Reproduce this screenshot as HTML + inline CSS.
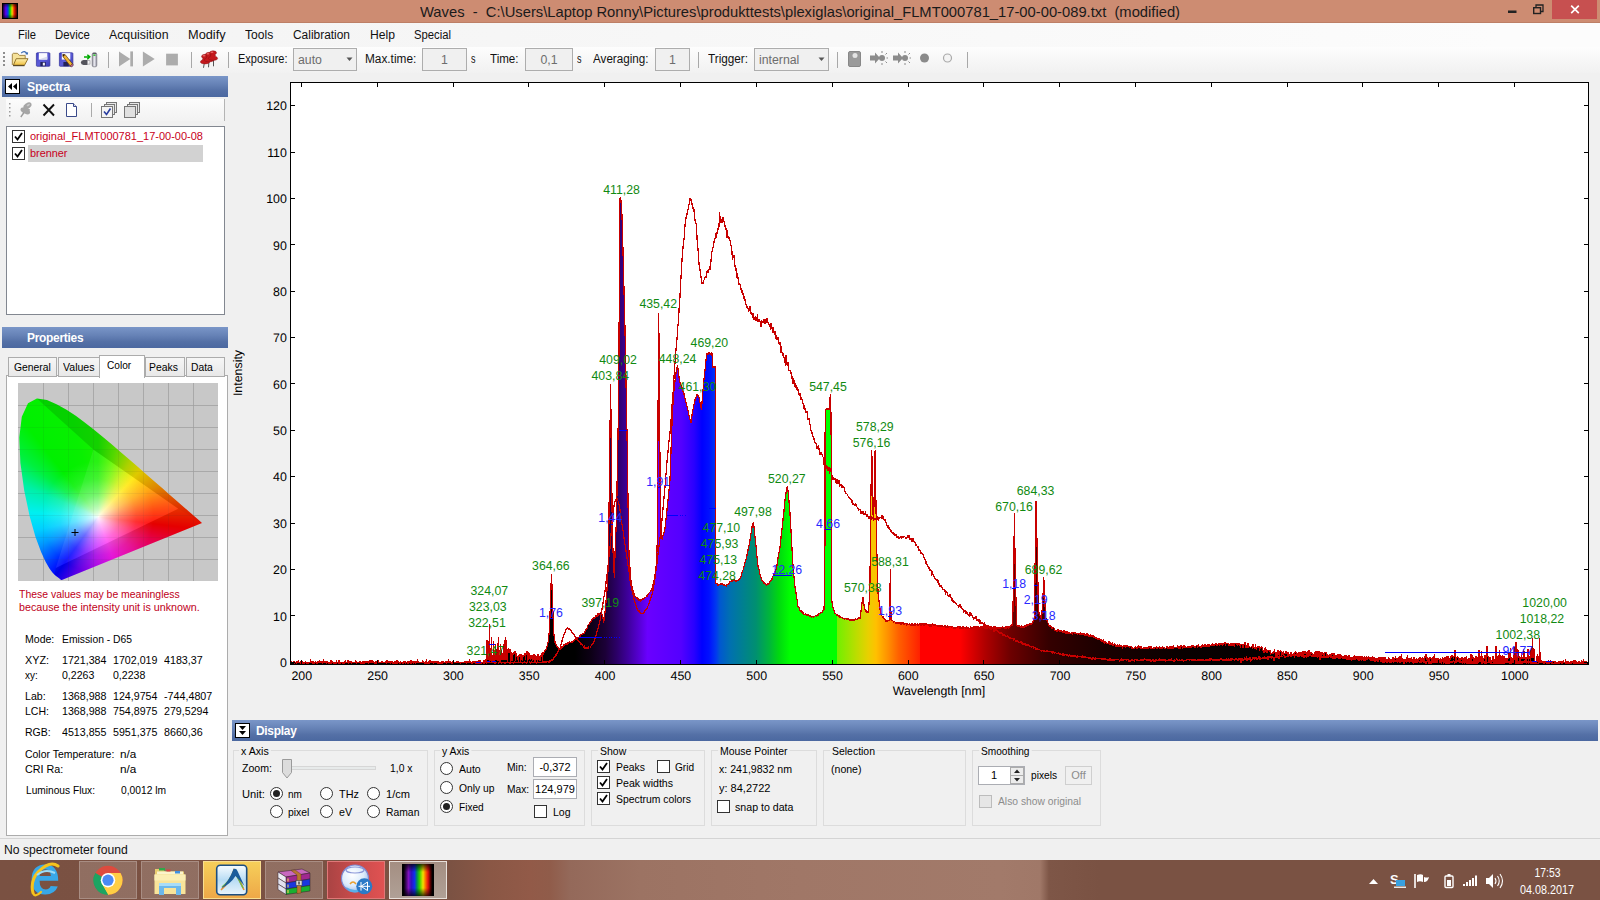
<!DOCTYPE html>
<html><head><meta charset='utf-8'><title>Waves</title>
<style>
*{box-sizing:border-box;margin:0;padding:0}
html,body{width:1600px;height:900px;overflow:hidden;background:#f0f0f0;font-family:"Liberation Sans",Arial,sans-serif;font-size:11px;color:#000}
.abs,.abs *{position:absolute}
.t{position:absolute;white-space:nowrap;line-height:1;transform-origin:0 50%;transform:scaleX(.96)}
#titlebar{position:absolute;left:0;top:0;width:1600px;height:23px;background:#cd8c72;border-bottom:1px solid #bd7f66}
#title{left:420px;top:4px;font-size:15px;color:#1a1a1a}
#close{position:absolute;left:1552px;top:0;width:45px;height:19px;background:#c75050}
#menubar{position:absolute;left:0;top:23px;width:1600px;height:24px;background:linear-gradient(90deg,#f4f4f4,#f6f6f6 500px,#fcfcfc 1500px)}
.mi{position:absolute;top:28px;font-size:12.3px;transform-origin:0 50%;color:#111;white-space:nowrap;line-height:14px}
#toolbar{position:absolute;left:0;top:47px;width:1600px;height:26px;background:linear-gradient(#fdfdfd,#f1f1f1)}
.tl{position:absolute;top:52px;font-size:12.3px;transform-origin:0 50%;color:#111;white-space:nowrap;line-height:14px}
.tbx{position:absolute;top:48px;height:23px;border:1px solid #adadad;background:#f0f0f0;color:#6d6d6d;font-size:12.3px;line-height:22px;text-align:center}
.sep{position:absolute;width:1px;background:#a8a8a8}
.hdr{position:absolute;height:21px;background:linear-gradient(#7a96c8,#6682b6 40%,#5470a6 70%,#4b68a0);color:#fff;font-weight:bold;font-size:13px;line-height:20px;letter-spacing:-0.3px}
.hbox{position:absolute;width:15px;height:15px;background:#fff;border:1px solid #000}
.list{position:absolute;background:#fff;border:1px solid #828790}
.cb{position:absolute;width:13px;height:13px;background:#fff;border:1px solid #333}
.cb.dis{border-color:#bcbcbc;background:#e6e6e6}
.rb{position:absolute;width:13px;height:13px;background:#fff;border:1px solid #333;border-radius:50%}
.rb.on::after{content:"";position:absolute;left:2px;top:2px;width:7px;height:7px;border-radius:50%;background:#222}
.grp{position:absolute;border:1px solid #dcdcdc}
.gl{position:absolute;background:#f0f0f0;box-shadow:-2px 0 0 #f0f0f0,2px 0 0 #f0f0f0;transform-origin:0 50%;white-space:nowrap;line-height:12px;font-size:11px}
.inp{position:absolute;background:#fff;border:1px solid #abadb3;font-size:11px;line-height:17px;text-align:center;white-space:nowrap;overflow:hidden}
.tab{position:absolute;top:357px;height:20px;border:1px solid #acacac;background:linear-gradient(#f6f6f6,#e8e8e8);font-size:11px;line-height:19px;text-align:center;white-space:nowrap}
.tab.sel{top:355px;height:23px;background:#fff;border-bottom:none;line-height:21px;z-index:2}
#taskbar{position:absolute;left:0;top:860px;width:1600px;height:40px;background:linear-gradient(90deg,#7a5142 0px,#7b5243 450px,#8a5745 490px,#925a48 530px,#905c4a 550px,#94695a 570px,#9c7363 640px,#a07767 800px,#a27a6a 1000px,#a07868 1040px,#7e5647 1049px,#7a5243 1100px,#7a5243 1600px)}
.tb{position:absolute;top:861px;width:58px;height:38px;border:1px solid rgba(255,255,255,.22);background:rgba(255,255,255,.17)}

</style></head>
<body>
<div id="titlebar">
 <svg style="position:absolute;left:2px;top:3px" width="16" height="16"><defs><linearGradient id="ai" x1="0" x2="1" y1="0" y2="0"><stop offset="0" stop-color="#200040"/><stop offset=".2" stop-color="#6000ff"/><stop offset=".35" stop-color="#0040ff"/><stop offset=".5" stop-color="#00e000"/><stop offset=".65" stop-color="#ffe000"/><stop offset=".8" stop-color="#ff2000"/><stop offset="1" stop-color="#400000"/></linearGradient><linearGradient id="aiv" x1="0" x2="0" y1="0" y2="1"><stop offset="0" stop-color="#000" stop-opacity=".7"/><stop offset=".3" stop-color="#000" stop-opacity=".05"/><stop offset=".7" stop-color="#000" stop-opacity=".05"/><stop offset="1" stop-color="#000" stop-opacity=".7"/></linearGradient></defs><rect width="16" height="16" fill="#000"/><rect x="1" y="1" width="14" height="14" fill="url(#ai)"/><rect width="16" height="16" fill="url(#aiv)"/></svg>
 <span class="t" id="title" style="transform:scaleX(0.9830)">Waves&nbsp; -&nbsp; C:\Users\Laptop Ronny\Pictures\produkttests\plexiglas\original_FLMT000781_17-00-00-089.txt&nbsp; (modified)</span>
 <div id="close"></div>
 <svg style="position:absolute;left:1500px;top:0" width="100" height="22"><rect x="8" y="10.500" width="8.500" height="2.500" fill="#222"/><path d="M36,7.500 v-2.500 h7 v6.500 h-2.500" stroke="#222" stroke-width="1.300" fill="none"/><rect x="33.700" y="7.700" width="6.800" height="5.800" stroke="#222" stroke-width="1.400" fill="none"/><path d="M71.200,5.700 l7.600,7.400 M78.800,5.700 l-7.600,7.400" stroke="#fff" stroke-width="1.700" fill="none"/></svg>
</div>
<div id="menubar"></div>
<span class="mi" style="left:18px;transform:scaleX(0.9078)">File</span>
<span class="mi" style="left:55px;transform:scaleX(0.9230)">Device</span>
<span class="mi" style="left:109px;transform:scaleX(1.0005)">Acquisition</span>
<span class="mi" style="left:188px;transform:scaleX(1.0381)">Modify</span>
<span class="mi" style="left:245px;transform:scaleX(0.9819)">Tools</span>
<span class="mi" style="left:293px;transform:scaleX(0.9694)">Calibration</span>
<span class="mi" style="left:370px;transform:scaleX(0.9883)">Help</span>
<span class="mi" style="left:414px;transform:scaleX(0.9171)">Special</span>
<div id="toolbar"></div>
<svg id="tbicons" style="position:absolute;left:0;top:45.500px" width="1000" height="26">
 <g fill="#8e8e8e"><rect x="3" y="6" width="2" height="2"/><rect x="3" y="10" width="2" height="2"/><rect x="3" y="14" width="2" height="2"/><rect x="3" y="18" width="2" height="2"/></g>
 <!-- open folder -->
 <defs><linearGradient id="fo1" x1="0" x2="0" y1="0" y2="1"><stop offset="0" stop-color="#fdf0b0"/><stop offset="1" stop-color="#f0c040"/></linearGradient><linearGradient id="fl1" x1="0" x2="1" y1="0" y2="1"><stop offset="0" stop-color="#4040c8"/><stop offset=".5" stop-color="#5c5cd8"/><stop offset="1" stop-color="#3c3cb8"/></linearGradient><linearGradient id="us1" x1="0" x2="1" y1="0" y2="0"><stop offset="0" stop-color="#8c8c98"/><stop offset=".45" stop-color="#eeeef4"/><stop offset="1" stop-color="#9090a0"/></linearGradient></defs>
 <path d="M12.300,19 V8.200 l1,-0.900 h4 l2.300,2.100 h5.600 v3.200" fill="#f6e29a" stroke="#9a7c38" stroke-width=".9"/>
 <path d="M13.400,19.200 L16.200,12.700 H28 L24.500,19.200z" fill="url(#fo1)" stroke="#8a6a20" stroke-width=".9"/><path d="M13,19.700 h11.500" stroke="#3a2c10" stroke-width=".9"/>
 <path d="M21.200,7.200 q3.200,-3.600 6.200,0.800" fill="none" stroke="#3868b0" stroke-width="1.100"/><path d="M28.100,6 l-0.500,2.700 l-2.600,-0.800z" fill="#3868b0"/>
 <!-- save -->
 <rect x="36.400" y="6.800" width="13.500" height="13.500" rx=".8" fill="url(#fl1)" stroke="#30309a" stroke-width=".7"/><rect x="38.800" y="7.100" width="8.500" height="6.500" fill="#fafaff"/><path d="M38.800,13.600 h8.500 l0,-3z" fill="#d8dcec"/><rect x="40.400" y="16" width="5.300" height="4.200" fill="#22225c"/><rect x="42.800" y="16.700" width="2.100" height="2.800" fill="#f0f0f8"/>
 <!-- save as -->
 <rect x="59.400" y="6.800" width="13.500" height="13.500" rx=".8" fill="url(#fl1)" stroke="#30309a" stroke-width=".7"/><rect x="61.800" y="7.100" width="8.500" height="6.500" fill="#fafaff"/><rect x="63.400" y="16" width="5.300" height="4.200" fill="#22225c"/>
 <path d="M62.800,8.400 l2.400,0.300 l7.300,9.200 l-2.300,2 l-7.200,-9.200z" fill="#f0b432" stroke="#5a3a10" stroke-width=".7"/><path d="M62.800,8.400 l2.400,0.300 l-2.200,2z" fill="#2a1a0a"/><path d="M70.200,19.900 l2.300,-2 l0.900,1.200 l-2.300,2z" fill="#e070a0" stroke="#5a3a10" stroke-width=".5"/>
 <!-- device import -->
 <rect x="92.200" y="6.800" width="4.600" height="14" rx="1.600" fill="url(#us1)" stroke="#74747c" stroke-width=".7"/><rect x="93.300" y="8.400" width="2.200" height="1.500" fill="#30c030"/><rect x="92.900" y="6.900" width="3.200" height="1" fill="#50505a"/>
 <path d="M87.500,14.100 h-4 q-2.600,0.400 -2.600,2.500 q0,2.100 2.600,2.500 h4z" fill="#54545c"/><rect x="87.500" y="14.700" width="2.500" height="3.400" fill="#f8f8f8" stroke="#8a8a92" stroke-width=".6"/>
 <path d="M84,10.900 h5 M87.300,8.800 l2.500,2.100 l-2.500,2.300" stroke="#00ac00" stroke-width="1.500" fill="none"/>
 <!-- playback disabled -->
 <g fill="#acacac"><path d="M119,5.400 L130.300,12.900 L119,20.400z"/><rect x="130.300" y="5.400" width="2.700" height="15"/><path d="M142.900,5.400 L154.700,12.900 L142.900,20.400z"/><rect x="166.100" y="7.700" width="11.800" height="11.700"/></g>
 <!-- pins -->
 <g transform="translate(0,1.800)">
 <g stroke="#555" stroke-width="1"><path d="M204.500,14 l-1,6 M209,13 l-0.500,6.500 M213.500,12 l0,6.500"/></g>
 <g fill="#c4181c" stroke="#8a1014" stroke-width=".5">
  <path d="M201.500,9 q0,-2.500 3.500,-2.500 q3.500,0 3.500,2 q0,1.200 -1.500,1.600 l0.600,2 q2,0.600 2,2.200 q0,1.800 -4.600,1.800 q-4.600,0 -4.600,-1.800 q0,-1.600 2,-2.200 l0.600,-2 q-1.500,-0.400 -1.500,-1.100z"/>
  <path d="M205.500,7 q0,-2.500 3.500,-2.500 q3.500,0 3.500,2 q0,1.200 -1.500,1.600 l0.600,2 q2,0.600 2,2.200 q0,1.800 -4.600,1.800 q-4.600,0 -4.600,-1.800 q0,-1.600 2,-2.200 l0.600,-2 q-1.500,-0.400 -1.500,-1.100z"/>
  <path d="M209.500,5.500 q0,-2.500 3.500,-2.500 q3.500,0 3.500,2 q0,1.200 -1.500,1.600 l0.600,2 q2,0.600 2,2.200 q0,1.800 -4.600,1.800 q-4.600,0 -4.600,-1.800 q0,-1.600 2,-2.200 l0.600,-2 q-1.500,-0.400 -1.500,-1.100z"/>
 </g>
 <g fill="#e86868"><ellipse cx="204" cy="8" rx="1.500" ry=".8"/><ellipse cx="208" cy="6" rx="1.500" ry=".8"/><ellipse cx="212" cy="4.500" rx="1.500" ry=".8"/></g>
  </g>
 <!-- right icons -->
 <rect x="848.500" y="5.500" width="12" height="15" rx="1.500" fill="#9a9a9a" stroke="#888"/><circle cx="855" cy="9.500" r="2.500" fill="#e4e4e4"/>
 <g fill="#8c8c8c" stroke="#8c8c8c"><path d="M870,9.500 h5 v-3 l5,5.500 l-5,5.500 v-3 h-5z" stroke="none"/><circle cx="882" cy="12" r="3" stroke="none"/><path d="M882,5 v2 M882,17 v2 M887,7 l-1.500,1.500 M887,17 l-1.500,-1.500 M888,12 h-1.500" stroke-width="1" fill="none"/></g>
 <g fill="#8c8c8c" stroke="#8c8c8c"><path d="M893,9.500 h5 v-3 l5,5.500 l-5,5.500 v-3 h-5z" stroke="none"/><circle cx="905" cy="12" r="3" stroke="none"/><path d="M905,5 v2 M905,17 v2 M910,7 l-1.500,1.500 M910,17 l-1.500,-1.500 M911,12 h-1.500" stroke-width="1" fill="none"/></g>
 <circle cx="924.500" cy="12" r="4.500" fill="#8a8a8a"/><circle cx="947.500" cy="12" r="4" fill="#f4f4f4" stroke="#aaa" stroke-width="1.200"/>
</svg>
<div class="sep" style="left:108px;top:52px;height:16px"></div>
<div class="sep" style="left:191px;top:52px;height:16px"></div>
<div class="sep" style="left:228px;top:52px;height:16px"></div>
<div class="sep" style="left:698px;top:52px;height:16px"></div>
<div class="sep" style="left:837px;top:52px;height:16px"></div>
<div class="sep" style="left:967px;top:52px;height:16px"></div>
<span class="tl" style="left:238px;transform:scaleX(0.8939)">Exposure:</span>
<div class="tbx" style="left:293px;width:64px;text-align:left;padding-left:4px">auto</div>
<svg style="position:absolute;left:346px;top:57px" width="8" height="5"><path d="M0.500,0.500 h6 l-3,3.500z" fill="#555"/></svg>
<span class="tl" style="left:365px;transform:scaleX(0.9616)">Max.time:</span>
<div class="tbx" style="left:422px;width:45px">1</div>
<span class="tl" style="left:471px;transform:scaleX(0.7310)">s</span>
<span class="tl" style="left:490px;transform:scaleX(0.9407)">Time:</span>
<div class="tbx" style="left:525px;width:48px">0,1</div>
<span class="tl" style="left:577px;transform:scaleX(0.7310)">s</span>
<span class="tl" style="left:593px;transform:scaleX(0.9475)">Averaging:</span>
<div class="tbx" style="left:655px;width:35px">1</div>
<span class="tl" style="left:708px;transform:scaleX(0.9542)">Trigger:</span>
<div class="tbx" style="left:754px;width:75px;text-align:left;padding-left:4px">internal</div>
<svg style="position:absolute;left:818px;top:57px" width="8" height="5"><path d="M0.500,0.500 h6 l-3,3.500z" fill="#555"/></svg>

<div class="hdr" style="left:2px;top:76px;width:226px"><span class="t" style="left:25px;top:4px;font-size:13px;transform:scaleX(0.9431)">Spectra</span></div>
<div class="hbox" style="left:5px;top:79px;height:15px"><svg width="13" height="13" style="position:absolute;left:0;top:0"><path d="M6,3 v7 l-4,-3.500z M11,3 v7 l-4,-3.500z" fill="#000"/></svg></div>
<div style="position:absolute;left:6px;top:99px;width:219px;height:22px;background:linear-gradient(#fcfcfc,#f2f2f2);border-right:1px solid #b4b4b4"></div>
<svg style="position:absolute;left:6px;top:99px" width="219" height="22">
 <g fill="#9a9a9a"><rect x="3" y="4" width="1.500" height="1.500"/><rect x="3" y="8" width="1.500" height="1.500"/><rect x="3" y="12" width="1.500" height="1.500"/><rect x="3" y="16" width="1.500" height="1.500"/></g>
 <!-- pin grey -->
 <g fill="#a6a6a6"><ellipse cx="21.500" cy="6.800" rx="4.400" ry="2.800" transform="rotate(-32 21.500 6.800)"/><path d="M18.300,7.500 l5.800,3 l-1.200,3 l-6.600,-3.200z"/><ellipse cx="19.300" cy="12" rx="5.200" ry="2.500" transform="rotate(27 19.300 12)"/></g><path d="M18,13.500 l-3.200,4.500" stroke="#9c9c9c" stroke-width="1.400"/><ellipse cx="22.300" cy="6" rx="1.800" ry="1" fill="#c8c8c8" transform="rotate(-32 22.300 6)"/>
 <!-- X -->
 <path d="M37.500,5.500 l10.500,11 M48,5.500 l-10.500,11" stroke="#111" stroke-width="1.900" fill="none"/>
 <!-- page -->
 <path d="M60.500,4.500 h7 l3,3 v10 h-10z" fill="#fff" stroke="#3a4a8a"/><path d="M67.500,4.500 v3 h3" fill="#dde" stroke="#3a4a8a"/>
 <path d="M85.500,4 v14" stroke="#aaa"/>
 <!-- stacks -->
 <g fill="#e8e8e8" stroke="#777"><rect x="100.500" y="3.500" width="10" height="10"/><rect x="98.500" y="5.500" width="10" height="10"/><rect x="95.500" y="7.500" width="11" height="11" fill="#f4f4f4"/></g><path d="M98,12.500 l2.500,3 l4,-6" stroke="#2a3ea0" stroke-width="1.600" fill="none"/>
 <g fill="#e8e8e8" stroke="#777"><rect x="123.500" y="3.500" width="10" height="10"/><rect x="121.500" y="5.500" width="10" height="10"/><rect x="118.500" y="7.500" width="11" height="11" fill="#e0e0e0"/></g>
</svg>
<div class="list" style="left:6px;top:126px;width:219px;height:189px"></div>
<div style="position:absolute;left:28px;top:145px;width:175px;height:17px;background:#d2d2d2"></div>
<div class="cb" style="left:12px;top:130px"><svg width="11" height="11" style="position:absolute;left:0;top:0"><path d="M2,5.500 l2.500,3 l4.500,-6.500" stroke="#000" stroke-width="1.800" fill="none"/></svg></div>
<div class="cb" style="left:12px;top:147px"><svg width="11" height="11" style="position:absolute;left:0;top:0"><path d="M2,5.500 l2.500,3 l4.500,-6.500" stroke="#000" stroke-width="1.800" fill="none"/></svg></div>
<span class="t" id="li1" style="left:30px;top:131px;color:#c8001a;font-size:11.500px;transform:scaleX(0.9561)">original_FLMT000781_17-00-00-08</span>
<span class="t" id="li2" style="left:30px;top:148px;color:#c8001a;font-size:11.500px;transform:scaleX(0.9460)">brenner</span>

<div class="hdr" style="left:2px;top:327px;width:226px"><span class="t" style="left:25px;top:4px;font-size:13px;transform:scaleX(0.9182)">Properties</span></div>
<div class="list" style="left:6px;top:375px;width:222px;height:461px;border-color:#acacac"></div>
<div class="tab" style="left:8px;width:49px"></div>
<div class="tab" style="left:58px;width:42px"></div>
<div class="tab" style="left:145px;width:40px"></div>
<div class="tab" style="left:186px;width:39px"></div>
<div class="tab sel" style="left:99px;width:46px"></div>
<span class="t" style="left:13.500px;top:362px;z-index:3;transform:scaleX(0.9389)">General</span>
<span class="t" style="left:63px;top:362px;z-index:3;transform:scaleX(0.9595)">Values</span>
<span class="t" style="left:106.800px;top:360px;z-index:3;transform:scaleX(0.9203)">Color</span>
<span class="t" style="left:149.300px;top:362px;z-index:3;transform:scaleX(0.9451)">Peaks</span>
<span class="t" style="left:191.300px;top:362px;z-index:3;transform:scaleX(0.9355)">Data</span>
<!-- CIE diagram -->
<div id="cie" style="position:absolute;left:18px;top:383px;width:200px;height:198px;background:#c8c8c8;overflow:hidden">
 <svg width="200" height="198" style="position:absolute;left:0;top:0"><g stroke="#b2b2b2" stroke-width="1"><path d="M25.500,0 V198 M50.500,0 V198 M75.500,0 V198 M100.500,0 V198 M125.500,0 V198 M150.500,0 V198 M175.500,0 V198"/><path d="M0,22.500 H200 M0,44.500 H200 M0,66.500 H200 M0,88.500 H200 M0,110.500 H200 M0,132.500 H200 M0,154.500 H200 M0,176.500 H200"/></g></svg>
 <div style="position:absolute;left:0;top:0;width:200px;height:198px;clip-path:polygon(43.8px 196.9px,43.1px 196.9px,41.4px 195.6px,39.4px 194.1px,38.0px 193.0px,36.3px 191.5px,34.2px 189.3px,31.3px 185.3px,27.7px 179.0px,23.1px 168.9px,17.5px 154.0px,11.7px 133.4px,6.2px 107.6px,2.4px 80.1px,1.3px 54.6px,3.8px 33.7px,10.0px 20.2px,18.9px 15.4px,28.9px 17.1px,39.0px 21.5px,48.5px 26.8px,57.7px 32.8px,66.7px 39.4px,75.7px 46.4px,84.6px 53.7px,93.6px 61.2px,102.5px 68.9px,111.3px 76.5px,120.0px 84.1px,128.4px 91.4px,136.5px 98.5px,144.1px 105.1px,151.0px 111.2px,157.1px 116.4px,166.8px 124.9px,173.2px 130.5px,180.1px 136.5px,184.0px 139.9px);background:radial-gradient(circle at 80px 134px,rgba(255,255,255,.97) 0,rgba(255,255,255,.72) 8px,rgba(255,255,255,.38) 22px,rgba(255,255,255,.13) 38px,rgba(255,255,255,0) 56px),conic-gradient(from 0deg at 80px 134px,#18f000 0deg,#60f800 14deg,#c8f000 30deg,#ffe800 42deg,#ffa000 62deg,#ff4000 82deg,#ff0000 97deg,#ff0050 112deg,#ff00a0 132deg,#ff00f0 160deg,#c000ff 182deg,#6000ff 202deg,#0000ff 216deg,#0048ff 229deg,#0098ff 244deg,#00d0ff 258deg,#00f0f0 274deg,#00f0a8 293deg,#00f040 308deg,#00f000 322deg,#08f000 345deg,#18f000 360deg)"></div>
 <svg width="200" height="198" style="position:absolute;left:0;top:0"><g stroke="rgba(60,60,60,.07)" stroke-width="1"><path d="M25.500,0 V198 M50.500,0 V198 M75.500,0 V198 M100.500,0 V198 M125.500,0 V198 M150.500,0 V198 M175.500,0 V198"/><path d="M0,22.500 H200 M0,44.500 H200 M0,66.500 H200 M0,88.500 H200 M0,110.500 H200 M0,132.500 H200 M0,154.500 H200 M0,176.500 H200"/></g><path d="M18.9,15.4 L28.9,17.1 L39.0,21.5 L48.5,26.8 L57.7,32.8 L66.7,39.4 L75.7,46.4 L84.6,53.7 L93.6,61.2 L102.5,68.9 L111.3,76.5 L120.0,84.1 L128.4,91.4 L136.5,98.5 L144.1,105.1 L151.0,111.2 L157.1,116.4 L166.8,124.9 L173.2,130.5 L180.1,136.5 L184.0,139.9 L160.3,125.7 L75.3,66.6Z" fill="rgba(0,0,0,.13)"/><path d="M184.0,139.9 L43.8,196.9 L36.3,191.5 L37.8,184.9 L160.3,125.7Z" fill="rgba(0,0,0,.1)"/><path d="M160.300,125.700 L75.300,66.600 L37.800,184.900Z" fill="rgba(255,255,255,.08)"/><path d="M53.500,149.500 h7 M57,146 v7" stroke="#000" stroke-width="1"/></svg>
</div>
<span class="t" style="left:19px;top:589px;color:#c00020;transform:scaleX(0.9488)">These values may be meaningless</span>
<span class="t" style="left:19px;top:602px;color:#c00020;transform:scaleX(0.9753)">because the intensity unit is unknown.</span>
<div id="props">
<span class="t" style="left:25px;top:634px;transform:scaleX(0.9582)">Mode:</span><span class="t" style="left:62px;top:634px;transform:scaleX(0.9386)">Emission - D65</span>
<span class="t" style="left:25px;top:655px;transform:scaleX(0.9815)">XYZ:</span><span class="t" style="left:62px;top:655px;transform:scaleX(0.9675)">1721,384</span><span class="t" style="left:113px;top:655px;transform:scaleX(0.9675)">1702,019</span><span class="t" style="left:164px;top:655px;transform:scaleX(0.9732)">4183,37</span>
<span class="t" style="left:25px;top:670px;transform:scaleX(0.9031)">xy:</span><span class="t" style="left:62px;top:670px;transform:scaleX(0.9597)">0,2263</span><span class="t" style="left:113px;top:670px;transform:scaleX(0.9597)">0,2238</span>
<span class="t" style="left:25px;top:691px;transform:scaleX(0.9663)">Lab:</span><span class="t" style="left:62px;top:691px;transform:scaleX(0.9675)">1368,988</span><span class="t" style="left:113px;top:691px;transform:scaleX(0.9675)">124,9754</span><span class="t" style="left:164px;top:691px;transform:scaleX(0.9748)">-744,4807</span>
<span class="t" style="left:25px;top:706px;transform:scaleX(0.9576)">LCH:</span><span class="t" style="left:62px;top:706px;transform:scaleX(0.9675)">1368,988</span><span class="t" style="left:113px;top:706px;transform:scaleX(0.9675)">754,8975</span><span class="t" style="left:164px;top:706px;transform:scaleX(0.9675)">279,5294</span>
<span class="t" style="left:25px;top:727px;transform:scaleX(0.9552)">RGB:</span><span class="t" style="left:62px;top:727px;transform:scaleX(0.9675)">4513,855</span><span class="t" style="left:113px;top:727px;transform:scaleX(0.9675)">5951,375</span><span class="t" style="left:164px;top:727px;transform:scaleX(0.9732)">8660,36</span>
<span class="t" style="left:25px;top:749px;transform:scaleX(0.9505)">Color Temperature:</span><span class="t" style="left:120px;top:749px;transform:scaleX(1.0656)">n/a</span>
<span class="t" style="left:25px;top:764px;transform:scaleX(0.9789)">CRI Ra:</span><span class="t" style="left:120px;top:764px;transform:scaleX(1.0656)">n/a</span>
<span class="t" style="left:26px;top:785px;transform:scaleX(0.9250)">Luminous Flux:</span><span class="t" style="left:121px;top:785px;transform:scaleX(0.9314)">0,0012 lm</span>
</div>

<svg id="chart" width="1370" height="640" viewBox="230 72 1370 640" style="position:absolute;left:230px;top:72px" shape-rendering="crispEdges">
<defs><linearGradient id="sg" gradientUnits="userSpaceOnUse" x1="290" y1="0" x2="1588" y2="0">
<stop offset="0.000%" stop-color="#000000"/>
<stop offset="21.957%" stop-color="#000000"/>
<stop offset="23.112%" stop-color="#0c0014"/>
<stop offset="24.307%" stop-color="#1c0038"/>
<stop offset="25.193%" stop-color="#2c0068"/>
<stop offset="26.098%" stop-color="#4000a0"/>
<stop offset="26.965%" stop-color="#5800d8"/>
<stop offset="27.542%" stop-color="#6a00ff"/>
<stop offset="30.123%" stop-color="#5400ff"/>
<stop offset="31.125%" stop-color="#2a00ff"/>
<stop offset="31.741%" stop-color="#0000ff"/>
<stop offset="32.280%" stop-color="#0010ff"/>
<stop offset="32.820%" stop-color="#0038f0"/>
<stop offset="33.128%" stop-color="#0058d0"/>
<stop offset="33.898%" stop-color="#0070b0"/>
<stop offset="35.901%" stop-color="#009070"/>
<stop offset="36.980%" stop-color="#00b838"/>
<stop offset="37.654%" stop-color="#00d810"/>
<stop offset="38.521%" stop-color="#00ff00"/>
<stop offset="42.103%" stop-color="#00ff00"/>
<stop offset="42.142%" stop-color="#70f000"/>
<stop offset="43.721%" stop-color="#c0dc00"/>
<stop offset="44.530%" stop-color="#e8d000"/>
<stop offset="45.146%" stop-color="#ffc000"/>
<stop offset="46.071%" stop-color="#ff9000"/>
<stop offset="46.899%" stop-color="#ff6000"/>
<stop offset="48.536%" stop-color="#ff2000"/>
<stop offset="48.575%" stop-color="#ff0000"/>
<stop offset="51.618%" stop-color="#ff0000"/>
<stop offset="53.544%" stop-color="#b00000"/>
<stop offset="55.547%" stop-color="#6c0000"/>
<stop offset="58.475%" stop-color="#340000"/>
<stop offset="62.789%" stop-color="#1a0000"/>
<stop offset="68.567%" stop-color="#0a0000"/>
<stop offset="77.812%" stop-color="#000000"/>
<stop offset="100.000%" stop-color="#000000"/>
</linearGradient></defs>
<rect x="290" y="82" width="1299" height="583" fill="#fff"/>
<path d="M290.5,662.7 L291.0,662.1 L291.5,661.4 L292.0,662.1 L292.5,662.3 L293.0,662.3 L293.5,662.6 L294.0,661.7 L294.5,662.4 L295.0,662.7 L295.5,662.3 L296.0,662.6 L296.5,662.3 L297.0,661.8 L297.5,662.3 L298.0,661.5 L298.5,660.5 L299.0,662.5 L299.5,662.6 L300.0,662.3 L300.5,661.6 L301.0,662.4 L301.5,662.2 L302.0,662.1 L302.5,661.8 L303.0,662.6 L303.5,662.3 L304.0,662.7 L304.5,662.2 L305.0,662.5 L305.5,661.6 L306.0,662.5 L306.5,662.7 L307.0,662.8 L307.5,662.7 L308.0,662.8 L308.5,662.4 L309.0,662.7 L309.5,662.4 L310.0,662.8 L310.5,660.1 L311.0,662.3 L311.5,662.0 L312.0,662.2 L312.5,661.5 L313.0,661.7 L313.5,662.7 L314.0,662.1 L314.5,662.5 L315.0,662.2 L315.5,661.8 L316.0,662.7 L316.5,662.3 L317.0,662.4 L317.5,661.4 L318.0,661.6 L318.5,662.4 L319.0,662.6 L319.5,661.0 L320.0,661.1 L320.5,662.7 L321.0,662.6 L321.5,662.7 L322.0,661.3 L322.5,662.6 L323.0,662.7 L323.5,659.7 L324.0,662.7 L324.5,661.7 L325.0,661.8 L325.5,662.3 L326.0,662.7 L326.5,662.2 L327.0,661.5 L327.5,661.6 L328.0,662.3 L328.5,662.5 L329.0,662.9 L329.5,662.7 L330.0,662.5 L330.5,662.3 L331.0,659.9 L331.5,660.5 L332.0,662.7 L332.5,662.0 L333.0,662.4 L333.5,662.5 L334.0,662.4 L334.5,662.2 L335.0,662.7 L335.5,662.4 L336.0,662.5 L336.5,660.9 L337.0,662.3 L337.5,662.2 L338.0,662.5 L338.5,660.5 L339.0,661.9 L339.5,660.5 L340.0,662.6 L340.5,662.5 L341.0,662.7 L341.5,662.4 L342.0,662.4 L342.5,662.7 L343.0,661.9 L343.5,662.4 L344.0,662.2 L344.5,661.7 L345.0,661.8 L345.5,661.0 L346.0,662.8 L346.5,662.2 L347.0,662.0 L347.5,661.6 L348.0,660.6 L348.5,662.6 L349.0,662.3 L349.5,662.1 L350.0,661.6 L350.5,662.1 L351.0,662.8 L351.5,661.3 L352.0,662.6 L352.5,662.7 L353.0,662.7 L353.5,662.3 L354.0,662.5 L354.5,662.7 L355.0,662.1 L355.5,660.5 L356.0,661.8 L356.5,661.5 L357.0,662.6 L357.5,662.6 L358.0,662.1 L358.5,662.7 L359.0,662.7 L359.5,662.3 L360.0,662.0 L360.5,661.6 L361.0,661.9 L361.5,662.7 L362.0,662.9 L362.5,662.1 L363.0,662.3 L363.5,662.8 L364.0,661.7 L364.5,662.2 L365.0,661.7 L365.5,662.3 L366.0,662.1 L366.5,662.1 L367.0,662.5 L367.5,661.2 L368.0,662.8 L368.5,662.1 L369.0,661.8 L369.5,660.6 L370.0,662.9 L370.5,662.2 L371.0,660.4 L371.5,662.7 L372.0,662.2 L372.5,661.1 L373.0,662.5 L373.5,662.3 L374.0,662.4 L374.5,662.7 L375.0,662.6 L375.5,662.3 L376.0,661.6 L376.5,662.6 L377.0,662.5 L377.5,661.8 L378.0,661.4 L378.5,661.0 L379.0,662.7 L379.5,662.7 L380.0,662.8 L380.5,662.5 L381.0,662.3 L381.5,662.0 L382.0,662.1 L382.5,661.9 L383.0,662.8 L383.5,662.7 L384.0,662.4 L384.5,662.4 L385.0,662.2 L385.5,661.9 L386.0,662.5 L386.5,662.9 L387.0,660.4 L387.5,662.3 L388.0,661.2 L388.5,662.4 L389.0,662.9 L389.5,662.1 L390.0,662.9 L390.5,662.2 L391.0,661.7 L391.5,662.7 L392.0,661.2 L392.5,662.7 L393.0,662.7 L393.5,662.8 L394.0,662.1 L394.5,662.5 L395.0,661.6 L395.5,662.3 L396.0,662.5 L396.5,662.6 L397.0,660.6 L397.5,662.7 L398.0,661.7 L398.5,661.7 L399.0,662.6 L399.5,662.2 L400.0,662.0 L400.5,662.1 L401.0,662.5 L401.5,662.2 L402.0,662.8 L402.5,662.6 L403.0,662.2 L403.5,662.7 L404.0,661.3 L404.5,662.7 L405.0,662.6 L405.5,662.0 L406.0,662.7 L406.5,662.7 L407.0,662.6 L407.5,662.1 L408.0,662.5 L408.5,661.4 L409.0,662.6 L409.5,661.6 L410.0,662.4 L410.5,661.6 L411.0,660.5 L411.5,662.8 L412.0,661.6 L412.5,661.2 L413.0,661.5 L413.5,662.9 L414.0,662.4 L414.5,661.6 L415.0,662.2 L415.5,661.5 L416.0,662.1 L416.5,661.3 L417.0,662.7 L417.5,659.8 L418.0,662.8 L418.5,661.6 L419.0,662.9 L419.5,662.4 L420.0,662.9 L420.5,662.6 L421.0,662.0 L421.5,662.3 L422.0,662.6 L422.5,660.9 L423.0,661.6 L423.5,662.5 L424.0,662.7 L424.5,662.3 L425.0,662.8 L425.5,661.7 L426.0,662.3 L426.5,660.1 L427.0,662.7 L427.5,662.4 L428.0,662.4 L428.5,661.8 L429.0,662.3 L429.5,662.0 L430.0,660.1 L430.5,662.0 L431.0,662.1 L431.5,662.5 L432.0,661.6 L432.5,662.3 L433.0,662.0 L433.5,662.9 L434.0,661.2 L434.5,662.3 L435.0,661.9 L435.5,661.9 L436.0,662.2 L436.5,661.3 L437.0,662.4 L437.5,662.6 L438.0,661.8 L438.5,662.0 L439.0,662.7 L439.5,662.9 L440.0,662.7 L440.5,662.2 L441.0,662.0 L441.5,661.4 L442.0,662.1 L442.5,662.3 L443.0,662.5 L443.5,662.6 L444.0,662.0 L444.5,662.4 L445.0,662.0 L445.5,662.4 L446.0,661.2 L446.5,661.6 L447.0,662.7 L447.5,662.8 L448.0,662.6 L448.5,659.8 L449.0,662.7 L449.5,662.0 L450.0,662.2 L450.5,661.6 L451.0,662.7 L451.5,662.9 L452.0,662.6 L452.5,662.8 L453.0,661.8 L453.5,661.6 L454.0,662.7 L454.5,662.8 L455.0,662.3 L455.5,662.7 L456.0,662.3 L456.5,662.1 L457.0,662.5 L457.5,662.7 L458.0,661.6 L458.5,662.0 L459.0,662.4 L459.5,662.6 L460.0,662.4 L460.5,662.5 L461.0,662.8 L461.5,662.8 L462.0,662.1 L462.5,662.2 L463.0,662.4 L463.5,662.6 L464.0,662.6 L464.5,661.7 L465.0,662.7 L465.5,662.1 L466.0,662.6 L466.5,662.6 L467.0,661.2 L467.5,661.8 L468.0,662.0 L468.5,661.7 L469.0,661.6 L469.5,659.9 L470.0,662.4 L470.5,661.9 L471.0,662.7 L471.5,662.8 L472.0,662.6 L472.5,662.7 L473.0,661.8 L473.5,661.6 L474.0,662.1 L474.5,661.7 L475.0,662.5 L475.5,662.8 L476.0,661.5 L476.5,662.7 L477.0,662.4 L477.5,661.9 L478.0,662.1 L478.5,661.0 L479.0,662.7 L479.5,662.4 L480.0,660.4 L480.5,662.4 L481.0,662.3 L481.5,662.2 L482.0,662.6 L482.5,662.5 L483.0,662.8 L483.5,662.8 L484.0,660.7 L484.5,662.7 L485.0,661.5 L485.5,661.0 L486.0,661.7 L486.5,650.3 L487.0,640.7 L487.5,644.3 L488.0,659.8 L488.5,641.8 L489.0,659.5 L489.5,624.8 L490.0,660.4 L490.5,649.0 L491.0,660.0 L491.5,637.5 L492.0,661.2 L492.5,656.5 L493.0,660.5 L493.5,641.2 L494.0,660.5 L494.5,651.1 L495.0,659.6 L495.5,644.2 L496.0,659.5 L496.5,649.4 L497.0,657.6 L497.5,643.3 L498.0,660.3 L498.5,638.0 L499.0,659.2 L499.5,650.5 L500.0,661.5 L500.5,645.1 L501.0,659.8 L501.5,650.3 L502.0,659.9 L502.5,654.0 L503.0,660.0 L503.5,644.6 L504.0,645.2 L504.5,641.0 L505.0,659.3 L505.5,637.3 L505.6,638.5 L506.0,641.1 L506.5,659.3 L507.0,649.6 L507.5,661.2 L508.0,651.0 L508.5,648.8 L509.0,649.2 L509.5,649.6 L510.0,649.1 L510.5,661.3 L511.0,652.1 L511.5,660.2 L512.0,657.4 L512.5,660.1 L513.0,653.4 L513.5,653.1 L514.0,653.1 L514.5,653.1 L515.0,651.6 L515.5,660.8 L516.0,653.2 L516.5,653.6 L517.0,656.5 L517.5,659.8 L518.0,656.7 L518.5,661.4 L519.0,655.7 L519.5,655.1 L520.0,653.9 L520.5,661.5 L521.0,654.6 L521.5,659.8 L522.0,655.4 L522.5,660.3 L523.0,655.7 L523.5,655.9 L524.0,655.7 L524.5,655.7 L525.0,653.6 L525.5,659.6 L526.0,654.0 L526.5,652.6 L527.0,651.6 L527.5,661.0 L528.0,651.9 L528.5,660.7 L529.0,653.7 L529.5,654.7 L530.0,658.5 L530.5,659.5 L531.0,655.7 L531.5,655.6 L532.0,657.7 L532.5,660.8 L533.0,655.4 L533.5,659.5 L534.0,654.7 L534.5,661.0 L535.0,655.7 L535.5,660.9 L536.0,656.3 L536.5,659.1 L537.0,655.9 L537.5,661.5 L538.0,654.8 L538.5,659.8 L539.0,656.6 L539.5,660.4 L540.0,658.0 L540.5,659.9 L541.0,655.6 L541.5,656.5 L542.0,653.3 L542.5,661.2 L543.0,652.8 L543.5,652.9 L544.0,652.6 L544.5,651.9 L545.0,650.4 L545.5,650.3 L546.0,649.7 L546.5,648.9 L547.0,646.8 L547.5,644.2 L548.0,642.9 L548.5,638.7 L549.0,633.8 L549.5,629.2 L550.0,615.2 L550.5,599.6 L551.0,586.0 L551.5,575.0 L552.0,586.9 L552.5,598.1 L553.0,614.2 L553.5,630.3 L554.0,634.9 L554.5,637.9 L555.0,642.2 L555.5,642.8 L556.0,644.2 L556.5,646.2 L557.0,647.0 L557.5,646.8 L558.0,647.7 L558.5,648.7 L559.0,648.1 L559.5,649.5 L560.0,649.4 L560.5,648.8 L561.0,648.8 L561.5,646.6 L562.0,646.4 L562.5,647.3 L563.0,646.8 L563.5,644.9 L564.0,646.0 L564.5,644.3 L565.0,644.3 L565.5,644.0 L566.0,644.1 L566.5,644.0 L567.0,644.8 L567.5,643.6 L568.0,642.7 L568.5,642.9 L569.0,642.2 L569.5,642.1 L570.0,642.7 L570.5,642.7 L571.0,642.0 L571.5,642.1 L572.0,641.4 L572.5,642.3 L573.0,641.4 L573.5,640.5 L574.0,640.8 L574.5,639.8 L575.0,639.6 L575.5,638.8 L576.0,639.8 L576.5,638.4 L577.0,639.3 L577.5,637.8 L578.0,636.9 L578.5,637.6 L578.8,637.5 L579.0,637.5 L579.5,635.6 L580.0,636.4 L580.5,636.1 L581.0,634.5 L581.5,634.4 L582.0,634.2 L582.5,633.2 L583.0,634.1 L583.5,633.4 L584.0,633.4 L584.5,632.2 L585.0,632.0 L585.5,630.4 L586.0,629.6 L586.5,629.5 L587.0,628.9 L587.5,626.3 L588.0,625.1 L588.5,624.3 L589.0,624.2 L589.5,624.1 L590.0,622.1 L590.5,621.8 L591.0,621.0 L591.5,621.2 L592.0,619.3 L592.5,618.5 L593.0,619.0 L593.5,618.2 L594.0,617.6 L594.5,618.1 L595.0,617.5 L595.5,615.9 L596.0,616.4 L596.5,616.5 L597.0,616.2 L597.5,614.0 L598.0,615.3 L598.5,613.5 L599.0,614.5 L599.5,614.1 L600.0,614.3 L600.5,613.5 L601.0,612.3 L601.5,614.3 L602.0,614.6 L602.5,616.5 L603.0,617.7 L603.5,620.5 L603.8,622.3 L604.0,619.4 L604.5,616.2 L605.0,612.3 L605.5,606.9 L606.0,601.6 L606.5,595.4 L607.0,589.4 L607.5,579.6 L608.0,569.8 L608.5,559.3 L609.0,515.3 L609.5,469.3 L610.0,430.2 L610.5,392.5 L610.6,384.5 L611.0,418.0 L611.5,461.1 L611.6,470.5 L612.0,501.3 L612.5,539.6 L613.0,550.2 L613.5,561.1 L614.0,570.0 L614.3,577.8 L614.5,570.9 L615.0,554.9 L615.5,540.5 L616.0,529.3 L616.5,519.9 L617.0,488.9 L617.3,469.6 L617.5,460.6 L618.0,435.3 L618.3,419.5 L618.5,399.4 L618.8,369.3 L619.0,342.1 L619.3,299.5 L619.5,259.7 L619.8,199.5 L620.0,199.2 L620.3,197.4 L620.5,198.6 L621.0,200.9 L621.5,208.3 L622.0,215.9 L622.5,232.9 L623.0,250.4 L623.5,269.7 L624.0,289.7 L624.5,309.8 L625.0,329.4 L625.5,355.2 L626.0,379.8 L626.5,409.2 L626.7,420.5 L627.0,434.6 L627.3,449.6 L627.5,464.7 L628.0,500.1 L628.5,526.7 L629.0,555.2 L629.5,561.3 L630.0,568.5 L630.5,574.9 L631.0,581.7 L631.5,583.7 L632.0,586.4 L632.5,587.8 L633.0,590.3 L633.3,591.3 L633.5,593.1 L634.0,593.1 L634.5,594.9 L635.0,596.1 L635.4,597.5 L635.5,596.9 L636.0,597.0 L636.5,597.9 L637.0,597.8 L637.5,598.7 L638.0,599.7 L638.5,599.0 L639.0,600.7 L639.5,600.1 L640.0,599.9 L640.5,601.0 L640.7,599.9 L641.0,600.0 L641.5,600.7 L642.0,599.3 L642.5,599.8 L643.0,598.4 L643.5,598.9 L644.0,598.8 L644.5,597.6 L645.0,597.4 L645.5,597.3 L646.0,597.0 L646.5,595.9 L647.0,595.9 L647.5,596.1 L648.0,594.4 L648.5,594.5 L649.0,592.9 L649.5,592.6 L650.0,592.0 L650.5,591.2 L651.0,590.5 L651.5,589.7 L652.0,588.6 L652.3,588.2 L652.5,587.5 L653.0,584.5 L653.5,583.3 L654.0,580.7 L654.4,578.6 L654.5,577.8 L655.0,575.3 L655.5,571.6 L656.0,567.3 L656.5,564.6 L657.0,548.5 L657.4,536.8 L657.5,517.6 L658.0,420.2 L658.5,343.7 L658.7,313.3 L659.0,346.4 L659.5,400.5 L660.0,469.2 L660.3,509.8 L660.5,514.8 L661.0,526.7 L661.5,538.6 L662.0,538.6 L662.3,539.6 L662.5,537.9 L663.0,535.6 L663.5,533.7 L664.0,532.4 L664.5,530.6 L665.0,528.0 L665.5,523.9 L666.0,518.6 L666.5,514.8 L666.7,512.9 L667.0,509.9 L667.5,504.5 L668.0,500.2 L668.5,495.3 L669.0,490.2 L669.5,485.4 L670.0,479.9 L670.5,465.9 L671.0,450.7 L671.5,436.5 L671.7,429.9 L672.0,424.1 L672.5,413.0 L673.0,402.5 L673.3,397.7 L673.5,394.8 L674.0,389.3 L674.5,385.2 L675.0,380.7 L675.5,376.6 L676.0,373.1 L676.3,370.7 L676.5,369.3 L677.0,367.2 L677.5,365.3 L678.0,368.6 L678.5,372.2 L679.0,377.2 L679.5,380.2 L680.0,382.8 L680.5,384.1 L681.0,385.3 L681.5,385.9 L682.0,387.4 L682.5,390.0 L683.0,391.4 L683.5,392.5 L683.6,392.8 L684.0,393.8 L684.5,397.2 L685.0,398.8 L685.5,400.9 L686.0,402.5 L686.5,404.2 L687.0,407.0 L687.5,408.2 L687.8,410.3 L688.0,410.4 L688.5,412.7 L689.0,415.5 L689.5,416.9 L690.0,419.6 L690.5,421.2 L691.0,422.7 L691.5,419.1 L692.0,415.2 L692.5,412.6 L693.0,409.5 L693.5,406.3 L694.0,404.5 L694.5,403.0 L695.0,399.8 L695.5,399.2 L696.0,397.6 L696.5,395.6 L696.7,395.2 L697.0,394.5 L697.5,395.5 L698.0,396.1 L698.5,395.6 L699.0,397.6 L699.5,399.9 L700.0,402.5 L700.5,404.6 L701.0,407.5 L701.5,408.9 L702.0,402.4 L702.5,395.4 L702.7,392.7 L703.0,390.0 L703.5,385.2 L704.0,379.1 L704.4,375.4 L704.5,374.8 L705.0,370.4 L705.5,364.5 L706.0,359.8 L706.5,356.9 L707.0,352.9 L707.5,353.7 L708.0,354.3 L708.5,353.1 L709.0,353.5 L709.5,352.9 L710.0,353.5 L710.5,354.3 L711.0,353.6 L711.5,353.0 L712.0,353.2 L712.5,362.1 L712.8,367.6 L713.0,366.9 L713.5,367.0 L714.0,367.5 L714.5,366.4 L715.0,367.7 L715.5,366.9 L715.8,582.7 L716.0,583.6 L716.5,583.2 L717.0,583.5 L717.5,584.2 L718.0,585.3 L718.5,584.2 L719.0,584.7 L719.5,584.2 L720.0,584.6 L720.5,583.8 L721.0,584.7 L721.5,584.8 L722.0,583.7 L722.5,583.9 L723.0,584.5 L723.5,584.9 L724.0,583.9 L724.5,585.1 L725.0,585.5 L725.5,585.6 L726.0,585.2 L726.5,586.0 L726.7,585.6 L727.0,584.7 L727.5,584.3 L728.0,584.3 L728.5,583.7 L729.0,583.5 L729.5,582.9 L730.0,581.5 L730.5,581.5 L731.0,581.8 L731.5,580.9 L732.0,580.2 L732.5,581.0 L733.0,579.9 L733.5,579.8 L734.0,580.3 L734.5,580.1 L735.0,580.1 L735.5,580.9 L736.0,581.2 L736.5,580.7 L737.0,580.5 L737.5,580.6 L738.0,580.2 L738.5,579.9 L739.0,579.3 L739.5,579.8 L740.0,578.5 L740.5,576.8 L741.0,576.3 L741.5,574.9 L742.0,572.6 L742.5,571.0 L743.0,570.1 L743.5,568.9 L744.0,566.0 L744.5,564.7 L745.0,562.4 L745.5,561.4 L746.0,559.2 L746.5,557.2 L746.7,556.9 L747.0,555.2 L747.5,552.2 L748.0,550.0 L748.5,548.3 L749.0,545.5 L749.5,542.5 L750.0,540.3 L750.5,536.2 L751.0,533.4 L751.5,530.9 L752.0,526.5 L752.5,526.0 L753.0,524.1 L753.3,522.8 L753.5,523.8 L754.0,527.1 L754.3,529.7 L754.5,532.3 L755.0,536.5 L755.5,541.8 L756.0,545.5 L756.5,551.7 L757.0,556.9 L757.5,561.9 L758.0,566.2 L758.5,568.1 L759.0,569.6 L759.5,571.4 L760.0,574.3 L760.5,575.7 L761.0,577.9 L761.5,578.9 L761.7,579.8 L762.0,581.0 L762.5,581.8 L763.0,581.1 L763.5,582.8 L764.0,583.1 L764.5,582.6 L765.0,583.9 L765.5,583.8 L766.0,584.2 L766.5,585.6 L766.7,585.4 L767.0,584.0 L767.5,584.6 L768.0,583.1 L768.5,584.1 L769.0,583.2 L769.5,582.7 L770.0,581.1 L770.5,580.7 L771.0,580.8 L771.5,580.0 L771.7,580.5 L772.0,578.9 L772.5,577.8 L773.0,576.0 L773.5,575.3 L774.0,574.7 L774.5,572.3 L775.0,571.8 L775.5,569.4 L776.0,569.2 L776.5,567.3 L776.7,566.1 L777.0,565.3 L777.5,562.5 L778.0,558.3 L778.5,555.2 L779.0,552.4 L779.5,549.8 L780.0,547.4 L780.5,542.8 L781.0,537.5 L781.5,532.6 L782.0,529.1 L782.5,524.6 L783.0,519.6 L783.5,515.2 L784.0,510.8 L784.5,504.4 L785.0,499.7 L785.5,497.2 L786.0,492.8 L786.5,489.4 L787.0,487.4 L787.3,487.1 L787.5,487.4 L788.0,490.5 L788.3,493.2 L788.5,495.8 L789.0,501.6 L789.5,507.0 L790.0,513.7 L790.5,521.4 L791.0,530.9 L791.5,539.8 L792.0,549.0 L792.5,557.3 L793.0,566.1 L793.5,572.5 L794.0,576.4 L794.5,581.7 L795.0,587.4 L795.5,589.7 L796.0,593.2 L796.5,596.8 L797.0,599.3 L797.5,602.6 L798.0,606.9 L798.5,607.3 L799.0,607.7 L799.5,608.8 L800.0,610.3 L800.5,610.9 L801.0,611.0 L801.5,611.1 L802.0,612.5 L802.5,612.0 L803.0,613.4 L803.5,612.7 L804.0,614.2 L804.5,614.2 L805.0,614.0 L805.5,614.1 L806.0,614.6 L806.5,615.0 L807.0,615.1 L807.5,615.6 L808.0,614.8 L808.5,615.5 L809.0,616.1 L809.5,615.8 L810.0,616.7 L810.5,616.2 L811.0,615.9 L811.5,617.0 L812.0,616.3 L812.5,616.7 L813.0,616.9 L813.5,617.1 L814.0,615.9 L814.5,616.8 L815.0,616.1 L815.5,615.6 L816.0,615.4 L816.5,616.3 L817.0,616.1 L817.5,615.2 L818.0,614.8 L818.5,615.5 L819.0,613.7 L819.5,613.5 L820.0,613.9 L820.5,613.8 L821.0,612.6 L821.5,612.6 L821.7,612.3 L822.0,612.2 L822.5,611.4 L823.0,610.7 L823.5,610.1 L824.0,609.8 L824.5,596.9 L824.8,590.4 L825.0,499.8 L825.2,409.4 L825.5,409.9 L826.0,409.5 L826.5,408.8 L827.0,408.2 L827.5,409.2 L828.0,409.4 L828.5,409.6 L829.0,409.3 L829.5,403.7 L830.0,397.7 L830.5,395.4 L830.7,394.3 L831.0,422.5 L831.2,440.1 L831.5,535.7 L831.7,599.4 L832.0,601.5 L832.5,605.3 L833.0,607.5 L833.5,608.5 L834.0,610.3 L834.5,611.5 L835.0,613.3 L835.5,613.6 L836.0,614.0 L836.5,615.3 L837.0,615.6 L837.5,614.9 L838.0,615.6 L838.5,616.1 L839.0,615.7 L839.5,617.0 L840.0,617.2 L840.5,616.7 L841.0,617.8 L841.5,617.5 L842.0,617.2 L842.5,618.0 L843.0,618.3 L843.5,618.5 L844.0,619.1 L844.5,619.1 L845.0,618.5 L845.5,618.6 L846.0,618.1 L846.5,618.9 L847.0,618.7 L847.5,618.7 L848.0,620.0 L848.5,618.8 L849.0,619.0 L849.5,619.9 L850.0,619.8 L850.5,619.6 L851.0,620.3 L851.5,619.4 L852.0,619.4 L852.5,620.0 L853.0,619.4 L853.5,620.2 L854.0,620.4 L854.5,620.1 L855.0,620.1 L855.5,618.7 L856.0,619.1 L856.5,619.8 L857.0,619.5 L857.5,619.0 L858.0,618.9 L858.5,618.1 L859.0,618.0 L859.5,617.5 L860.0,618.6 L860.5,613.8 L861.0,611.1 L861.5,605.7 L861.7,605.5 L862.0,603.3 L862.5,599.5 L863.0,597.6 L863.1,597.0 L863.5,600.4 L864.0,604.6 L864.2,606.3 L864.5,607.9 L865.0,609.8 L865.5,611.2 L866.0,611.0 L866.5,611.1 L867.0,612.8 L867.5,612.1 L868.0,612.9 L868.5,608.3 L869.0,603.5 L869.3,599.7 L869.5,593.5 L870.0,580.1 L870.5,530.1 L870.8,500.4 L871.0,489.7 L871.5,465.9 L871.8,450.9 L872.0,462.4 L872.5,490.4 L873.0,513.3 L873.5,518.9 L873.6,520.6 L874.0,502.4 L874.3,490.3 L874.5,480.8 L875.0,456.8 L875.1,450.9 L875.5,475.5 L875.9,500.7 L876.0,506.3 L876.5,534.5 L876.7,546.7 L877.0,557.9 L877.5,575.8 L878.0,593.0 L878.5,596.6 L879.0,601.1 L879.5,605.0 L880.0,609.5 L880.5,610.8 L881.0,613.3 L881.5,614.8 L882.0,615.9 L882.5,617.3 L883.0,616.8 L883.5,617.5 L884.0,618.8 L884.5,619.4 L885.0,619.4 L885.5,620.9 L886.0,620.7 L886.5,620.9 L887.0,620.8 L887.5,621.4 L888.0,620.8 L888.5,620.7 L889.0,620.8 L889.5,620.3 L889.7,620.0 L890.0,594.0 L890.3,569.2 L890.5,584.4 L891.0,619.7 L891.5,620.5 L892.0,620.3 L892.5,620.5 L893.0,621.0 L893.5,622.2 L894.0,621.4 L894.5,621.6 L895.0,621.9 L895.5,622.9 L896.0,622.7 L896.5,623.5 L896.7,622.3 L897.0,622.3 L897.5,623.7 L898.0,622.5 L898.5,623.6 L899.0,623.4 L899.5,622.9 L900.0,622.9 L900.5,624.0 L901.0,622.5 L901.5,624.6 L902.0,622.6 L902.5,623.0 L903.0,624.1 L903.5,623.0 L904.0,625.0 L904.5,623.8 L905.0,623.1 L905.5,623.3 L906.0,624.1 L906.5,624.9 L907.0,623.6 L907.5,623.9 L908.0,624.3 L908.5,624.5 L909.0,624.7 L909.5,623.8 L910.0,624.0 L910.5,625.1 L911.0,625.2 L911.5,624.1 L912.0,625.4 L912.5,623.7 L913.0,625.1 L913.5,625.3 L914.0,624.6 L914.5,624.9 L915.0,623.5 L915.5,625.3 L916.0,624.9 L916.5,624.7 L917.0,624.7 L917.5,623.8 L918.0,625.4 L918.5,624.7 L919.0,624.9 L919.5,623.9 L920.0,624.9 L920.5,624.1 L921.0,625.3 L921.5,623.7 L922.0,623.9 L922.5,624.1 L923.0,624.5 L923.5,625.6 L924.0,623.7 L924.5,624.9 L925.0,623.8 L925.5,624.6 L926.0,624.4 L926.5,624.1 L927.0,624.8 L927.5,624.5 L928.0,624.4 L928.5,625.2 L929.0,624.4 L929.5,626.0 L930.0,624.4 L930.5,626.1 L931.0,624.3 L931.5,626.0 L932.0,624.1 L932.5,624.1 L933.0,624.3 L933.5,625.7 L934.0,624.7 L934.5,624.9 L935.0,625.8 L935.5,624.4 L936.0,625.6 L936.5,625.4 L937.0,624.9 L937.5,626.6 L938.0,625.4 L938.5,625.3 L939.0,626.3 L939.5,626.7 L940.0,625.4 L940.5,625.2 L941.0,627.1 L941.5,626.0 L942.0,626.3 L942.5,626.1 L943.0,627.0 L943.5,626.2 L944.0,627.0 L944.5,626.5 L945.0,625.6 L945.5,626.6 L946.0,627.4 L946.5,626.7 L947.0,626.4 L947.5,625.7 L948.0,627.2 L948.5,626.6 L949.0,626.5 L949.5,626.6 L950.0,626.8 L950.5,626.6 L951.0,626.6 L951.5,627.0 L952.0,626.1 L952.5,626.6 L953.0,627.1 L953.5,628.1 L954.0,627.1 L954.5,627.5 L955.0,628.2 L955.5,628.1 L956.0,627.9 L956.5,627.8 L957.0,627.8 L957.5,626.9 L958.0,626.8 L958.5,626.7 L959.0,626.8 L959.5,628.0 L960.0,628.1 L960.5,626.8 L961.0,628.7 L961.5,627.8 L962.0,628.1 L962.5,627.0 L963.0,628.8 L963.5,627.0 L964.0,627.3 L964.5,627.8 L965.0,627.9 L965.5,627.9 L966.0,628.8 L966.5,626.8 L967.0,628.2 L967.5,627.6 L968.0,628.5 L968.5,628.1 L969.0,628.4 L969.5,628.5 L970.0,628.3 L970.5,626.9 L971.0,627.7 L971.5,628.2 L972.0,628.2 L972.5,628.5 L973.0,627.4 L973.5,626.5 L974.0,628.0 L974.5,627.0 L975.0,627.8 L975.5,626.5 L976.0,627.1 L976.5,627.7 L977.0,626.6 L977.5,627.0 L978.0,626.6 L978.5,628.2 L979.0,628.0 L979.5,627.7 L980.0,627.4 L980.5,628.4 L981.0,626.8 L981.5,627.7 L982.0,626.4 L982.5,627.5 L983.0,626.6 L983.5,626.1 L984.0,628.1 L984.5,626.7 L985.0,628.2 L985.5,627.5 L986.0,627.5 L986.5,627.5 L987.0,628.2 L987.5,626.5 L988.0,628.1 L988.5,626.7 L989.0,626.1 L989.5,627.9 L990.0,626.1 L990.5,627.0 L991.0,627.8 L991.5,626.7 L992.0,627.7 L992.5,627.6 L993.0,627.7 L993.5,626.6 L994.0,627.8 L994.5,628.2 L995.0,626.7 L995.5,628.6 L996.0,628.6 L996.5,627.3 L997.0,628.7 L997.5,628.7 L998.0,627.0 L998.5,628.4 L999.0,628.9 L999.5,628.7 L1000.0,627.2 L1000.5,627.8 L1001.0,628.1 L1001.5,627.7 L1002.0,627.7 L1002.5,627.1 L1003.0,626.9 L1003.5,627.6 L1004.0,627.8 L1004.5,628.2 L1005.0,629.0 L1005.5,627.1 L1005.7,627.7 L1006.0,628.7 L1006.5,628.4 L1007.0,626.7 L1007.5,627.8 L1008.0,626.3 L1008.5,628.0 L1009.0,626.3 L1009.5,626.9 L1010.0,626.4 L1010.5,626.2 L1011.0,625.3 L1011.5,625.3 L1012.0,624.9 L1012.5,625.3 L1012.6,624.8 L1013.0,607.2 L1013.5,584.6 L1013.6,580.4 L1014.0,548.0 L1014.4,514.1 L1014.5,520.9 L1015.0,554.9 L1015.3,575.1 L1015.5,582.5 L1016.0,601.4 L1016.5,621.2 L1016.6,624.4 L1017.0,625.6 L1017.5,626.4 L1018.0,626.5 L1018.5,626.7 L1019.0,625.8 L1019.5,625.7 L1020.0,626.3 L1020.5,627.2 L1021.0,626.2 L1021.5,626.1 L1022.0,628.1 L1022.5,626.7 L1023.0,626.0 L1023.5,627.0 L1024.0,627.4 L1024.4,626.9 L1024.5,626.1 L1025.0,626.7 L1025.5,625.4 L1026.0,626.6 L1026.5,626.8 L1027.0,624.5 L1027.5,625.4 L1028.0,625.7 L1028.5,625.1 L1029.0,623.9 L1029.5,623.6 L1030.0,624.3 L1030.5,623.2 L1031.0,624.8 L1031.5,623.9 L1032.0,623.3 L1032.5,623.3 L1033.0,621.1 L1033.5,620.8 L1034.0,619.8 L1034.4,618.1 L1034.5,612.3 L1035.0,575.2 L1035.2,559.3 L1035.5,534.8 L1035.9,501.1 L1036.0,506.0 L1036.5,523.2 L1036.7,531.0 L1037.0,541.8 L1037.5,560.6 L1038.0,588.2 L1038.2,600.8 L1038.5,604.5 L1039.0,613.7 L1039.5,614.7 L1040.0,615.4 L1040.5,615.9 L1041.0,618.0 L1041.5,619.3 L1042.0,612.1 L1042.5,603.4 L1042.8,599.4 L1043.0,595.8 L1043.5,585.7 L1043.8,577.9 L1044.0,583.7 L1044.5,594.6 L1044.8,599.1 L1045.0,604.3 L1045.5,613.1 L1045.8,618.2 L1046.0,618.8 L1046.5,620.0 L1047.0,620.2 L1047.5,622.6 L1048.0,623.0 L1048.5,623.7 L1049.0,625.8 L1049.5,626.4 L1050.0,625.7 L1050.5,625.7 L1051.0,626.8 L1051.5,626.7 L1052.0,628.2 L1052.5,627.2 L1053.0,627.3 L1053.5,627.4 L1054.0,628.1 L1054.5,628.3 L1055.0,630.5 L1055.5,630.4 L1056.0,630.3 L1056.5,631.2 L1057.0,630.6 L1057.5,630.9 L1058.0,629.8 L1058.5,630.2 L1059.0,631.0 L1059.5,631.6 L1060.0,630.5 L1060.5,631.0 L1061.0,630.7 L1061.5,630.8 L1062.0,631.5 L1062.5,632.4 L1063.0,632.6 L1063.5,631.8 L1064.0,630.7 L1064.5,631.4 L1065.0,632.3 L1065.5,633.0 L1066.0,631.3 L1066.5,632.9 L1067.0,633.1 L1067.5,631.4 L1068.0,633.2 L1068.5,632.6 L1069.0,633.2 L1069.5,632.9 L1070.0,632.9 L1070.5,633.4 L1071.0,633.2 L1071.5,632.5 L1072.0,632.5 L1072.5,633.9 L1073.0,632.4 L1073.5,632.7 L1074.0,632.2 L1074.5,632.7 L1075.0,633.3 L1075.5,632.5 L1076.0,633.1 L1076.5,633.6 L1077.0,633.1 L1077.5,634.0 L1078.0,633.5 L1078.5,633.2 L1079.0,634.1 L1079.5,633.8 L1080.0,633.7 L1080.5,633.1 L1081.0,635.0 L1081.5,633.2 L1082.0,633.8 L1082.5,634.3 L1083.0,635.1 L1083.5,633.8 L1084.0,633.4 L1084.5,634.8 L1085.0,635.4 L1085.5,634.4 L1086.0,635.6 L1086.5,634.2 L1086.6,635.4 L1087.0,633.6 L1087.5,635.3 L1088.0,635.9 L1088.5,634.8 L1089.0,636.2 L1089.5,635.8 L1090.0,635.4 L1090.5,635.0 L1091.0,636.5 L1091.5,636.0 L1092.0,636.6 L1092.5,636.0 L1093.0,635.8 L1093.5,636.1 L1094.0,637.5 L1094.5,636.6 L1095.0,637.1 L1095.5,638.0 L1096.0,637.4 L1096.5,638.0 L1097.0,638.1 L1097.5,639.1 L1098.0,638.4 L1098.5,638.3 L1099.0,640.1 L1099.5,638.5 L1100.0,639.9 L1100.5,640.1 L1101.0,639.5 L1101.5,641.0 L1102.0,641.3 L1102.5,640.7 L1103.0,640.5 L1103.5,640.1 L1104.0,642.6 L1104.5,643.2 L1105.0,641.3 L1105.5,641.6 L1106.0,642.7 L1106.5,643.3 L1107.0,643.7 L1107.5,643.6 L1108.0,643.5 L1108.5,643.4 L1109.0,641.8 L1109.5,643.4 L1110.0,644.2 L1110.5,643.1 L1111.0,643.1 L1111.5,643.7 L1112.0,644.3 L1112.5,642.8 L1113.0,645.2 L1113.5,645.2 L1114.0,643.9 L1114.5,644.2 L1115.0,644.1 L1115.5,645.0 L1116.0,646.8 L1116.5,645.2 L1117.0,647.0 L1117.5,644.9 L1118.0,645.2 L1118.5,646.1 L1119.0,645.1 L1119.5,645.1 L1120.0,646.8 L1120.5,645.9 L1121.0,647.1 L1121.5,645.8 L1122.0,646.1 L1122.5,647.9 L1123.0,647.1 L1123.5,645.8 L1124.0,646.8 L1124.5,645.8 L1125.0,645.7 L1125.5,647.3 L1126.0,645.9 L1126.5,646.3 L1127.0,645.9 L1127.5,646.0 L1128.0,647.0 L1128.5,646.2 L1129.0,646.7 L1129.5,647.1 L1130.0,646.4 L1130.5,646.2 L1131.0,646.3 L1131.5,648.7 L1132.0,646.9 L1132.5,647.3 L1133.0,648.2 L1133.5,648.3 L1134.0,648.0 L1134.5,648.7 L1135.0,647.6 L1135.5,646.5 L1136.0,647.9 L1136.5,647.4 L1137.0,648.5 L1137.5,646.8 L1138.0,648.1 L1138.5,646.1 L1139.0,647.2 L1139.5,647.1 L1140.0,646.4 L1140.5,648.5 L1141.0,648.6 L1141.5,646.8 L1142.0,648.2 L1142.5,648.8 L1143.0,647.9 L1143.5,647.2 L1144.0,648.2 L1144.5,647.3 L1145.0,647.9 L1145.5,648.1 L1146.0,647.0 L1146.5,648.2 L1147.0,647.7 L1147.5,648.0 L1148.0,647.1 L1148.5,648.4 L1148.8,646.6 L1149.0,647.6 L1149.5,647.8 L1150.0,646.2 L1150.5,648.6 L1151.0,647.8 L1151.5,646.4 L1152.0,648.7 L1152.5,648.3 L1153.0,648.9 L1153.5,648.2 L1154.0,647.6 L1154.5,648.5 L1155.0,647.2 L1155.5,647.4 L1156.0,647.2 L1156.5,647.1 L1157.0,648.9 L1157.5,647.6 L1158.0,647.6 L1158.5,647.2 L1159.0,647.1 L1159.5,646.8 L1160.0,648.9 L1160.5,648.3 L1161.0,647.5 L1161.5,647.8 L1162.0,648.6 L1162.5,647.1 L1163.0,646.9 L1163.5,647.5 L1164.0,647.4 L1164.5,648.5 L1165.0,648.7 L1165.5,648.6 L1166.0,648.0 L1166.5,647.5 L1167.0,646.5 L1167.5,648.7 L1168.0,648.5 L1168.5,647.5 L1169.0,648.1 L1169.5,648.5 L1170.0,646.7 L1170.5,647.5 L1171.0,648.7 L1171.5,646.5 L1172.0,646.2 L1172.5,648.6 L1173.0,648.4 L1173.5,645.8 L1174.0,647.4 L1174.5,647.6 L1175.0,647.8 L1175.5,647.5 L1176.0,647.3 L1176.5,647.4 L1177.0,647.5 L1177.5,645.9 L1178.0,646.1 L1178.5,646.4 L1179.0,648.3 L1179.5,646.9 L1180.0,647.3 L1180.5,648.4 L1181.0,645.7 L1181.5,646.0 L1182.0,646.2 L1182.5,648.1 L1183.0,647.5 L1183.5,645.7 L1184.0,645.5 L1184.5,645.8 L1185.0,648.0 L1185.5,646.5 L1186.0,647.8 L1186.5,647.7 L1187.0,648.0 L1187.5,646.7 L1188.0,645.9 L1188.5,646.6 L1189.0,647.7 L1189.5,647.8 L1190.0,646.2 L1190.5,646.4 L1191.0,647.3 L1191.5,646.1 L1192.0,645.6 L1192.5,645.7 L1193.0,646.2 L1193.5,645.5 L1194.0,647.0 L1194.5,646.7 L1195.0,647.5 L1195.5,646.9 L1196.0,646.0 L1196.5,645.2 L1197.0,645.3 L1197.5,647.3 L1198.0,646.5 L1198.5,644.9 L1199.0,646.0 L1199.5,646.8 L1200.0,646.9 L1200.5,647.0 L1201.0,647.2 L1201.5,645.9 L1202.0,646.4 L1202.5,644.6 L1203.0,646.3 L1203.5,645.9 L1204.0,644.9 L1204.5,645.0 L1205.0,646.4 L1205.5,644.9 L1206.0,645.2 L1206.5,645.3 L1207.0,646.5 L1207.5,644.7 L1208.0,644.4 L1208.5,644.7 L1209.0,646.2 L1209.5,644.2 L1210.0,645.7 L1210.5,645.5 L1211.0,645.1 L1211.5,645.0 L1212.0,645.5 L1212.5,644.0 L1213.0,644.7 L1213.5,644.9 L1214.0,644.1 L1214.5,645.2 L1215.0,644.4 L1215.5,643.7 L1216.0,643.8 L1216.5,644.3 L1217.0,645.3 L1217.5,645.6 L1218.0,644.6 L1218.5,643.2 L1219.0,644.9 L1219.5,645.7 L1220.0,643.1 L1220.5,643.9 L1221.0,642.9 L1221.5,644.5 L1222.0,643.0 L1222.5,645.4 L1223.0,643.8 L1223.5,644.4 L1224.0,643.5 L1224.5,643.6 L1225.0,642.7 L1225.5,645.3 L1226.0,643.5 L1226.5,643.5 L1227.0,643.9 L1227.5,643.4 L1228.0,643.8 L1228.5,643.8 L1229.0,645.9 L1229.5,645.6 L1230.0,643.9 L1230.5,645.6 L1231.0,643.2 L1231.5,644.9 L1232.0,645.8 L1232.5,643.9 L1233.0,643.8 L1233.5,645.7 L1234.0,645.2 L1234.5,646.2 L1235.0,643.7 L1235.5,643.7 L1236.0,643.4 L1236.5,644.2 L1237.0,643.4 L1237.5,645.0 L1238.0,643.4 L1238.5,644.5 L1239.0,644.7 L1239.5,643.4 L1240.0,645.6 L1240.5,647.0 L1241.0,644.1 L1241.5,644.7 L1242.0,644.0 L1242.5,647.0 L1243.0,646.5 L1243.5,647.1 L1244.0,644.4 L1244.5,644.2 L1245.0,642.8 L1245.5,643.2 L1246.0,647.5 L1246.5,645.8 L1247.0,645.2 L1247.5,643.9 L1248.0,647.8 L1248.5,643.5 L1249.0,646.5 L1249.5,646.4 L1250.0,647.1 L1250.5,647.3 L1251.0,647.0 L1251.5,646.5 L1252.0,646.1 L1252.5,647.9 L1253.0,644.8 L1253.5,645.6 L1254.0,648.1 L1254.5,648.7 L1255.0,647.8 L1255.5,644.9 L1256.0,648.8 L1256.5,649.5 L1257.0,647.2 L1257.5,646.9 L1257.7,646.8 L1258.0,648.1 L1258.5,646.2 L1259.0,646.3 L1259.5,650.6 L1260.0,648.4 L1260.5,648.7 L1261.0,647.9 L1261.5,646.8 L1262.0,647.1 L1262.5,647.3 L1263.0,650.6 L1263.5,651.1 L1264.0,652.2 L1264.5,652.4 L1265.0,648.6 L1265.5,648.0 L1266.0,651.4 L1266.5,649.6 L1267.0,652.8 L1267.5,650.8 L1268.0,650.7 L1268.5,650.7 L1269.0,650.3 L1269.5,651.7 L1270.0,650.0 L1270.5,653.9 L1271.0,653.2 L1271.5,653.6 L1272.0,654.1 L1272.5,652.9 L1273.0,654.0 L1273.5,653.3 L1274.0,652.1 L1274.5,650.0 L1275.0,652.4 L1275.5,652.6 L1276.0,653.6 L1276.5,654.3 L1277.0,653.2 L1277.5,650.7 L1278.0,650.7 L1278.5,654.5 L1279.0,654.6 L1279.5,652.4 L1280.0,650.9 L1280.5,651.1 L1281.0,651.2 L1281.5,655.1 L1282.0,652.7 L1282.5,653.0 L1283.0,654.8 L1283.5,652.1 L1284.0,653.5 L1284.5,653.8 L1285.0,653.1 L1285.5,651.7 L1286.0,653.2 L1286.5,651.7 L1287.0,652.7 L1287.5,653.2 L1288.0,652.2 L1288.5,656.1 L1289.0,654.6 L1289.5,655.8 L1290.0,655.9 L1290.5,652.8 L1291.0,652.1 L1291.5,656.2 L1292.0,653.9 L1292.5,654.8 L1293.0,655.7 L1293.5,653.2 L1294.0,654.4 L1294.5,653.0 L1295.0,652.6 L1295.5,651.7 L1296.0,652.6 L1296.5,652.6 L1297.0,655.0 L1297.5,653.8 L1298.0,655.0 L1298.5,652.6 L1299.0,652.3 L1299.5,654.0 L1300.0,652.5 L1300.5,654.7 L1301.0,652.9 L1301.5,652.4 L1302.0,654.6 L1302.5,651.9 L1303.0,654.4 L1303.5,652.8 L1304.0,651.3 L1304.5,653.8 L1305.0,653.7 L1305.5,651.3 L1306.0,653.0 L1306.5,653.0 L1307.0,654.2 L1307.5,651.7 L1308.0,653.4 L1308.5,655.5 L1309.0,650.8 L1309.5,654.2 L1310.0,652.4 L1310.5,653.0 L1311.0,652.0 L1311.5,652.9 L1312.0,653.0 L1312.5,655.1 L1313.0,654.8 L1313.5,655.1 L1314.0,655.3 L1314.5,652.5 L1315.0,654.4 L1315.5,654.9 L1315.6,651.2 L1316.0,654.2 L1316.5,653.5 L1317.0,651.8 L1317.5,654.0 L1318.0,654.4 L1318.5,654.3 L1319.0,651.3 L1319.5,655.8 L1320.0,653.1 L1320.5,655.4 L1321.0,652.4 L1321.5,654.6 L1322.0,652.1 L1322.5,654.6 L1323.0,655.1 L1323.5,654.0 L1324.0,655.7 L1324.5,654.6 L1325.0,652.7 L1325.5,652.7 L1326.0,652.8 L1326.5,654.3 L1327.0,657.1 L1327.5,654.3 L1328.0,656.7 L1328.5,655.9 L1329.0,656.2 L1329.5,656.1 L1330.0,653.9 L1330.5,657.2 L1331.0,655.0 L1331.5,657.6 L1332.0,653.2 L1332.5,653.7 L1333.0,653.9 L1333.5,656.7 L1334.0,653.8 L1334.5,655.4 L1335.0,655.8 L1335.5,655.9 L1336.0,654.9 L1336.5,657.7 L1337.0,655.7 L1337.5,654.4 L1338.0,656.3 L1338.5,654.3 L1339.0,657.0 L1339.5,654.7 L1340.0,658.2 L1340.5,654.4 L1341.0,655.6 L1341.5,655.2 L1342.0,657.0 L1342.5,656.3 L1343.0,656.6 L1343.5,656.6 L1344.0,657.5 L1344.5,655.9 L1345.0,656.2 L1345.5,656.0 L1346.0,655.5 L1346.5,657.9 L1347.0,659.4 L1347.5,659.4 L1348.0,659.7 L1348.5,655.7 L1349.0,658.6 L1349.5,655.6 L1350.0,659.2 L1350.5,659.4 L1351.0,657.6 L1351.5,660.1 L1352.0,657.7 L1352.5,658.1 L1353.0,657.1 L1353.5,659.5 L1354.0,658.3 L1354.5,658.0 L1355.0,657.7 L1355.5,659.3 L1356.0,656.1 L1356.5,658.8 L1357.0,656.2 L1357.5,656.9 L1358.0,656.1 L1358.5,658.5 L1359.0,660.5 L1359.5,657.1 L1360.0,656.6 L1360.5,658.6 L1361.0,656.2 L1361.5,657.9 L1362.0,658.4 L1362.5,656.6 L1363.0,660.5 L1363.5,658.2 L1364.0,659.2 L1364.5,656.9 L1365.0,661.1 L1365.5,657.3 L1366.0,658.7 L1366.5,657.0 L1367.0,657.3 L1367.5,657.3 L1368.0,658.5 L1368.5,657.1 L1369.0,659.0 L1369.5,659.5 L1370.0,657.7 L1370.5,660.5 L1371.0,657.2 L1371.5,659.6 L1372.0,660.7 L1372.5,659.8 L1373.0,656.9 L1373.5,657.3 L1374.0,657.1 L1374.5,657.5 L1375.0,659.5 L1375.5,661.6 L1376.0,658.7 L1376.5,660.8 L1377.0,658.3 L1377.5,661.7 L1378.0,658.9 L1378.5,658.0 L1379.0,658.0 L1379.5,657.6 L1380.0,657.5 L1380.5,661.5 L1381.0,660.6 L1381.0,662.0 L1381.5,657.7 L1382.0,658.9 L1382.5,662.0 L1383.0,657.0 L1383.5,662.0 L1384.0,662.0 L1384.5,662.0 L1385.0,657.3 L1385.5,658.4 L1386.0,662.0 L1386.5,662.0 L1387.0,662.0 L1387.5,662.0 L1388.0,662.0 L1388.5,658.1 L1389.0,662.0 L1389.5,662.0 L1390.0,662.0 L1390.5,662.0 L1391.0,662.0 L1391.5,662.0 L1392.0,662.0 L1392.5,659.2 L1393.0,657.3 L1393.5,662.0 L1394.0,662.0 L1394.5,659.1 L1395.0,659.0 L1395.5,657.0 L1396.0,658.2 L1396.5,659.9 L1397.0,657.9 L1397.5,662.0 L1398.0,662.0 L1398.5,657.8 L1399.0,662.0 L1399.5,662.0 L1400.0,656.2 L1400.5,662.0 L1401.0,662.0 L1401.5,655.0 L1402.0,662.0 L1402.5,658.4 L1403.0,659.8 L1403.5,662.0 L1404.0,662.0 L1404.5,659.4 L1405.0,659.5 L1405.5,659.6 L1406.0,662.0 L1406.5,662.0 L1407.0,657.9 L1407.5,655.6 L1408.0,659.5 L1408.5,658.5 L1409.0,662.0 L1409.5,662.0 L1410.0,657.9 L1410.5,658.6 L1411.0,662.0 L1411.5,657.9 L1412.0,659.5 L1412.5,662.0 L1413.0,662.0 L1413.5,659.2 L1414.0,657.6 L1414.5,662.0 L1415.0,659.8 L1415.5,659.3 L1416.0,662.0 L1416.5,658.2 L1417.0,659.0 L1417.5,662.0 L1418.0,662.0 L1418.5,659.4 L1419.0,659.0 L1419.5,657.4 L1420.0,659.2 L1420.5,657.4 L1421.0,662.0 L1421.5,658.2 L1422.0,662.0 L1422.5,657.2 L1423.0,658.1 L1423.5,662.0 L1424.0,662.0 L1424.5,657.1 L1425.0,657.5 L1425.5,657.4 L1426.0,654.6 L1426.5,657.3 L1427.0,659.3 L1427.5,657.7 L1428.0,662.0 L1428.5,658.7 L1429.0,662.0 L1429.5,662.0 L1430.0,657.7 L1430.5,658.2 L1431.0,659.0 L1431.5,659.1 L1432.0,662.0 L1432.5,662.0 L1433.0,657.0 L1433.5,656.7 L1434.0,662.0 L1434.5,655.1 L1435.0,662.0 L1435.5,658.2 L1436.0,658.2 L1436.5,658.3 L1437.0,662.0 L1437.5,658.9 L1438.0,662.0 L1438.5,659.1 L1439.0,659.1 L1439.5,662.0 L1440.0,662.0 L1440.5,658.7 L1441.0,659.0 L1441.5,662.0 L1442.0,662.0 L1442.5,657.4 L1443.0,658.5 L1443.5,662.0 L1444.0,658.3 L1444.5,657.9 L1445.0,657.2 L1445.5,658.9 L1446.0,662.0 L1446.5,657.1 L1447.0,656.6 L1447.5,662.0 L1448.0,656.8 L1448.5,662.0 L1449.0,658.3 L1449.5,658.9 L1450.0,658.1 L1450.5,659.0 L1451.0,656.7 L1451.5,657.5 L1452.0,655.7 L1452.5,656.8 L1453.0,656.5 L1453.5,658.4 L1454.0,656.8 L1454.5,656.7 L1455.0,650.0 L1455.5,662.0 L1456.0,662.0 L1456.5,658.4 L1457.0,657.5 L1457.5,656.8 L1458.0,656.9 L1458.5,659.1 L1459.0,658.6 L1459.5,662.0 L1460.0,662.0 L1460.5,662.0 L1461.0,658.9 L1461.5,657.5 L1462.0,657.1 L1462.5,657.2 L1463.0,662.0 L1463.5,658.3 L1464.0,662.0 L1464.5,662.0 L1465.0,657.0 L1465.5,657.8 L1466.0,662.0 L1466.5,657.0 L1467.0,662.0 L1467.5,659.4 L1468.0,662.0 L1468.5,662.0 L1469.0,658.1 L1469.5,659.2 L1470.0,662.0 L1470.5,654.3 L1471.0,662.0 L1471.5,654.6 L1472.0,655.6 L1472.5,656.3 L1473.0,657.9 L1473.5,662.0 L1474.0,662.0 L1474.5,658.8 L1475.0,662.0 L1475.5,656.9 L1476.0,657.1 L1476.5,656.8 L1477.0,662.0 L1477.5,657.3 L1478.0,662.0 L1478.5,662.0 L1479.0,650.2 L1479.5,658.8 L1480.0,662.0 L1480.5,657.8 L1481.0,657.9 L1481.5,651.8 L1482.0,662.0 L1482.5,656.5 L1483.0,658.8 L1483.5,662.0 L1484.0,658.4 L1484.5,657.7 L1485.0,655.2 L1485.5,657.0 L1486.0,662.0 L1486.5,658.4 L1487.0,646.3 L1487.5,656.4 L1488.0,657.0 L1488.5,656.5 L1489.0,662.0 L1489.5,662.0 L1490.0,657.7 L1490.5,662.0 L1491.0,662.0 L1491.5,662.0 L1492.0,662.0 L1492.5,656.8 L1493.0,662.0 L1493.5,657.0 L1494.0,659.2 L1494.5,662.0 L1495.0,662.0 L1495.5,658.1 L1496.0,646.3 L1496.5,654.4 L1497.0,662.0 L1497.5,656.4 L1498.0,656.9 L1498.5,656.1 L1499.0,662.0 L1499.5,650.5 L1500.0,662.0 L1500.5,655.9 L1501.0,656.7 L1501.5,658.8 L1502.0,662.0 L1502.5,655.7 L1503.0,657.4 L1503.5,662.0 L1504.0,656.7 L1504.5,662.0 L1505.0,658.8 L1505.5,662.0 L1506.0,662.0 L1506.5,658.8 L1507.0,662.0 L1507.5,662.0 L1508.0,658.2 L1508.5,656.4 L1509.0,652.2 L1509.5,654.3 L1510.0,657.5 L1510.5,648.2 L1511.0,662.0 L1511.5,658.0 L1512.0,662.0 L1512.5,658.8 L1513.0,662.0 L1513.5,657.3 L1514.0,647.7 L1514.5,662.0 L1515.0,652.9 L1515.5,662.0 L1516.0,642.2 L1516.5,662.0 L1517.0,662.0 L1517.5,657.8 L1518.0,649.9 L1518.5,654.5 L1519.0,656.3 L1519.5,662.0 L1520.0,657.3 L1520.5,662.0 L1521.0,658.3 L1521.5,654.0 L1522.0,658.3 L1522.5,658.8 L1523.0,658.9 L1523.5,649.7 L1524.0,651.4 L1524.5,658.4 L1525.0,657.5 L1525.5,662.0 L1526.0,662.0 L1526.5,658.0 L1527.0,658.8 L1527.5,658.8 L1528.0,649.6 L1528.5,662.0 L1529.0,656.2 L1529.5,656.5 L1530.0,657.7 L1530.5,662.0 L1531.0,650.3 L1531.5,656.9 L1532.0,650.2 L1532.5,638.9 L1533.0,657.2 L1533.5,654.2 L1534.0,648.9 L1534.5,662.0 L1535.0,662.0 L1535.5,662.0 L1536.0,662.0 L1536.5,656.8 L1537.0,658.1 L1537.5,654.3 L1538.0,662.0 L1538.5,656.5 L1539.0,662.0 L1539.5,638.2 L1540.0,655.2 L1540.5,653.4 L1541.0,662.0 L1541.5,662.5 L1542.0,662.5 L1542.5,662.6 L1543.0,662.4 L1543.5,662.5 L1544.0,661.6 L1544.5,662.4 L1545.0,662.4 L1545.5,661.9 L1546.0,661.7 L1546.5,662.4 L1547.0,662.0 L1547.5,662.5 L1548.0,662.6 L1548.5,661.9 L1549.0,661.7 L1549.5,662.6 L1550.0,662.6 L1550.5,661.0 L1551.0,661.7 L1551.5,662.3 L1552.0,662.1 L1552.5,662.2 L1553.0,661.6 L1553.5,661.8 L1554.0,662.0 L1554.5,661.8 L1555.0,662.4 L1555.5,661.5 L1556.0,662.3 L1556.5,662.2 L1557.0,662.4 L1557.5,662.2 L1558.0,662.1 L1558.5,661.4 L1559.0,662.2 L1559.5,662.4 L1560.0,661.4 L1560.5,662.3 L1561.0,661.8 L1561.5,662.7 L1562.0,662.2 L1562.5,661.3 L1563.0,662.8 L1563.5,662.1 L1564.0,662.2 L1564.5,662.4 L1565.0,662.0 L1565.5,662.8 L1566.0,662.4 L1566.5,661.4 L1567.0,662.4 L1567.5,661.6 L1568.0,662.7 L1568.5,661.7 L1569.0,662.7 L1569.5,662.5 L1570.0,662.3 L1570.5,661.6 L1571.0,661.4 L1571.5,662.7 L1572.0,661.5 L1572.5,661.8 L1573.0,662.6 L1573.5,662.5 L1574.0,660.7 L1574.5,662.5 L1575.0,662.0 L1575.5,662.0 L1576.0,661.2 L1576.5,662.3 L1577.0,662.6 L1577.5,662.7 L1578.0,662.0 L1578.5,661.4 L1579.0,662.2 L1579.5,662.0 L1580.0,662.6 L1580.5,662.6 L1581.0,662.4 L1581.5,661.1 L1582.0,662.1 L1582.5,662.0 L1583.0,662.1 L1583.5,660.0 L1584.0,661.7 L1584.5,662.6 L1585.0,662.4 L1585.5,662.5 L1586.0,662.5 L1586.5,661.9 L1587.0,662.7 L1587.5,662.4 L1588,665 L290.5,665 Z" fill="url(#sg)" stroke="none" shape-rendering="crispEdges"/>
<path d="M290.5,662.7 L291.0,662.1 L291.5,661.4 L292.0,662.1 L292.5,662.3 L293.0,662.3 L293.5,662.6 L294.0,661.7 L294.5,662.4 L295.0,662.7 L295.5,662.3 L296.0,662.6 L296.5,662.3 L297.0,661.8 L297.5,662.3 L298.0,661.5 L298.5,660.5 L299.0,662.5 L299.5,662.6 L300.0,662.3 L300.5,661.6 L301.0,662.4 L301.5,662.2 L302.0,662.1 L302.5,661.8 L303.0,662.6 L303.5,662.3 L304.0,662.7 L304.5,662.2 L305.0,662.5 L305.5,661.6 L306.0,662.5 L306.5,662.7 L307.0,662.8 L307.5,662.7 L308.0,662.8 L308.5,662.4 L309.0,662.7 L309.5,662.4 L310.0,662.8 L310.5,660.1 L311.0,662.3 L311.5,662.0 L312.0,662.2 L312.5,661.5 L313.0,661.7 L313.5,662.7 L314.0,662.1 L314.5,662.5 L315.0,662.2 L315.5,661.8 L316.0,662.7 L316.5,662.3 L317.0,662.4 L317.5,661.4 L318.0,661.6 L318.5,662.4 L319.0,662.6 L319.5,661.0 L320.0,661.1 L320.5,662.7 L321.0,662.6 L321.5,662.7 L322.0,661.3 L322.5,662.6 L323.0,662.7 L323.5,659.7 L324.0,662.7 L324.5,661.7 L325.0,661.8 L325.5,662.3 L326.0,662.7 L326.5,662.2 L327.0,661.5 L327.5,661.6 L328.0,662.3 L328.5,662.5 L329.0,662.9 L329.5,662.7 L330.0,662.5 L330.5,662.3 L331.0,659.9 L331.5,660.5 L332.0,662.7 L332.5,662.0 L333.0,662.4 L333.5,662.5 L334.0,662.4 L334.5,662.2 L335.0,662.7 L335.5,662.4 L336.0,662.5 L336.5,660.9 L337.0,662.3 L337.5,662.2 L338.0,662.5 L338.5,660.5 L339.0,661.9 L339.5,660.5 L340.0,662.6 L340.5,662.5 L341.0,662.7 L341.5,662.4 L342.0,662.4 L342.5,662.7 L343.0,661.9 L343.5,662.4 L344.0,662.2 L344.5,661.7 L345.0,661.8 L345.5,661.0 L346.0,662.8 L346.5,662.2 L347.0,662.0 L347.5,661.6 L348.0,660.6 L348.5,662.6 L349.0,662.3 L349.5,662.1 L350.0,661.6 L350.5,662.1 L351.0,662.8 L351.5,661.3 L352.0,662.6 L352.5,662.7 L353.0,662.7 L353.5,662.3 L354.0,662.5 L354.5,662.7 L355.0,662.1 L355.5,660.5 L356.0,661.8 L356.5,661.5 L357.0,662.6 L357.5,662.6 L358.0,662.1 L358.5,662.7 L359.0,662.7 L359.5,662.3 L360.0,662.0 L360.5,661.6 L361.0,661.9 L361.5,662.7 L362.0,662.9 L362.5,662.1 L363.0,662.3 L363.5,662.8 L364.0,661.7 L364.5,662.2 L365.0,661.7 L365.5,662.3 L366.0,662.1 L366.5,662.1 L367.0,662.5 L367.5,661.2 L368.0,662.8 L368.5,662.1 L369.0,661.8 L369.5,660.6 L370.0,662.9 L370.5,662.2 L371.0,660.4 L371.5,662.7 L372.0,662.2 L372.5,661.1 L373.0,662.5 L373.5,662.3 L374.0,662.4 L374.5,662.7 L375.0,662.6 L375.5,662.3 L376.0,661.6 L376.5,662.6 L377.0,662.5 L377.5,661.8 L378.0,661.4 L378.5,661.0 L379.0,662.7 L379.5,662.7 L380.0,662.8 L380.5,662.5 L381.0,662.3 L381.5,662.0 L382.0,662.1 L382.5,661.9 L383.0,662.8 L383.5,662.7 L384.0,662.4 L384.5,662.4 L385.0,662.2 L385.5,661.9 L386.0,662.5 L386.5,662.9 L387.0,660.4 L387.5,662.3 L388.0,661.2 L388.5,662.4 L389.0,662.9 L389.5,662.1 L390.0,662.9 L390.5,662.2 L391.0,661.7 L391.5,662.7 L392.0,661.2 L392.5,662.7 L393.0,662.7 L393.5,662.8 L394.0,662.1 L394.5,662.5 L395.0,661.6 L395.5,662.3 L396.0,662.5 L396.5,662.6 L397.0,660.6 L397.5,662.7 L398.0,661.7 L398.5,661.7 L399.0,662.6 L399.5,662.2 L400.0,662.0 L400.5,662.1 L401.0,662.5 L401.5,662.2 L402.0,662.8 L402.5,662.6 L403.0,662.2 L403.5,662.7 L404.0,661.3 L404.5,662.7 L405.0,662.6 L405.5,662.0 L406.0,662.7 L406.5,662.7 L407.0,662.6 L407.5,662.1 L408.0,662.5 L408.5,661.4 L409.0,662.6 L409.5,661.6 L410.0,662.4 L410.5,661.6 L411.0,660.5 L411.5,662.8 L412.0,661.6 L412.5,661.2 L413.0,661.5 L413.5,662.9 L414.0,662.4 L414.5,661.6 L415.0,662.2 L415.5,661.5 L416.0,662.1 L416.5,661.3 L417.0,662.7 L417.5,659.8 L418.0,662.8 L418.5,661.6 L419.0,662.9 L419.5,662.4 L420.0,662.9 L420.5,662.6 L421.0,662.0 L421.5,662.3 L422.0,662.6 L422.5,660.9 L423.0,661.6 L423.5,662.5 L424.0,662.7 L424.5,662.3 L425.0,662.8 L425.5,661.7 L426.0,662.3 L426.5,660.1 L427.0,662.7 L427.5,662.4 L428.0,662.4 L428.5,661.8 L429.0,662.3 L429.5,662.0 L430.0,660.1 L430.5,662.0 L431.0,662.1 L431.5,662.5 L432.0,661.6 L432.5,662.3 L433.0,662.0 L433.5,662.9 L434.0,661.2 L434.5,662.3 L435.0,661.9 L435.5,661.9 L436.0,662.2 L436.5,661.3 L437.0,662.4 L437.5,662.6 L438.0,661.8 L438.5,662.0 L439.0,662.7 L439.5,662.9 L440.0,662.7 L440.5,662.2 L441.0,662.0 L441.5,661.4 L442.0,662.1 L442.5,662.3 L443.0,662.5 L443.5,662.6 L444.0,662.0 L444.5,662.4 L445.0,662.0 L445.5,662.4 L446.0,661.2 L446.5,661.6 L447.0,662.7 L447.5,662.8 L448.0,662.6 L448.5,659.8 L449.0,662.7 L449.5,662.0 L450.0,662.2 L450.5,661.6 L451.0,662.7 L451.5,662.9 L452.0,662.6 L452.5,662.8 L453.0,661.8 L453.5,661.6 L454.0,662.7 L454.5,662.8 L455.0,662.3 L455.5,662.7 L456.0,662.3 L456.5,662.1 L457.0,662.5 L457.5,662.7 L458.0,661.6 L458.5,662.0 L459.0,662.4 L459.5,662.6 L460.0,662.4 L460.5,662.5 L461.0,662.8 L461.5,662.8 L462.0,662.1 L462.5,662.2 L463.0,662.4 L463.5,662.6 L464.0,662.6 L464.5,661.7 L465.0,662.7 L465.5,662.1 L466.0,662.6 L466.5,662.6 L467.0,661.2 L467.5,661.8 L468.0,662.0 L468.5,661.7 L469.0,661.6 L469.5,659.9 L470.0,662.4 L470.5,661.9 L471.0,662.7 L471.5,662.8 L472.0,662.6 L472.5,662.7 L473.0,661.8 L473.5,661.6 L474.0,662.1 L474.5,661.7 L475.0,662.5 L475.5,662.8 L476.0,661.5 L476.5,662.7 L477.0,662.4 L477.5,661.9 L478.0,662.1 L478.5,661.0 L479.0,662.7 L479.5,662.4 L480.0,660.4 L480.5,662.4 L481.0,662.3 L481.5,662.2 L482.0,662.6 L482.5,662.5 L483.0,662.8 L483.5,662.8 L484.0,660.7 L484.5,662.7 L485.0,661.5 L485.5,661.0 L486.0,661.7 L486.5,650.3 L487.0,640.7 L487.5,644.3 L488.0,659.8 L488.5,641.8 L489.0,659.5 L489.5,624.8 L490.0,660.4 L490.5,649.0 L491.0,660.0 L491.5,637.5 L492.0,661.2 L492.5,656.5 L493.0,660.5 L493.5,641.2 L494.0,660.5 L494.5,651.1 L495.0,659.6 L495.5,644.2 L496.0,659.5 L496.5,649.4 L497.0,657.6 L497.5,643.3 L498.0,660.3 L498.5,638.0 L499.0,659.2 L499.5,650.5 L500.0,661.5 L500.5,645.1 L501.0,659.8 L501.5,650.3 L502.0,659.9 L502.5,654.0 L503.0,660.0 L503.5,644.6 L504.0,645.2 L504.5,641.0 L505.0,659.3 L505.5,637.3 L505.6,638.5 L506.0,641.1 L506.5,659.3 L507.0,649.6 L507.5,661.2 L508.0,651.0 L508.5,648.8 L509.0,649.2 L509.5,649.6 L510.0,649.1 L510.5,661.3 L511.0,652.1 L511.5,660.2 L512.0,657.4 L512.5,660.1 L513.0,653.4 L513.5,653.1 L514.0,653.1 L514.5,653.1 L515.0,651.6 L515.5,660.8 L516.0,653.2 L516.5,653.6 L517.0,656.5 L517.5,659.8 L518.0,656.7 L518.5,661.4 L519.0,655.7 L519.5,655.1 L520.0,653.9 L520.5,661.5 L521.0,654.6 L521.5,659.8 L522.0,655.4 L522.5,660.3 L523.0,655.7 L523.5,655.9 L524.0,655.7 L524.5,655.7 L525.0,653.6 L525.5,659.6 L526.0,654.0 L526.5,652.6 L527.0,651.6 L527.5,661.0 L528.0,651.9 L528.5,660.7 L529.0,653.7 L529.5,654.7 L530.0,658.5 L530.5,659.5 L531.0,655.7 L531.5,655.6 L532.0,657.7 L532.5,660.8 L533.0,655.4 L533.5,659.5 L534.0,654.7 L534.5,661.0 L535.0,655.7 L535.5,660.9 L536.0,656.3 L536.5,659.1 L537.0,655.9 L537.5,661.5 L538.0,654.8 L538.5,659.8 L539.0,656.6 L539.5,660.4 L540.0,658.0 L540.5,659.9 L541.0,655.6 L541.5,656.5 L542.0,653.3 L542.5,661.2 L543.0,652.8 L543.5,652.9 L544.0,652.6 L544.5,651.9 L545.0,650.4 L545.5,650.3 L546.0,649.7 L546.5,648.9 L547.0,646.8 L547.5,644.2 L548.0,642.9 L548.5,638.7 L549.0,633.8 L549.5,629.2 L550.0,615.2 L550.5,599.6 L551.0,586.0 L551.5,575.0 L552.0,586.9 L552.5,598.1 L553.0,614.2 L553.5,630.3 L554.0,634.9 L554.5,637.9 L555.0,642.2 L555.5,642.8 L556.0,644.2 L556.5,646.2 L557.0,647.0 L557.5,646.8 L558.0,647.7 L558.5,648.7 L559.0,648.1 L559.5,649.5 L560.0,649.4 L560.5,648.8 L561.0,648.8 L561.5,646.6 L562.0,646.4 L562.5,647.3 L563.0,646.8 L563.5,644.9 L564.0,646.0 L564.5,644.3 L565.0,644.3 L565.5,644.0 L566.0,644.1 L566.5,644.0 L567.0,644.8 L567.5,643.6 L568.0,642.7 L568.5,642.9 L569.0,642.2 L569.5,642.1 L570.0,642.7 L570.5,642.7 L571.0,642.0 L571.5,642.1 L572.0,641.4 L572.5,642.3 L573.0,641.4 L573.5,640.5 L574.0,640.8 L574.5,639.8 L575.0,639.6 L575.5,638.8 L576.0,639.8 L576.5,638.4 L577.0,639.3 L577.5,637.8 L578.0,636.9 L578.5,637.6 L578.8,637.5 L579.0,637.5 L579.5,635.6 L580.0,636.4 L580.5,636.1 L581.0,634.5 L581.5,634.4 L582.0,634.2 L582.5,633.2 L583.0,634.1 L583.5,633.4 L584.0,633.4 L584.5,632.2 L585.0,632.0 L585.5,630.4 L586.0,629.6 L586.5,629.5 L587.0,628.9 L587.5,626.3 L588.0,625.1 L588.5,624.3 L589.0,624.2 L589.5,624.1 L590.0,622.1 L590.5,621.8 L591.0,621.0 L591.5,621.2 L592.0,619.3 L592.5,618.5 L593.0,619.0 L593.5,618.2 L594.0,617.6 L594.5,618.1 L595.0,617.5 L595.5,615.9 L596.0,616.4 L596.5,616.5 L597.0,616.2 L597.5,614.0 L598.0,615.3 L598.5,613.5 L599.0,614.5 L599.5,614.1 L600.0,614.3 L600.5,613.5 L601.0,612.3 L601.5,614.3 L602.0,614.6 L602.5,616.5 L603.0,617.7 L603.5,620.5 L603.8,622.3 L604.0,619.4 L604.5,616.2 L605.0,612.3 L605.5,606.9 L606.0,601.6 L606.5,595.4 L607.0,589.4 L607.5,579.6 L608.0,569.8 L608.5,559.3 L609.0,515.3 L609.5,469.3 L610.0,430.2 L610.5,392.5 L610.6,384.5 L611.0,418.0 L611.5,461.1 L611.6,470.5 L612.0,501.3 L612.5,539.6 L613.0,550.2 L613.5,561.1 L614.0,570.0 L614.3,577.8 L614.5,570.9 L615.0,554.9 L615.5,540.5 L616.0,529.3 L616.5,519.9 L617.0,488.9 L617.3,469.6 L617.5,460.6 L618.0,435.3 L618.3,419.5 L618.5,399.4 L618.8,369.3 L619.0,342.1 L619.3,299.5 L619.5,259.7 L619.8,199.5 L620.0,199.2 L620.3,197.4 L620.5,198.6 L621.0,200.9 L621.5,208.3 L622.0,215.9 L622.5,232.9 L623.0,250.4 L623.5,269.7 L624.0,289.7 L624.5,309.8 L625.0,329.4 L625.5,355.2 L626.0,379.8 L626.5,409.2 L626.7,420.5 L627.0,434.6 L627.3,449.6 L627.5,464.7 L628.0,500.1 L628.5,526.7 L629.0,555.2 L629.5,561.3 L630.0,568.5 L630.5,574.9 L631.0,581.7 L631.5,583.7 L632.0,586.4 L632.5,587.8 L633.0,590.3 L633.3,591.3 L633.5,593.1 L634.0,593.1 L634.5,594.9 L635.0,596.1 L635.4,597.5 L635.5,596.9 L636.0,597.0 L636.5,597.9 L637.0,597.8 L637.5,598.7 L638.0,599.7 L638.5,599.0 L639.0,600.7 L639.5,600.1 L640.0,599.9 L640.5,601.0 L640.7,599.9 L641.0,600.0 L641.5,600.7 L642.0,599.3 L642.5,599.8 L643.0,598.4 L643.5,598.9 L644.0,598.8 L644.5,597.6 L645.0,597.4 L645.5,597.3 L646.0,597.0 L646.5,595.9 L647.0,595.9 L647.5,596.1 L648.0,594.4 L648.5,594.5 L649.0,592.9 L649.5,592.6 L650.0,592.0 L650.5,591.2 L651.0,590.5 L651.5,589.7 L652.0,588.6 L652.3,588.2 L652.5,587.5 L653.0,584.5 L653.5,583.3 L654.0,580.7 L654.4,578.6 L654.5,577.8 L655.0,575.3 L655.5,571.6 L656.0,567.3 L656.5,564.6 L657.0,548.5 L657.4,536.8 L657.5,517.6 L658.0,420.2 L658.5,343.7 L658.7,313.3 L659.0,346.4 L659.5,400.5 L660.0,469.2 L660.3,509.8 L660.5,514.8 L661.0,526.7 L661.5,538.6 L662.0,538.6 L662.3,539.6 L662.5,537.9 L663.0,535.6 L663.5,533.7 L664.0,532.4 L664.5,530.6 L665.0,528.0 L665.5,523.9 L666.0,518.6 L666.5,514.8 L666.7,512.9 L667.0,509.9 L667.5,504.5 L668.0,500.2 L668.5,495.3 L669.0,490.2 L669.5,485.4 L670.0,479.9 L670.5,465.9 L671.0,450.7 L671.5,436.5 L671.7,429.9 L672.0,424.1 L672.5,413.0 L673.0,402.5 L673.3,397.7 L673.5,394.8 L674.0,389.3 L674.5,385.2 L675.0,380.7 L675.5,376.6 L676.0,373.1 L676.3,370.7 L676.5,369.3 L677.0,367.2 L677.5,365.3 L678.0,368.6 L678.5,372.2 L679.0,377.2 L679.5,380.2 L680.0,382.8 L680.5,384.1 L681.0,385.3 L681.5,385.9 L682.0,387.4 L682.5,390.0 L683.0,391.4 L683.5,392.5 L683.6,392.8 L684.0,393.8 L684.5,397.2 L685.0,398.8 L685.5,400.9 L686.0,402.5 L686.5,404.2 L687.0,407.0 L687.5,408.2 L687.8,410.3 L688.0,410.4 L688.5,412.7 L689.0,415.5 L689.5,416.9 L690.0,419.6 L690.5,421.2 L691.0,422.7 L691.5,419.1 L692.0,415.2 L692.5,412.6 L693.0,409.5 L693.5,406.3 L694.0,404.5 L694.5,403.0 L695.0,399.8 L695.5,399.2 L696.0,397.6 L696.5,395.6 L696.7,395.2 L697.0,394.5 L697.5,395.5 L698.0,396.1 L698.5,395.6 L699.0,397.6 L699.5,399.9 L700.0,402.5 L700.5,404.6 L701.0,407.5 L701.5,408.9 L702.0,402.4 L702.5,395.4 L702.7,392.7 L703.0,390.0 L703.5,385.2 L704.0,379.1 L704.4,375.4 L704.5,374.8 L705.0,370.4 L705.5,364.5 L706.0,359.8 L706.5,356.9 L707.0,352.9 L707.5,353.7 L708.0,354.3 L708.5,353.1 L709.0,353.5 L709.5,352.9 L710.0,353.5 L710.5,354.3 L711.0,353.6 L711.5,353.0 L712.0,353.2 L712.5,362.1 L712.8,367.6 L713.0,366.9 L713.5,367.0 L714.0,367.5 L714.5,366.4 L715.0,367.7 L715.5,366.9 L715.8,582.7 L716.0,583.6 L716.5,583.2 L717.0,583.5 L717.5,584.2 L718.0,585.3 L718.5,584.2 L719.0,584.7 L719.5,584.2 L720.0,584.6 L720.5,583.8 L721.0,584.7 L721.5,584.8 L722.0,583.7 L722.5,583.9 L723.0,584.5 L723.5,584.9 L724.0,583.9 L724.5,585.1 L725.0,585.5 L725.5,585.6 L726.0,585.2 L726.5,586.0 L726.7,585.6 L727.0,584.7 L727.5,584.3 L728.0,584.3 L728.5,583.7 L729.0,583.5 L729.5,582.9 L730.0,581.5 L730.5,581.5 L731.0,581.8 L731.5,580.9 L732.0,580.2 L732.5,581.0 L733.0,579.9 L733.5,579.8 L734.0,580.3 L734.5,580.1 L735.0,580.1 L735.5,580.9 L736.0,581.2 L736.5,580.7 L737.0,580.5 L737.5,580.6 L738.0,580.2 L738.5,579.9 L739.0,579.3 L739.5,579.8 L740.0,578.5 L740.5,576.8 L741.0,576.3 L741.5,574.9 L742.0,572.6 L742.5,571.0 L743.0,570.1 L743.5,568.9 L744.0,566.0 L744.5,564.7 L745.0,562.4 L745.5,561.4 L746.0,559.2 L746.5,557.2 L746.7,556.9 L747.0,555.2 L747.5,552.2 L748.0,550.0 L748.5,548.3 L749.0,545.5 L749.5,542.5 L750.0,540.3 L750.5,536.2 L751.0,533.4 L751.5,530.9 L752.0,526.5 L752.5,526.0 L753.0,524.1 L753.3,522.8 L753.5,523.8 L754.0,527.1 L754.3,529.7 L754.5,532.3 L755.0,536.5 L755.5,541.8 L756.0,545.5 L756.5,551.7 L757.0,556.9 L757.5,561.9 L758.0,566.2 L758.5,568.1 L759.0,569.6 L759.5,571.4 L760.0,574.3 L760.5,575.7 L761.0,577.9 L761.5,578.9 L761.7,579.8 L762.0,581.0 L762.5,581.8 L763.0,581.1 L763.5,582.8 L764.0,583.1 L764.5,582.6 L765.0,583.9 L765.5,583.8 L766.0,584.2 L766.5,585.6 L766.7,585.4 L767.0,584.0 L767.5,584.6 L768.0,583.1 L768.5,584.1 L769.0,583.2 L769.5,582.7 L770.0,581.1 L770.5,580.7 L771.0,580.8 L771.5,580.0 L771.7,580.5 L772.0,578.9 L772.5,577.8 L773.0,576.0 L773.5,575.3 L774.0,574.7 L774.5,572.3 L775.0,571.8 L775.5,569.4 L776.0,569.2 L776.5,567.3 L776.7,566.1 L777.0,565.3 L777.5,562.5 L778.0,558.3 L778.5,555.2 L779.0,552.4 L779.5,549.8 L780.0,547.4 L780.5,542.8 L781.0,537.5 L781.5,532.6 L782.0,529.1 L782.5,524.6 L783.0,519.6 L783.5,515.2 L784.0,510.8 L784.5,504.4 L785.0,499.7 L785.5,497.2 L786.0,492.8 L786.5,489.4 L787.0,487.4 L787.3,487.1 L787.5,487.4 L788.0,490.5 L788.3,493.2 L788.5,495.8 L789.0,501.6 L789.5,507.0 L790.0,513.7 L790.5,521.4 L791.0,530.9 L791.5,539.8 L792.0,549.0 L792.5,557.3 L793.0,566.1 L793.5,572.5 L794.0,576.4 L794.5,581.7 L795.0,587.4 L795.5,589.7 L796.0,593.2 L796.5,596.8 L797.0,599.3 L797.5,602.6 L798.0,606.9 L798.5,607.3 L799.0,607.7 L799.5,608.8 L800.0,610.3 L800.5,610.9 L801.0,611.0 L801.5,611.1 L802.0,612.5 L802.5,612.0 L803.0,613.4 L803.5,612.7 L804.0,614.2 L804.5,614.2 L805.0,614.0 L805.5,614.1 L806.0,614.6 L806.5,615.0 L807.0,615.1 L807.5,615.6 L808.0,614.8 L808.5,615.5 L809.0,616.1 L809.5,615.8 L810.0,616.7 L810.5,616.2 L811.0,615.9 L811.5,617.0 L812.0,616.3 L812.5,616.7 L813.0,616.9 L813.5,617.1 L814.0,615.9 L814.5,616.8 L815.0,616.1 L815.5,615.6 L816.0,615.4 L816.5,616.3 L817.0,616.1 L817.5,615.2 L818.0,614.8 L818.5,615.5 L819.0,613.7 L819.5,613.5 L820.0,613.9 L820.5,613.8 L821.0,612.6 L821.5,612.6 L821.7,612.3 L822.0,612.2 L822.5,611.4 L823.0,610.7 L823.5,610.1 L824.0,609.8 L824.5,596.9 L824.8,590.4 L825.0,499.8 L825.2,409.4 L825.5,409.9 L826.0,409.5 L826.5,408.8 L827.0,408.2 L827.5,409.2 L828.0,409.4 L828.5,409.6 L829.0,409.3 L829.5,403.7 L830.0,397.7 L830.5,395.4 L830.7,394.3 L831.0,422.5 L831.2,440.1 L831.5,535.7 L831.7,599.4 L832.0,601.5 L832.5,605.3 L833.0,607.5 L833.5,608.5 L834.0,610.3 L834.5,611.5 L835.0,613.3 L835.5,613.6 L836.0,614.0 L836.5,615.3 L837.0,615.6 L837.5,614.9 L838.0,615.6 L838.5,616.1 L839.0,615.7 L839.5,617.0 L840.0,617.2 L840.5,616.7 L841.0,617.8 L841.5,617.5 L842.0,617.2 L842.5,618.0 L843.0,618.3 L843.5,618.5 L844.0,619.1 L844.5,619.1 L845.0,618.5 L845.5,618.6 L846.0,618.1 L846.5,618.9 L847.0,618.7 L847.5,618.7 L848.0,620.0 L848.5,618.8 L849.0,619.0 L849.5,619.9 L850.0,619.8 L850.5,619.6 L851.0,620.3 L851.5,619.4 L852.0,619.4 L852.5,620.0 L853.0,619.4 L853.5,620.2 L854.0,620.4 L854.5,620.1 L855.0,620.1 L855.5,618.7 L856.0,619.1 L856.5,619.8 L857.0,619.5 L857.5,619.0 L858.0,618.9 L858.5,618.1 L859.0,618.0 L859.5,617.5 L860.0,618.6 L860.5,613.8 L861.0,611.1 L861.5,605.7 L861.7,605.5 L862.0,603.3 L862.5,599.5 L863.0,597.6 L863.1,597.0 L863.5,600.4 L864.0,604.6 L864.2,606.3 L864.5,607.9 L865.0,609.8 L865.5,611.2 L866.0,611.0 L866.5,611.1 L867.0,612.8 L867.5,612.1 L868.0,612.9 L868.5,608.3 L869.0,603.5 L869.3,599.7 L869.5,593.5 L870.0,580.1 L870.5,530.1 L870.8,500.4 L871.0,489.7 L871.5,465.9 L871.8,450.9 L872.0,462.4 L872.5,490.4 L873.0,513.3 L873.5,518.9 L873.6,520.6 L874.0,502.4 L874.3,490.3 L874.5,480.8 L875.0,456.8 L875.1,450.9 L875.5,475.5 L875.9,500.7 L876.0,506.3 L876.5,534.5 L876.7,546.7 L877.0,557.9 L877.5,575.8 L878.0,593.0 L878.5,596.6 L879.0,601.1 L879.5,605.0 L880.0,609.5 L880.5,610.8 L881.0,613.3 L881.5,614.8 L882.0,615.9 L882.5,617.3 L883.0,616.8 L883.5,617.5 L884.0,618.8 L884.5,619.4 L885.0,619.4 L885.5,620.9 L886.0,620.7 L886.5,620.9 L887.0,620.8 L887.5,621.4 L888.0,620.8 L888.5,620.7 L889.0,620.8 L889.5,620.3 L889.7,620.0 L890.0,594.0 L890.3,569.2 L890.5,584.4 L891.0,619.7 L891.5,620.5 L892.0,620.3 L892.5,620.5 L893.0,621.0 L893.5,622.2 L894.0,621.4 L894.5,621.6 L895.0,621.9 L895.5,622.9 L896.0,622.7 L896.5,623.5 L896.7,622.3 L897.0,622.3 L897.5,623.7 L898.0,622.5 L898.5,623.6 L899.0,623.4 L899.5,622.9 L900.0,622.9 L900.5,624.0 L901.0,622.5 L901.5,624.6 L902.0,622.6 L902.5,623.0 L903.0,624.1 L903.5,623.0 L904.0,625.0 L904.5,623.8 L905.0,623.1 L905.5,623.3 L906.0,624.1 L906.5,624.9 L907.0,623.6 L907.5,623.9 L908.0,624.3 L908.5,624.5 L909.0,624.7 L909.5,623.8 L910.0,624.0 L910.5,625.1 L911.0,625.2 L911.5,624.1 L912.0,625.4 L912.5,623.7 L913.0,625.1 L913.5,625.3 L914.0,624.6 L914.5,624.9 L915.0,623.5 L915.5,625.3 L916.0,624.9 L916.5,624.7 L917.0,624.7 L917.5,623.8 L918.0,625.4 L918.5,624.7 L919.0,624.9 L919.5,623.9 L920.0,624.9 L920.5,624.1 L921.0,625.3 L921.5,623.7 L922.0,623.9 L922.5,624.1 L923.0,624.5 L923.5,625.6 L924.0,623.7 L924.5,624.9 L925.0,623.8 L925.5,624.6 L926.0,624.4 L926.5,624.1 L927.0,624.8 L927.5,624.5 L928.0,624.4 L928.5,625.2 L929.0,624.4 L929.5,626.0 L930.0,624.4 L930.5,626.1 L931.0,624.3 L931.5,626.0 L932.0,624.1 L932.5,624.1 L933.0,624.3 L933.5,625.7 L934.0,624.7 L934.5,624.9 L935.0,625.8 L935.5,624.4 L936.0,625.6 L936.5,625.4 L937.0,624.9 L937.5,626.6 L938.0,625.4 L938.5,625.3 L939.0,626.3 L939.5,626.7 L940.0,625.4 L940.5,625.2 L941.0,627.1 L941.5,626.0 L942.0,626.3 L942.5,626.1 L943.0,627.0 L943.5,626.2 L944.0,627.0 L944.5,626.5 L945.0,625.6 L945.5,626.6 L946.0,627.4 L946.5,626.7 L947.0,626.4 L947.5,625.7 L948.0,627.2 L948.5,626.6 L949.0,626.5 L949.5,626.6 L950.0,626.8 L950.5,626.6 L951.0,626.6 L951.5,627.0 L952.0,626.1 L952.5,626.6 L953.0,627.1 L953.5,628.1 L954.0,627.1 L954.5,627.5 L955.0,628.2 L955.5,628.1 L956.0,627.9 L956.5,627.8 L957.0,627.8 L957.5,626.9 L958.0,626.8 L958.5,626.7 L959.0,626.8 L959.5,628.0 L960.0,628.1 L960.5,626.8 L961.0,628.7 L961.5,627.8 L962.0,628.1 L962.5,627.0 L963.0,628.8 L963.5,627.0 L964.0,627.3 L964.5,627.8 L965.0,627.9 L965.5,627.9 L966.0,628.8 L966.5,626.8 L967.0,628.2 L967.5,627.6 L968.0,628.5 L968.5,628.1 L969.0,628.4 L969.5,628.5 L970.0,628.3 L970.5,626.9 L971.0,627.7 L971.5,628.2 L972.0,628.2 L972.5,628.5 L973.0,627.4 L973.5,626.5 L974.0,628.0 L974.5,627.0 L975.0,627.8 L975.5,626.5 L976.0,627.1 L976.5,627.7 L977.0,626.6 L977.5,627.0 L978.0,626.6 L978.5,628.2 L979.0,628.0 L979.5,627.7 L980.0,627.4 L980.5,628.4 L981.0,626.8 L981.5,627.7 L982.0,626.4 L982.5,627.5 L983.0,626.6 L983.5,626.1 L984.0,628.1 L984.5,626.7 L985.0,628.2 L985.5,627.5 L986.0,627.5 L986.5,627.5 L987.0,628.2 L987.5,626.5 L988.0,628.1 L988.5,626.7 L989.0,626.1 L989.5,627.9 L990.0,626.1 L990.5,627.0 L991.0,627.8 L991.5,626.7 L992.0,627.7 L992.5,627.6 L993.0,627.7 L993.5,626.6 L994.0,627.8 L994.5,628.2 L995.0,626.7 L995.5,628.6 L996.0,628.6 L996.5,627.3 L997.0,628.7 L997.5,628.7 L998.0,627.0 L998.5,628.4 L999.0,628.9 L999.5,628.7 L1000.0,627.2 L1000.5,627.8 L1001.0,628.1 L1001.5,627.7 L1002.0,627.7 L1002.5,627.1 L1003.0,626.9 L1003.5,627.6 L1004.0,627.8 L1004.5,628.2 L1005.0,629.0 L1005.5,627.1 L1005.7,627.7 L1006.0,628.7 L1006.5,628.4 L1007.0,626.7 L1007.5,627.8 L1008.0,626.3 L1008.5,628.0 L1009.0,626.3 L1009.5,626.9 L1010.0,626.4 L1010.5,626.2 L1011.0,625.3 L1011.5,625.3 L1012.0,624.9 L1012.5,625.3 L1012.6,624.8 L1013.0,607.2 L1013.5,584.6 L1013.6,580.4 L1014.0,548.0 L1014.4,514.1 L1014.5,520.9 L1015.0,554.9 L1015.3,575.1 L1015.5,582.5 L1016.0,601.4 L1016.5,621.2 L1016.6,624.4 L1017.0,625.6 L1017.5,626.4 L1018.0,626.5 L1018.5,626.7 L1019.0,625.8 L1019.5,625.7 L1020.0,626.3 L1020.5,627.2 L1021.0,626.2 L1021.5,626.1 L1022.0,628.1 L1022.5,626.7 L1023.0,626.0 L1023.5,627.0 L1024.0,627.4 L1024.4,626.9 L1024.5,626.1 L1025.0,626.7 L1025.5,625.4 L1026.0,626.6 L1026.5,626.8 L1027.0,624.5 L1027.5,625.4 L1028.0,625.7 L1028.5,625.1 L1029.0,623.9 L1029.5,623.6 L1030.0,624.3 L1030.5,623.2 L1031.0,624.8 L1031.5,623.9 L1032.0,623.3 L1032.5,623.3 L1033.0,621.1 L1033.5,620.8 L1034.0,619.8 L1034.4,618.1 L1034.5,612.3 L1035.0,575.2 L1035.2,559.3 L1035.5,534.8 L1035.9,501.1 L1036.0,506.0 L1036.5,523.2 L1036.7,531.0 L1037.0,541.8 L1037.5,560.6 L1038.0,588.2 L1038.2,600.8 L1038.5,604.5 L1039.0,613.7 L1039.5,614.7 L1040.0,615.4 L1040.5,615.9 L1041.0,618.0 L1041.5,619.3 L1042.0,612.1 L1042.5,603.4 L1042.8,599.4 L1043.0,595.8 L1043.5,585.7 L1043.8,577.9 L1044.0,583.7 L1044.5,594.6 L1044.8,599.1 L1045.0,604.3 L1045.5,613.1 L1045.8,618.2 L1046.0,618.8 L1046.5,620.0 L1047.0,620.2 L1047.5,622.6 L1048.0,623.0 L1048.5,623.7 L1049.0,625.8 L1049.5,626.4 L1050.0,625.7 L1050.5,625.7 L1051.0,626.8 L1051.5,626.7 L1052.0,628.2 L1052.5,627.2 L1053.0,627.3 L1053.5,627.4 L1054.0,628.1 L1054.5,628.3 L1055.0,630.5 L1055.5,630.4 L1056.0,630.3 L1056.5,631.2 L1057.0,630.6 L1057.5,630.9 L1058.0,629.8 L1058.5,630.2 L1059.0,631.0 L1059.5,631.6 L1060.0,630.5 L1060.5,631.0 L1061.0,630.7 L1061.5,630.8 L1062.0,631.5 L1062.5,632.4 L1063.0,632.6 L1063.5,631.8 L1064.0,630.7 L1064.5,631.4 L1065.0,632.3 L1065.5,633.0 L1066.0,631.3 L1066.5,632.9 L1067.0,633.1 L1067.5,631.4 L1068.0,633.2 L1068.5,632.6 L1069.0,633.2 L1069.5,632.9 L1070.0,632.9 L1070.5,633.4 L1071.0,633.2 L1071.5,632.5 L1072.0,632.5 L1072.5,633.9 L1073.0,632.4 L1073.5,632.7 L1074.0,632.2 L1074.5,632.7 L1075.0,633.3 L1075.5,632.5 L1076.0,633.1 L1076.5,633.6 L1077.0,633.1 L1077.5,634.0 L1078.0,633.5 L1078.5,633.2 L1079.0,634.1 L1079.5,633.8 L1080.0,633.7 L1080.5,633.1 L1081.0,635.0 L1081.5,633.2 L1082.0,633.8 L1082.5,634.3 L1083.0,635.1 L1083.5,633.8 L1084.0,633.4 L1084.5,634.8 L1085.0,635.4 L1085.5,634.4 L1086.0,635.6 L1086.5,634.2 L1086.6,635.4 L1087.0,633.6 L1087.5,635.3 L1088.0,635.9 L1088.5,634.8 L1089.0,636.2 L1089.5,635.8 L1090.0,635.4 L1090.5,635.0 L1091.0,636.5 L1091.5,636.0 L1092.0,636.6 L1092.5,636.0 L1093.0,635.8 L1093.5,636.1 L1094.0,637.5 L1094.5,636.6 L1095.0,637.1 L1095.5,638.0 L1096.0,637.4 L1096.5,638.0 L1097.0,638.1 L1097.5,639.1 L1098.0,638.4 L1098.5,638.3 L1099.0,640.1 L1099.5,638.5 L1100.0,639.9 L1100.5,640.1 L1101.0,639.5 L1101.5,641.0 L1102.0,641.3 L1102.5,640.7 L1103.0,640.5 L1103.5,640.1 L1104.0,642.6 L1104.5,643.2 L1105.0,641.3 L1105.5,641.6 L1106.0,642.7 L1106.5,643.3 L1107.0,643.7 L1107.5,643.6 L1108.0,643.5 L1108.5,643.4 L1109.0,641.8 L1109.5,643.4 L1110.0,644.2 L1110.5,643.1 L1111.0,643.1 L1111.5,643.7 L1112.0,644.3 L1112.5,642.8 L1113.0,645.2 L1113.5,645.2 L1114.0,643.9 L1114.5,644.2 L1115.0,644.1 L1115.5,645.0 L1116.0,646.8 L1116.5,645.2 L1117.0,647.0 L1117.5,644.9 L1118.0,645.2 L1118.5,646.1 L1119.0,645.1 L1119.5,645.1 L1120.0,646.8 L1120.5,645.9 L1121.0,647.1 L1121.5,645.8 L1122.0,646.1 L1122.5,647.9 L1123.0,647.1 L1123.5,645.8 L1124.0,646.8 L1124.5,645.8 L1125.0,645.7 L1125.5,647.3 L1126.0,645.9 L1126.5,646.3 L1127.0,645.9 L1127.5,646.0 L1128.0,647.0 L1128.5,646.2 L1129.0,646.7 L1129.5,647.1 L1130.0,646.4 L1130.5,646.2 L1131.0,646.3 L1131.5,648.7 L1132.0,646.9 L1132.5,647.3 L1133.0,648.2 L1133.5,648.3 L1134.0,648.0 L1134.5,648.7 L1135.0,647.6 L1135.5,646.5 L1136.0,647.9 L1136.5,647.4 L1137.0,648.5 L1137.5,646.8 L1138.0,648.1 L1138.5,646.1 L1139.0,647.2 L1139.5,647.1 L1140.0,646.4 L1140.5,648.5 L1141.0,648.6 L1141.5,646.8 L1142.0,648.2 L1142.5,648.8 L1143.0,647.9 L1143.5,647.2 L1144.0,648.2 L1144.5,647.3 L1145.0,647.9 L1145.5,648.1 L1146.0,647.0 L1146.5,648.2 L1147.0,647.7 L1147.5,648.0 L1148.0,647.1 L1148.5,648.4 L1148.8,646.6 L1149.0,647.6 L1149.5,647.8 L1150.0,646.2 L1150.5,648.6 L1151.0,647.8 L1151.5,646.4 L1152.0,648.7 L1152.5,648.3 L1153.0,648.9 L1153.5,648.2 L1154.0,647.6 L1154.5,648.5 L1155.0,647.2 L1155.5,647.4 L1156.0,647.2 L1156.5,647.1 L1157.0,648.9 L1157.5,647.6 L1158.0,647.6 L1158.5,647.2 L1159.0,647.1 L1159.5,646.8 L1160.0,648.9 L1160.5,648.3 L1161.0,647.5 L1161.5,647.8 L1162.0,648.6 L1162.5,647.1 L1163.0,646.9 L1163.5,647.5 L1164.0,647.4 L1164.5,648.5 L1165.0,648.7 L1165.5,648.6 L1166.0,648.0 L1166.5,647.5 L1167.0,646.5 L1167.5,648.7 L1168.0,648.5 L1168.5,647.5 L1169.0,648.1 L1169.5,648.5 L1170.0,646.7 L1170.5,647.5 L1171.0,648.7 L1171.5,646.5 L1172.0,646.2 L1172.5,648.6 L1173.0,648.4 L1173.5,645.8 L1174.0,647.4 L1174.5,647.6 L1175.0,647.8 L1175.5,647.5 L1176.0,647.3 L1176.5,647.4 L1177.0,647.5 L1177.5,645.9 L1178.0,646.1 L1178.5,646.4 L1179.0,648.3 L1179.5,646.9 L1180.0,647.3 L1180.5,648.4 L1181.0,645.7 L1181.5,646.0 L1182.0,646.2 L1182.5,648.1 L1183.0,647.5 L1183.5,645.7 L1184.0,645.5 L1184.5,645.8 L1185.0,648.0 L1185.5,646.5 L1186.0,647.8 L1186.5,647.7 L1187.0,648.0 L1187.5,646.7 L1188.0,645.9 L1188.5,646.6 L1189.0,647.7 L1189.5,647.8 L1190.0,646.2 L1190.5,646.4 L1191.0,647.3 L1191.5,646.1 L1192.0,645.6 L1192.5,645.7 L1193.0,646.2 L1193.5,645.5 L1194.0,647.0 L1194.5,646.7 L1195.0,647.5 L1195.5,646.9 L1196.0,646.0 L1196.5,645.2 L1197.0,645.3 L1197.5,647.3 L1198.0,646.5 L1198.5,644.9 L1199.0,646.0 L1199.5,646.8 L1200.0,646.9 L1200.5,647.0 L1201.0,647.2 L1201.5,645.9 L1202.0,646.4 L1202.5,644.6 L1203.0,646.3 L1203.5,645.9 L1204.0,644.9 L1204.5,645.0 L1205.0,646.4 L1205.5,644.9 L1206.0,645.2 L1206.5,645.3 L1207.0,646.5 L1207.5,644.7 L1208.0,644.4 L1208.5,644.7 L1209.0,646.2 L1209.5,644.2 L1210.0,645.7 L1210.5,645.5 L1211.0,645.1 L1211.5,645.0 L1212.0,645.5 L1212.5,644.0 L1213.0,644.7 L1213.5,644.9 L1214.0,644.1 L1214.5,645.2 L1215.0,644.4 L1215.5,643.7 L1216.0,643.8 L1216.5,644.3 L1217.0,645.3 L1217.5,645.6 L1218.0,644.6 L1218.5,643.2 L1219.0,644.9 L1219.5,645.7 L1220.0,643.1 L1220.5,643.9 L1221.0,642.9 L1221.5,644.5 L1222.0,643.0 L1222.5,645.4 L1223.0,643.8 L1223.5,644.4 L1224.0,643.5 L1224.5,643.6 L1225.0,642.7 L1225.5,645.3 L1226.0,643.5 L1226.5,643.5 L1227.0,643.9 L1227.5,643.4 L1228.0,643.8 L1228.5,643.8 L1229.0,645.9 L1229.5,645.6 L1230.0,643.9 L1230.5,645.6 L1231.0,643.2 L1231.5,644.9 L1232.0,645.8 L1232.5,643.9 L1233.0,643.8 L1233.5,645.7 L1234.0,645.2 L1234.5,646.2 L1235.0,643.7 L1235.5,643.7 L1236.0,643.4 L1236.5,644.2 L1237.0,643.4 L1237.5,645.0 L1238.0,643.4 L1238.5,644.5 L1239.0,644.7 L1239.5,643.4 L1240.0,645.6 L1240.5,647.0 L1241.0,644.1 L1241.5,644.7 L1242.0,644.0 L1242.5,647.0 L1243.0,646.5 L1243.5,647.1 L1244.0,644.4 L1244.5,644.2 L1245.0,642.8 L1245.5,643.2 L1246.0,647.5 L1246.5,645.8 L1247.0,645.2 L1247.5,643.9 L1248.0,647.8 L1248.5,643.5 L1249.0,646.5 L1249.5,646.4 L1250.0,647.1 L1250.5,647.3 L1251.0,647.0 L1251.5,646.5 L1252.0,646.1 L1252.5,647.9 L1253.0,644.8 L1253.5,645.6 L1254.0,648.1 L1254.5,648.7 L1255.0,647.8 L1255.5,644.9 L1256.0,648.8 L1256.5,649.5 L1257.0,647.2 L1257.5,646.9 L1257.7,646.8 L1258.0,648.1 L1258.5,646.2 L1259.0,646.3 L1259.5,650.6 L1260.0,648.4 L1260.5,648.7 L1261.0,647.9 L1261.5,646.8 L1262.0,647.1 L1262.5,647.3 L1263.0,650.6 L1263.5,651.1 L1264.0,652.2 L1264.5,652.4 L1265.0,648.6 L1265.5,648.0 L1266.0,651.4 L1266.5,649.6 L1267.0,652.8 L1267.5,650.8 L1268.0,650.7 L1268.5,650.7 L1269.0,650.3 L1269.5,651.7 L1270.0,650.0 L1270.5,653.9 L1271.0,653.2 L1271.5,653.6 L1272.0,654.1 L1272.5,652.9 L1273.0,654.0 L1273.5,653.3 L1274.0,652.1 L1274.5,650.0 L1275.0,652.4 L1275.5,652.6 L1276.0,653.6 L1276.5,654.3 L1277.0,653.2 L1277.5,650.7 L1278.0,650.7 L1278.5,654.5 L1279.0,654.6 L1279.5,652.4 L1280.0,650.9 L1280.5,651.1 L1281.0,651.2 L1281.5,655.1 L1282.0,652.7 L1282.5,653.0 L1283.0,654.8 L1283.5,652.1 L1284.0,653.5 L1284.5,653.8 L1285.0,653.1 L1285.5,651.7 L1286.0,653.2 L1286.5,651.7 L1287.0,652.7 L1287.5,653.2 L1288.0,652.2 L1288.5,656.1 L1289.0,654.6 L1289.5,655.8 L1290.0,655.9 L1290.5,652.8 L1291.0,652.1 L1291.5,656.2 L1292.0,653.9 L1292.5,654.8 L1293.0,655.7 L1293.5,653.2 L1294.0,654.4 L1294.5,653.0 L1295.0,652.6 L1295.5,651.7 L1296.0,652.6 L1296.5,652.6 L1297.0,655.0 L1297.5,653.8 L1298.0,655.0 L1298.5,652.6 L1299.0,652.3 L1299.5,654.0 L1300.0,652.5 L1300.5,654.7 L1301.0,652.9 L1301.5,652.4 L1302.0,654.6 L1302.5,651.9 L1303.0,654.4 L1303.5,652.8 L1304.0,651.3 L1304.5,653.8 L1305.0,653.7 L1305.5,651.3 L1306.0,653.0 L1306.5,653.0 L1307.0,654.2 L1307.5,651.7 L1308.0,653.4 L1308.5,655.5 L1309.0,650.8 L1309.5,654.2 L1310.0,652.4 L1310.5,653.0 L1311.0,652.0 L1311.5,652.9 L1312.0,653.0 L1312.5,655.1 L1313.0,654.8 L1313.5,655.1 L1314.0,655.3 L1314.5,652.5 L1315.0,654.4 L1315.5,654.9 L1315.6,651.2 L1316.0,654.2 L1316.5,653.5 L1317.0,651.8 L1317.5,654.0 L1318.0,654.4 L1318.5,654.3 L1319.0,651.3 L1319.5,655.8 L1320.0,653.1 L1320.5,655.4 L1321.0,652.4 L1321.5,654.6 L1322.0,652.1 L1322.5,654.6 L1323.0,655.1 L1323.5,654.0 L1324.0,655.7 L1324.5,654.6 L1325.0,652.7 L1325.5,652.7 L1326.0,652.8 L1326.5,654.3 L1327.0,657.1 L1327.5,654.3 L1328.0,656.7 L1328.5,655.9 L1329.0,656.2 L1329.5,656.1 L1330.0,653.9 L1330.5,657.2 L1331.0,655.0 L1331.5,657.6 L1332.0,653.2 L1332.5,653.7 L1333.0,653.9 L1333.5,656.7 L1334.0,653.8 L1334.5,655.4 L1335.0,655.8 L1335.5,655.9 L1336.0,654.9 L1336.5,657.7 L1337.0,655.7 L1337.5,654.4 L1338.0,656.3 L1338.5,654.3 L1339.0,657.0 L1339.5,654.7 L1340.0,658.2 L1340.5,654.4 L1341.0,655.6 L1341.5,655.2 L1342.0,657.0 L1342.5,656.3 L1343.0,656.6 L1343.5,656.6 L1344.0,657.5 L1344.5,655.9 L1345.0,656.2 L1345.5,656.0 L1346.0,655.5 L1346.5,657.9 L1347.0,659.4 L1347.5,659.4 L1348.0,659.7 L1348.5,655.7 L1349.0,658.6 L1349.5,655.6 L1350.0,659.2 L1350.5,659.4 L1351.0,657.6 L1351.5,660.1 L1352.0,657.7 L1352.5,658.1 L1353.0,657.1 L1353.5,659.5 L1354.0,658.3 L1354.5,658.0 L1355.0,657.7 L1355.5,659.3 L1356.0,656.1 L1356.5,658.8 L1357.0,656.2 L1357.5,656.9 L1358.0,656.1 L1358.5,658.5 L1359.0,660.5 L1359.5,657.1 L1360.0,656.6 L1360.5,658.6 L1361.0,656.2 L1361.5,657.9 L1362.0,658.4 L1362.5,656.6 L1363.0,660.5 L1363.5,658.2 L1364.0,659.2 L1364.5,656.9 L1365.0,661.1 L1365.5,657.3 L1366.0,658.7 L1366.5,657.0 L1367.0,657.3 L1367.5,657.3 L1368.0,658.5 L1368.5,657.1 L1369.0,659.0 L1369.5,659.5 L1370.0,657.7 L1370.5,660.5 L1371.0,657.2 L1371.5,659.6 L1372.0,660.7 L1372.5,659.8 L1373.0,656.9 L1373.5,657.3 L1374.0,657.1 L1374.5,657.5 L1375.0,659.5 L1375.5,661.6 L1376.0,658.7 L1376.5,660.8 L1377.0,658.3 L1377.5,661.7 L1378.0,658.9 L1378.5,658.0 L1379.0,658.0 L1379.5,657.6 L1380.0,657.5 L1380.5,661.5 L1381.0,660.6 L1381.0,662.0 L1381.5,657.7 L1382.0,658.9 L1382.5,662.0 L1383.0,657.0 L1383.5,662.0 L1384.0,662.0 L1384.5,662.0 L1385.0,657.3 L1385.5,658.4 L1386.0,662.0 L1386.5,662.0 L1387.0,662.0 L1387.5,662.0 L1388.0,662.0 L1388.5,658.1 L1389.0,662.0 L1389.5,662.0 L1390.0,662.0 L1390.5,662.0 L1391.0,662.0 L1391.5,662.0 L1392.0,662.0 L1392.5,659.2 L1393.0,657.3 L1393.5,662.0 L1394.0,662.0 L1394.5,659.1 L1395.0,659.0 L1395.5,657.0 L1396.0,658.2 L1396.5,659.9 L1397.0,657.9 L1397.5,662.0 L1398.0,662.0 L1398.5,657.8 L1399.0,662.0 L1399.5,662.0 L1400.0,656.2 L1400.5,662.0 L1401.0,662.0 L1401.5,655.0 L1402.0,662.0 L1402.5,658.4 L1403.0,659.8 L1403.5,662.0 L1404.0,662.0 L1404.5,659.4 L1405.0,659.5 L1405.5,659.6 L1406.0,662.0 L1406.5,662.0 L1407.0,657.9 L1407.5,655.6 L1408.0,659.5 L1408.5,658.5 L1409.0,662.0 L1409.5,662.0 L1410.0,657.9 L1410.5,658.6 L1411.0,662.0 L1411.5,657.9 L1412.0,659.5 L1412.5,662.0 L1413.0,662.0 L1413.5,659.2 L1414.0,657.6 L1414.5,662.0 L1415.0,659.8 L1415.5,659.3 L1416.0,662.0 L1416.5,658.2 L1417.0,659.0 L1417.5,662.0 L1418.0,662.0 L1418.5,659.4 L1419.0,659.0 L1419.5,657.4 L1420.0,659.2 L1420.5,657.4 L1421.0,662.0 L1421.5,658.2 L1422.0,662.0 L1422.5,657.2 L1423.0,658.1 L1423.5,662.0 L1424.0,662.0 L1424.5,657.1 L1425.0,657.5 L1425.5,657.4 L1426.0,654.6 L1426.5,657.3 L1427.0,659.3 L1427.5,657.7 L1428.0,662.0 L1428.5,658.7 L1429.0,662.0 L1429.5,662.0 L1430.0,657.7 L1430.5,658.2 L1431.0,659.0 L1431.5,659.1 L1432.0,662.0 L1432.5,662.0 L1433.0,657.0 L1433.5,656.7 L1434.0,662.0 L1434.5,655.1 L1435.0,662.0 L1435.5,658.2 L1436.0,658.2 L1436.5,658.3 L1437.0,662.0 L1437.5,658.9 L1438.0,662.0 L1438.5,659.1 L1439.0,659.1 L1439.5,662.0 L1440.0,662.0 L1440.5,658.7 L1441.0,659.0 L1441.5,662.0 L1442.0,662.0 L1442.5,657.4 L1443.0,658.5 L1443.5,662.0 L1444.0,658.3 L1444.5,657.9 L1445.0,657.2 L1445.5,658.9 L1446.0,662.0 L1446.5,657.1 L1447.0,656.6 L1447.5,662.0 L1448.0,656.8 L1448.5,662.0 L1449.0,658.3 L1449.5,658.9 L1450.0,658.1 L1450.5,659.0 L1451.0,656.7 L1451.5,657.5 L1452.0,655.7 L1452.5,656.8 L1453.0,656.5 L1453.5,658.4 L1454.0,656.8 L1454.5,656.7 L1455.0,650.0 L1455.5,662.0 L1456.0,662.0 L1456.5,658.4 L1457.0,657.5 L1457.5,656.8 L1458.0,656.9 L1458.5,659.1 L1459.0,658.6 L1459.5,662.0 L1460.0,662.0 L1460.5,662.0 L1461.0,658.9 L1461.5,657.5 L1462.0,657.1 L1462.5,657.2 L1463.0,662.0 L1463.5,658.3 L1464.0,662.0 L1464.5,662.0 L1465.0,657.0 L1465.5,657.8 L1466.0,662.0 L1466.5,657.0 L1467.0,662.0 L1467.5,659.4 L1468.0,662.0 L1468.5,662.0 L1469.0,658.1 L1469.5,659.2 L1470.0,662.0 L1470.5,654.3 L1471.0,662.0 L1471.5,654.6 L1472.0,655.6 L1472.5,656.3 L1473.0,657.9 L1473.5,662.0 L1474.0,662.0 L1474.5,658.8 L1475.0,662.0 L1475.5,656.9 L1476.0,657.1 L1476.5,656.8 L1477.0,662.0 L1477.5,657.3 L1478.0,662.0 L1478.5,662.0 L1479.0,650.2 L1479.5,658.8 L1480.0,662.0 L1480.5,657.8 L1481.0,657.9 L1481.5,651.8 L1482.0,662.0 L1482.5,656.5 L1483.0,658.8 L1483.5,662.0 L1484.0,658.4 L1484.5,657.7 L1485.0,655.2 L1485.5,657.0 L1486.0,662.0 L1486.5,658.4 L1487.0,646.3 L1487.5,656.4 L1488.0,657.0 L1488.5,656.5 L1489.0,662.0 L1489.5,662.0 L1490.0,657.7 L1490.5,662.0 L1491.0,662.0 L1491.5,662.0 L1492.0,662.0 L1492.5,656.8 L1493.0,662.0 L1493.5,657.0 L1494.0,659.2 L1494.5,662.0 L1495.0,662.0 L1495.5,658.1 L1496.0,646.3 L1496.5,654.4 L1497.0,662.0 L1497.5,656.4 L1498.0,656.9 L1498.5,656.1 L1499.0,662.0 L1499.5,650.5 L1500.0,662.0 L1500.5,655.9 L1501.0,656.7 L1501.5,658.8 L1502.0,662.0 L1502.5,655.7 L1503.0,657.4 L1503.5,662.0 L1504.0,656.7 L1504.5,662.0 L1505.0,658.8 L1505.5,662.0 L1506.0,662.0 L1506.5,658.8 L1507.0,662.0 L1507.5,662.0 L1508.0,658.2 L1508.5,656.4 L1509.0,652.2 L1509.5,654.3 L1510.0,657.5 L1510.5,648.2 L1511.0,662.0 L1511.5,658.0 L1512.0,662.0 L1512.5,658.8 L1513.0,662.0 L1513.5,657.3 L1514.0,647.7 L1514.5,662.0 L1515.0,652.9 L1515.5,662.0 L1516.0,642.2 L1516.5,662.0 L1517.0,662.0 L1517.5,657.8 L1518.0,649.9 L1518.5,654.5 L1519.0,656.3 L1519.5,662.0 L1520.0,657.3 L1520.5,662.0 L1521.0,658.3 L1521.5,654.0 L1522.0,658.3 L1522.5,658.8 L1523.0,658.9 L1523.5,649.7 L1524.0,651.4 L1524.5,658.4 L1525.0,657.5 L1525.5,662.0 L1526.0,662.0 L1526.5,658.0 L1527.0,658.8 L1527.5,658.8 L1528.0,649.6 L1528.5,662.0 L1529.0,656.2 L1529.5,656.5 L1530.0,657.7 L1530.5,662.0 L1531.0,650.3 L1531.5,656.9 L1532.0,650.2 L1532.5,638.9 L1533.0,657.2 L1533.5,654.2 L1534.0,648.9 L1534.5,662.0 L1535.0,662.0 L1535.5,662.0 L1536.0,662.0 L1536.5,656.8 L1537.0,658.1 L1537.5,654.3 L1538.0,662.0 L1538.5,656.5 L1539.0,662.0 L1539.5,638.2 L1540.0,655.2 L1540.5,653.4 L1541.0,662.0 L1541.5,662.5 L1542.0,662.5 L1542.5,662.6 L1543.0,662.4 L1543.5,662.5 L1544.0,661.6 L1544.5,662.4 L1545.0,662.4 L1545.5,661.9 L1546.0,661.7 L1546.5,662.4 L1547.0,662.0 L1547.5,662.5 L1548.0,662.6 L1548.5,661.9 L1549.0,661.7 L1549.5,662.6 L1550.0,662.6 L1550.5,661.0 L1551.0,661.7 L1551.5,662.3 L1552.0,662.1 L1552.5,662.2 L1553.0,661.6 L1553.5,661.8 L1554.0,662.0 L1554.5,661.8 L1555.0,662.4 L1555.5,661.5 L1556.0,662.3 L1556.5,662.2 L1557.0,662.4 L1557.5,662.2 L1558.0,662.1 L1558.5,661.4 L1559.0,662.2 L1559.5,662.4 L1560.0,661.4 L1560.5,662.3 L1561.0,661.8 L1561.5,662.7 L1562.0,662.2 L1562.5,661.3 L1563.0,662.8 L1563.5,662.1 L1564.0,662.2 L1564.5,662.4 L1565.0,662.0 L1565.5,662.8 L1566.0,662.4 L1566.5,661.4 L1567.0,662.4 L1567.5,661.6 L1568.0,662.7 L1568.5,661.7 L1569.0,662.7 L1569.5,662.5 L1570.0,662.3 L1570.5,661.6 L1571.0,661.4 L1571.5,662.7 L1572.0,661.5 L1572.5,661.8 L1573.0,662.6 L1573.5,662.5 L1574.0,660.7 L1574.5,662.5 L1575.0,662.0 L1575.5,662.0 L1576.0,661.2 L1576.5,662.3 L1577.0,662.6 L1577.5,662.7 L1578.0,662.0 L1578.5,661.4 L1579.0,662.2 L1579.5,662.0 L1580.0,662.6 L1580.5,662.6 L1581.0,662.4 L1581.5,661.1 L1582.0,662.1 L1582.5,662.0 L1583.0,662.1 L1583.5,660.0 L1584.0,661.7 L1584.5,662.6 L1585.0,662.4 L1585.5,662.5 L1586.0,662.5 L1586.5,661.9 L1587.0,662.7 L1587.5,662.4" fill="none" stroke="#c80000" stroke-width="1.25" stroke-linejoin="round" shape-rendering="crispEdges"/>
<path d="M290.5,662.8 L291.0,663.1 L291.5,662.4 L292.0,662.6 L292.5,662.5 L293.0,663.0 L293.5,662.4 L294.0,662.9 L294.5,663.0 L295.0,663.0 L295.5,662.7 L296.0,662.7 L296.5,663.0 L297.0,662.8 L297.5,662.7 L298.0,662.3 L298.5,662.2 L299.0,662.7 L299.5,662.7 L300.0,663.0 L300.5,663.1 L301.0,662.9 L301.5,662.9 L302.0,662.9 L302.5,663.3 L303.0,663.0 L303.5,662.9 L304.0,662.8 L304.5,663.0 L305.0,662.4 L305.5,662.6 L306.0,662.5 L306.5,662.5 L307.0,663.3 L307.5,663.1 L308.0,663.2 L308.5,662.9 L309.0,662.6 L309.5,662.6 L310.0,662.3 L310.5,662.1 L311.0,662.9 L311.5,662.6 L312.0,662.6 L312.5,663.2 L313.0,663.0 L313.5,662.9 L314.0,662.4 L314.5,662.9 L315.0,662.5 L315.5,662.5 L316.0,662.4 L316.5,662.7 L317.0,663.4 L317.5,662.2 L318.0,662.6 L318.5,662.6 L319.0,663.1 L319.5,662.6 L320.0,662.8 L320.5,662.7 L321.0,662.4 L321.5,662.7 L322.0,662.5 L322.5,662.9 L323.0,663.1 L323.5,662.5 L324.0,662.8 L324.5,662.5 L325.0,662.7 L325.5,662.7 L326.0,663.0 L326.5,663.1 L327.0,662.8 L327.5,662.6 L328.0,662.8 L328.5,663.1 L329.0,663.2 L329.5,662.4 L330.0,662.5 L330.5,663.1 L331.0,662.9 L331.5,663.4 L332.0,662.8 L332.5,662.6 L333.0,662.7 L333.5,663.1 L334.0,662.5 L334.5,663.0 L335.0,663.1 L335.5,663.0 L336.0,662.5 L336.5,663.1 L337.0,662.7 L337.5,662.8 L338.0,662.8 L338.5,663.2 L339.0,662.6 L339.5,662.9 L340.0,662.9 L340.5,662.9 L341.0,662.5 L341.5,662.4 L342.0,662.8 L342.5,663.2 L343.0,662.7 L343.5,663.1 L344.0,662.6 L344.5,662.9 L345.0,662.9 L345.5,662.6 L346.0,662.6 L346.5,662.6 L347.0,662.6 L347.5,662.4 L348.0,663.1 L348.5,662.8 L349.0,662.9 L349.5,662.3 L350.0,662.8 L350.5,662.5 L351.0,662.3 L351.5,663.0 L352.0,662.8 L352.5,662.2 L353.0,662.6 L353.5,662.5 L354.0,662.3 L354.5,662.2 L355.0,662.3 L355.5,662.6 L356.0,663.0 L356.5,663.4 L357.0,663.0 L357.5,662.6 L358.0,662.5 L358.5,662.5 L359.0,662.8 L359.5,662.3 L360.0,661.9 L360.5,663.1 L361.0,662.8 L361.5,662.5 L362.0,663.3 L362.5,662.6 L363.0,662.6 L363.5,663.1 L364.0,662.2 L364.5,663.2 L365.0,662.9 L365.5,662.0 L366.0,662.6 L366.5,662.4 L367.0,663.1 L367.5,662.7 L368.0,663.0 L368.5,663.0 L369.0,662.9 L369.5,662.4 L370.0,662.6 L370.5,662.7 L371.0,662.8 L371.5,662.7 L372.0,662.9 L372.5,662.2 L373.0,662.6 L373.5,662.1 L374.0,663.1 L374.5,662.6 L375.0,663.3 L375.5,662.8 L376.0,662.7 L376.5,663.0 L377.0,663.2 L377.5,662.7 L378.0,662.1 L378.5,662.7 L379.0,663.0 L379.5,662.7 L380.0,662.5 L380.5,662.3 L381.0,662.7 L381.5,662.6 L382.0,662.5 L382.5,662.7 L383.0,662.4 L383.5,662.6 L384.0,662.9 L384.5,662.2 L385.0,662.8 L385.5,662.7 L386.0,663.0 L386.5,663.1 L387.0,662.5 L387.5,662.5 L388.0,662.5 L388.5,662.7 L389.0,663.0 L389.5,662.5 L390.0,663.1 L390.5,663.2 L391.0,662.6 L391.5,662.6 L392.0,662.9 L392.5,663.2 L393.0,662.5 L393.5,663.0 L394.0,662.9 L394.5,662.8 L395.0,663.2 L395.5,662.6 L396.0,663.2 L396.5,662.7 L397.0,663.2 L397.5,662.7 L398.0,662.7 L398.5,662.8 L399.0,662.3 L399.5,662.9 L400.0,663.1 L400.5,662.8 L401.0,662.7 L401.5,662.7 L402.0,662.2 L402.5,662.9 L403.0,663.0 L403.5,663.0 L404.0,662.7 L404.5,662.7 L405.0,662.8 L405.5,663.2 L406.0,662.1 L406.5,662.4 L407.0,662.1 L407.5,662.9 L408.0,662.6 L408.5,663.0 L409.0,662.7 L409.5,662.7 L410.0,663.1 L410.5,663.0 L411.0,662.5 L411.5,663.2 L412.0,662.8 L412.5,662.8 L413.0,662.6 L413.5,662.2 L414.0,662.4 L414.5,662.4 L415.0,662.8 L415.5,663.1 L416.0,662.7 L416.5,662.7 L417.0,662.1 L417.5,662.5 L418.0,662.8 L418.5,662.4 L419.0,662.3 L419.5,662.8 L420.0,662.9 L420.5,662.3 L421.0,662.9 L421.5,662.6 L422.0,662.9 L422.5,662.5 L423.0,663.0 L423.5,662.8 L424.0,662.3 L424.5,663.0 L425.0,662.1 L425.5,662.5 L426.0,663.4 L426.5,663.2 L427.0,662.7 L427.5,662.9 L428.0,662.4 L428.5,663.2 L429.0,662.4 L429.5,662.9 L430.0,662.9 L430.5,662.7 L431.0,662.6 L431.5,662.7 L432.0,662.8 L432.5,662.8 L433.0,662.3 L433.5,662.8 L434.0,662.6 L434.5,662.8 L435.0,662.9 L435.5,662.6 L436.0,662.8 L436.5,662.6 L437.0,662.9 L437.5,662.9 L438.0,662.7 L438.5,663.1 L439.0,662.7 L439.5,662.7 L440.0,663.1 L440.5,662.9 L441.0,662.3 L441.5,661.7 L442.0,663.3 L442.5,663.3 L443.0,661.8 L443.5,662.5 L444.0,662.3 L444.5,662.7 L445.0,662.7 L445.5,662.7 L446.0,662.8 L446.5,663.0 L447.0,662.1 L447.5,662.0 L448.0,662.6 L448.5,662.8 L449.0,662.8 L449.5,662.4 L450.0,663.1 L450.5,662.2 L451.0,662.3 L451.5,663.0 L452.0,662.9 L452.5,662.8 L453.0,663.1 L453.5,663.0 L454.0,662.5 L454.5,662.8 L455.0,662.7 L455.5,662.3 L456.0,662.5 L456.5,662.8 L457.0,662.3 L457.5,662.3 L458.0,662.9 L458.5,662.7 L459.0,662.5 L459.5,662.3 L460.0,662.3 L460.5,663.0 L461.0,662.9 L461.5,662.5 L462.0,662.6 L462.5,662.4 L463.0,662.4 L463.5,662.2 L464.0,662.7 L464.5,662.6 L465.0,662.7 L465.5,662.4 L466.0,662.8 L466.5,663.0 L467.0,662.0 L467.5,662.5 L468.0,662.3 L468.5,662.5 L469.0,662.2 L469.5,662.8 L470.0,662.6 L470.5,662.6 L471.0,662.8 L471.5,662.9 L472.0,662.6 L472.5,662.9 L473.0,662.8 L473.5,662.5 L474.0,662.6 L474.5,662.4 L475.0,662.5 L475.5,663.0 L476.0,663.2 L476.5,662.7 L477.0,662.6 L477.5,662.4 L478.0,663.2 L478.5,662.3 L479.0,661.9 L479.5,662.6 L480.0,663.2 L480.5,662.7 L481.0,662.9 L481.5,663.0 L482.0,662.5 L482.5,662.3 L483.0,662.7 L483.5,662.9 L484.0,662.7 L484.5,663.4 L485.0,662.3 L485.5,662.5 L486.0,662.4 L486.5,662.9 L487.0,662.7 L487.5,662.7 L488.0,662.8 L488.5,662.6 L489.0,662.5 L489.5,662.5 L490.0,662.8 L490.5,662.7 L491.0,662.8 L491.5,662.8 L492.0,662.4 L492.5,662.5 L493.0,662.5 L493.5,662.7 L494.0,662.8 L494.5,662.9 L495.0,663.1 L495.5,662.8 L496.0,662.5 L496.5,662.4 L497.0,662.6 L497.5,662.5 L498.0,662.1 L498.5,663.0 L499.0,662.6 L499.5,662.5 L500.0,662.2 L500.5,662.7 L501.0,663.0 L501.5,663.1 L502.0,662.9 L502.5,662.4 L503.0,662.7 L503.5,662.7 L504.0,662.6 L504.5,662.9 L505.0,662.4 L505.5,663.4 L506.0,663.1 L506.5,662.2 L507.0,663.0 L507.5,662.6 L508.0,663.1 L508.5,662.3 L509.0,662.4 L509.5,662.8 L510.0,663.4 L510.5,662.5 L511.0,662.6 L511.5,662.7 L512.0,662.4 L512.5,662.8 L513.0,662.7 L513.5,663.0 L514.0,662.8 L514.5,662.0 L515.0,663.0 L515.5,662.8 L516.0,662.6 L516.5,662.2 L517.0,662.7 L517.5,662.5 L518.0,662.4 L518.5,662.5 L519.0,662.8 L519.5,662.4 L520.0,662.8 L520.5,662.8 L521.0,662.9 L521.5,662.3 L522.0,662.2 L522.5,662.9 L523.0,662.1 L523.5,662.6 L524.0,662.9 L524.5,662.1 L525.0,662.2 L525.5,662.8 L526.0,662.3 L526.5,662.9 L527.0,662.6 L527.5,662.8 L528.0,662.6 L528.5,662.8 L529.0,661.8 L529.5,662.8 L530.0,662.4 L530.5,662.9 L531.0,662.5 L531.5,662.1 L532.0,662.9 L532.5,662.8 L533.0,662.7 L533.5,662.8 L534.0,662.7 L534.5,662.4 L535.0,662.6 L535.5,662.8 L536.0,662.7 L536.5,663.1 L537.0,662.1 L537.5,662.3 L538.0,662.5 L538.5,662.7 L539.0,662.4 L539.5,662.5 L540.0,662.8 L540.5,662.6 L541.0,662.4 L541.5,662.7 L542.0,662.2 L542.5,661.9 L543.0,662.6 L543.5,661.5 L544.0,662.2 L544.5,662.0 L545.0,661.8 L545.5,662.8 L546.0,662.2 L546.5,661.8 L547.0,661.4 L547.5,661.8 L548.0,661.2 L548.5,661.7 L549.0,662.5 L549.5,660.5 L550.0,661.3 L550.5,660.8 L551.0,660.6 L551.5,660.2 L552.0,659.5 L552.5,660.0 L553.0,659.8 L553.5,659.1 L554.0,657.5 L554.5,656.8 L555.0,656.2 L555.5,655.0 L556.0,655.7 L556.5,654.0 L557.0,653.3 L557.5,652.6 L558.0,651.3 L558.5,650.4 L559.0,648.4 L559.5,649.1 L560.0,648.1 L560.5,646.4 L561.0,644.3 L561.5,643.1 L562.0,641.2 L562.5,638.6 L563.0,637.7 L563.5,636.2 L564.0,634.1 L564.5,632.3 L565.0,632.5 L565.5,631.1 L566.0,629.3 L566.5,629.2 L567.0,628.2 L567.5,627.8 L568.0,628.9 L568.5,629.2 L569.0,629.2 L569.5,628.9 L570.0,629.5 L570.5,629.6 L571.0,630.5 L571.5,632.0 L572.0,632.1 L572.5,632.8 L573.0,633.7 L573.5,633.6 L574.0,634.3 L574.5,636.7 L575.0,636.1 L575.5,636.5 L576.0,637.4 L576.5,638.4 L577.0,638.2 L577.5,639.0 L578.0,640.3 L578.5,640.3 L579.0,641.4 L579.5,641.5 L580.0,642.2 L580.5,644.0 L581.0,642.9 L581.5,644.0 L582.0,643.9 L582.5,645.0 L583.0,645.9 L583.5,646.9 L584.0,646.5 L584.5,646.0 L585.0,648.5 L585.5,647.7 L586.0,648.1 L586.5,648.1 L587.0,648.4 L587.5,648.3 L588.0,647.2 L588.5,648.2 L589.0,646.8 L589.5,646.5 L590.0,646.0 L590.5,647.1 L591.0,646.1 L591.5,644.9 L592.0,644.5 L592.5,644.4 L593.0,643.6 L593.5,642.2 L594.0,641.7 L594.5,639.6 L595.0,638.5 L595.5,636.8 L596.0,635.4 L596.5,632.7 L597.0,631.5 L597.5,630.1 L598.0,628.9 L598.5,625.2 L599.0,624.6 L599.5,621.2 L600.0,620.3 L600.5,618.0 L601.0,614.2 L601.5,612.7 L602.0,609.2 L602.5,606.3 L603.0,603.2 L603.5,600.4 L604.0,596.4 L604.5,594.1 L605.0,591.1 L605.5,587.8 L606.0,582.6 L606.5,578.1 L607.0,575.4 L607.5,570.2 L608.0,566.0 L608.5,562.3 L609.0,556.1 L609.5,551.7 L610.0,547.8 L610.5,540.5 L611.0,534.9 L611.5,528.0 L612.0,521.6 L612.5,518.2 L613.0,513.5 L613.5,509.4 L614.0,505.7 L614.5,501.9 L615.0,501.7 L615.5,500.6 L616.0,499.6 L616.5,497.6 L617.0,498.9 L617.5,499.6 L618.0,501.1 L618.5,501.7 L619.0,504.4 L619.5,507.0 L620.0,510.2 L620.5,514.0 L621.0,517.0 L621.5,520.9 L622.0,524.7 L622.5,526.9 L623.0,530.3 L623.5,534.7 L624.0,537.8 L624.5,540.7 L625.0,544.4 L625.5,546.7 L626.0,550.8 L626.5,554.3 L627.0,557.4 L627.5,562.6 L628.0,566.0 L628.5,567.5 L629.0,571.1 L629.5,576.4 L630.0,579.3 L630.5,583.8 L631.0,585.7 L631.5,587.6 L632.0,589.9 L632.5,592.9 L633.0,594.0 L633.5,596.5 L634.0,599.2 L634.5,600.2 L635.0,603.0 L635.5,603.9 L636.0,605.9 L636.5,606.7 L637.0,608.5 L637.5,609.7 L638.0,610.4 L638.5,610.9 L639.0,611.1 L639.5,610.7 L640.0,612.3 L640.5,613.0 L641.0,613.5 L641.5,613.4 L642.0,613.6 L642.5,613.3 L643.0,613.0 L643.5,613.7 L644.0,612.1 L644.5,611.2 L645.0,610.7 L645.5,610.4 L646.0,609.6 L646.5,609.0 L647.0,608.2 L647.5,607.3 L648.0,606.1 L648.5,605.0 L649.0,603.0 L649.5,602.4 L650.0,599.9 L650.5,599.3 L651.0,597.7 L651.5,597.2 L652.0,594.7 L652.5,592.5 L653.0,590.3 L653.5,587.0 L654.0,584.6 L654.5,581.2 L655.0,578.3 L655.5,575.2 L656.0,570.4 L656.5,566.6 L657.0,562.7 L657.5,558.3 L658.0,554.2 L658.5,549.4 L659.0,546.7 L659.5,542.4 L660.0,537.6 L660.5,534.0 L661.0,529.1 L661.5,524.4 L662.0,519.7 L662.5,514.5 L663.0,509.1 L663.5,503.1 L664.0,497.3 L664.5,491.4 L665.0,487.1 L665.5,478.7 L666.0,473.8 L666.5,470.9 L667.0,460.8 L667.5,457.2 L668.0,452.4 L668.5,444.5 L669.0,441.5 L669.5,435.6 L670.0,432.9 L670.5,425.0 L671.0,420.6 L671.5,413.5 L672.0,405.7 L672.5,398.8 L673.0,393.3 L673.5,387.5 L674.0,377.3 L674.5,370.3 L675.0,362.6 L675.5,356.9 L676.0,349.7 L676.5,344.9 L677.0,338.5 L677.5,331.1 L678.0,324.7 L678.5,321.2 L679.0,310.7 L679.5,302.1 L680.0,296.5 L680.5,283.8 L681.0,277.1 L681.5,270.3 L682.0,259.9 L682.5,254.4 L683.0,248.0 L683.5,242.5 L684.0,239.5 L684.5,234.5 L685.0,225.0 L685.5,222.2 L686.0,217.7 L686.5,216.4 L687.0,214.0 L687.5,210.8 L688.0,209.9 L688.5,205.7 L689.0,205.1 L689.5,201.8 L690.0,198.0 L690.5,200.2 L691.0,199.3 L691.5,200.2 L692.0,204.6 L692.5,203.2 L693.0,208.0 L693.5,211.1 L694.0,209.1 L694.5,217.2 L695.0,220.0 L695.5,223.3 L696.0,224.0 L696.5,223.8 L697.0,238.3 L697.5,244.4 L698.0,249.2 L698.5,257.1 L699.0,263.4 L699.5,268.8 L700.0,269.5 L700.5,273.3 L701.0,276.4 L701.5,282.8 L702.0,283.1 L702.5,282.9 L703.0,283.6 L703.5,281.4 L704.0,280.0 L704.5,278.7 L705.0,277.8 L705.5,276.7 L706.0,277.2 L706.5,275.4 L707.0,271.0 L707.5,270.4 L708.0,272.8 L708.5,272.6 L709.0,269.3 L709.5,266.9 L710.0,269.5 L710.5,264.8 L711.0,260.8 L711.5,254.7 L712.0,251.7 L712.5,248.1 L713.0,247.3 L713.5,245.9 L714.0,241.8 L714.5,238.2 L715.0,238.3 L715.5,236.3 L716.0,233.3 L716.5,237.0 L717.0,233.2 L717.5,230.6 L718.0,229.3 L718.5,225.3 L719.0,226.8 L719.5,212.6 L720.0,222.9 L720.5,216.3 L721.0,221.7 L721.5,219.6 L722.0,222.7 L722.5,219.6 L723.0,217.5 L723.5,219.0 L724.0,221.3 L724.5,222.8 L725.0,225.4 L725.5,229.6 L726.0,228.6 L726.5,231.2 L727.0,237.9 L727.5,231.1 L728.0,236.7 L728.5,237.5 L729.0,238.3 L729.5,237.8 L730.0,241.1 L730.5,241.7 L731.0,245.7 L731.5,246.0 L732.0,252.8 L732.5,259.6 L733.0,256.1 L733.5,256.5 L734.0,255.0 L734.5,265.5 L735.0,266.6 L735.5,265.8 L736.0,269.3 L736.5,273.4 L737.0,278.0 L737.5,273.2 L738.0,278.2 L738.5,281.2 L739.0,284.2 L739.5,283.6 L740.0,284.6 L740.5,287.5 L741.0,288.7 L741.5,292.6 L742.0,290.7 L742.5,292.3 L743.0,293.3 L743.5,298.3 L744.0,296.3 L744.5,299.3 L745.0,299.7 L745.5,303.4 L746.0,304.7 L746.5,304.6 L747.0,307.4 L747.5,306.9 L748.0,308.3 L748.5,311.8 L749.0,311.1 L749.5,308.7 L750.0,306.4 L750.5,311.3 L751.0,314.0 L751.5,312.6 L752.0,313.9 L752.5,317.5 L753.0,313.7 L753.5,319.3 L754.0,317.5 L754.5,319.6 L755.0,317.6 L755.5,316.7 L756.0,320.2 L756.5,317.7 L757.0,319.6 L757.5,314.5 L758.0,321.5 L758.5,319.8 L759.0,319.4 L759.5,321.3 L760.0,320.9 L760.5,322.6 L761.0,327.1 L761.5,320.5 L762.0,321.8 L762.5,321.9 L763.0,321.1 L763.5,322.7 L764.0,319.3 L764.5,322.9 L765.0,323.5 L765.5,319.2 L766.0,323.1 L766.5,322.6 L767.0,317.9 L767.5,321.0 L768.0,322.2 L768.5,322.2 L769.0,324.3 L769.5,324.9 L770.0,325.6 L770.5,329.1 L771.0,323.7 L771.5,325.3 L772.0,327.6 L772.5,332.1 L773.0,327.6 L773.5,332.1 L774.0,331.9 L774.5,334.0 L775.0,331.7 L775.5,337.9 L776.0,335.3 L776.5,336.6 L777.0,339.2 L777.5,338.1 L778.0,337.1 L778.5,339.5 L779.0,343.4 L779.5,342.6 L780.0,342.6 L780.5,352.5 L781.0,346.1 L781.5,351.7 L782.0,352.5 L782.5,355.5 L783.0,353.6 L783.5,356.9 L784.0,356.9 L784.5,358.8 L785.0,362.2 L785.5,365.7 L786.0,355.3 L786.5,361.3 L787.0,364.6 L787.5,365.4 L788.0,362.5 L788.5,369.6 L789.0,370.8 L789.5,370.8 L790.0,370.1 L790.5,373.2 L791.0,372.8 L791.5,376.0 L792.0,378.7 L792.5,376.3 L793.0,383.9 L793.5,379.1 L794.0,380.8 L794.5,386.2 L795.0,383.8 L795.5,387.7 L796.0,385.6 L796.5,385.3 L797.0,389.7 L797.5,387.7 L798.0,389.6 L798.5,392.9 L799.0,394.8 L799.5,395.4 L800.0,393.8 L800.5,395.3 L801.0,399.5 L801.5,397.2 L802.0,399.1 L802.5,400.7 L803.0,403.3 L803.5,403.3 L804.0,408.7 L804.5,405.5 L805.0,409.6 L805.5,408.8 L806.0,413.0 L806.5,411.9 L807.0,411.5 L807.5,417.5 L808.0,420.1 L808.5,419.3 L809.0,418.5 L809.5,424.7 L810.0,424.3 L810.5,426.5 L811.0,430.7 L811.5,431.0 L812.0,434.0 L812.5,432.2 L813.0,436.5 L813.5,439.4 L814.0,438.1 L814.5,440.5 L815.0,442.1 L815.5,443.3 L816.0,443.2 L816.5,444.4 L817.0,448.2 L817.5,446.9 L818.0,447.6 L818.5,445.4 L819.0,448.2 L819.5,454.4 L820.0,453.8 L820.5,452.3 L821.0,454.5 L821.5,453.0 L822.0,454.6 L822.5,455.4 L823.0,457.1 L823.5,457.8 L824.0,461.6 L824.5,473.4 L825.0,464.8 L825.5,464.4 L826.0,465.4 L826.5,466.6 L827.0,468.6 L827.5,466.3 L828.0,470.6 L828.5,469.9 L829.0,467.0 L829.5,473.8 L830.0,468.8 L830.5,471.2 L831.0,469.7 L831.5,472.9 L832.0,475.4 L832.5,475.4 L833.0,479.3 L833.5,477.6 L834.0,477.9 L834.5,478.6 L835.0,480.1 L835.5,478.2 L836.0,482.9 L836.5,483.3 L837.0,479.7 L837.5,481.7 L838.0,483.6 L838.5,481.0 L839.0,480.2 L839.5,486.0 L840.0,484.5 L840.5,485.2 L841.0,485.5 L841.5,487.6 L842.0,484.9 L842.5,486.9 L843.0,487.1 L843.5,487.0 L844.0,487.3 L844.5,489.1 L845.0,491.2 L845.5,493.8 L846.0,493.0 L846.5,493.3 L847.0,494.1 L847.5,494.7 L848.0,496.1 L848.5,496.6 L849.0,497.6 L849.5,497.2 L850.0,498.3 L850.5,498.6 L851.0,499.7 L851.5,502.3 L852.0,500.8 L852.5,504.5 L853.0,505.1 L853.5,504.1 L854.0,504.6 L854.5,505.3 L855.0,505.9 L855.5,503.9 L856.0,505.0 L856.5,505.0 L857.0,507.1 L857.5,508.1 L858.0,508.2 L858.5,509.9 L859.0,510.0 L859.5,509.3 L860.0,509.3 L860.5,510.1 L861.0,513.5 L861.5,512.0 L862.0,511.8 L862.5,513.3 L863.0,511.8 L863.5,513.9 L864.0,513.7 L864.5,514.5 L865.0,515.0 L865.5,511.9 L866.0,514.6 L866.5,516.1 L867.0,516.0 L867.5,514.2 L868.0,516.7 L868.5,517.5 L869.0,518.2 L869.5,518.0 L870.0,515.9 L870.5,516.6 L871.0,516.6 L871.5,519.6 L872.0,518.4 L872.5,517.4 L873.0,517.8 L873.5,517.9 L874.0,519.0 L874.5,518.9 L875.0,517.9 L875.5,519.7 L876.0,518.3 L876.5,517.7 L877.0,520.1 L877.5,516.6 L878.0,517.0 L878.5,520.2 L879.0,518.4 L879.5,517.9 L880.0,517.0 L880.5,517.7 L881.0,517.8 L881.5,518.0 L882.0,515.7 L882.5,517.9 L883.0,516.4 L883.5,518.9 L884.0,519.6 L884.5,519.9 L885.0,519.7 L885.5,522.7 L886.0,522.5 L886.5,524.4 L887.0,525.8 L887.5,527.6 L888.0,525.7 L888.5,525.3 L889.0,528.2 L889.5,528.9 L890.0,528.9 L890.5,530.1 L891.0,531.3 L891.5,530.3 L892.0,532.4 L892.5,533.3 L893.0,532.6 L893.5,534.6 L894.0,533.5 L894.5,533.4 L895.0,535.3 L895.5,534.8 L896.0,534.4 L896.5,536.9 L897.0,537.3 L897.5,536.8 L898.0,537.8 L898.5,536.8 L899.0,538.6 L899.5,538.4 L900.0,537.5 L900.5,537.0 L901.0,537.4 L901.5,538.7 L902.0,536.6 L902.5,536.4 L903.0,538.1 L903.5,537.1 L904.0,536.0 L904.5,536.6 L905.0,537.0 L905.5,537.5 L906.0,538.5 L906.5,538.0 L907.0,537.6 L907.5,536.5 L908.0,535.5 L908.5,536.9 L909.0,535.8 L909.5,538.2 L910.0,539.4 L910.5,539.1 L911.0,539.0 L911.5,538.4 L912.0,541.5 L912.5,541.1 L913.0,538.8 L913.5,541.7 L914.0,541.6 L914.5,541.9 L915.0,542.8 L915.5,543.3 L916.0,545.3 L916.5,544.7 L917.0,546.1 L917.5,547.0 L918.0,546.3 L918.5,550.8 L919.0,549.0 L919.5,550.4 L920.0,550.2 L920.5,553.1 L921.0,551.9 L921.5,553.6 L922.0,553.8 L922.5,554.0 L923.0,554.7 L923.5,556.3 L924.0,557.9 L924.5,558.1 L925.0,559.5 L925.5,561.5 L926.0,563.3 L926.5,561.5 L927.0,565.1 L927.5,565.9 L928.0,566.0 L928.5,567.9 L929.0,567.5 L929.5,570.3 L930.0,569.5 L930.5,569.4 L931.0,569.9 L931.5,575.3 L932.0,571.7 L932.5,572.3 L933.0,574.6 L933.5,576.3 L934.0,576.5 L934.5,577.1 L935.0,578.6 L935.5,578.3 L936.0,579.3 L936.5,580.4 L937.0,580.6 L937.5,579.8 L938.0,582.4 L938.5,581.0 L939.0,584.3 L939.5,584.1 L940.0,586.2 L940.5,585.4 L941.0,586.2 L941.5,585.7 L942.0,587.8 L942.5,588.5 L943.0,589.2 L943.5,589.2 L944.0,589.8 L944.5,589.7 L945.0,590.6 L945.5,594.7 L946.0,592.9 L946.5,591.6 L947.0,592.3 L947.5,594.5 L948.0,595.7 L948.5,595.5 L949.0,596.5 L949.5,596.1 L950.0,594.6 L950.5,596.1 L951.0,597.2 L951.5,597.3 L952.0,600.9 L952.5,599.0 L953.0,601.9 L953.5,600.5 L954.0,602.4 L954.5,601.9 L955.0,603.1 L955.5,602.3 L956.0,603.7 L956.5,604.2 L957.0,605.0 L957.5,605.5 L958.0,605.7 L958.5,607.1 L959.0,607.1 L959.5,606.1 L960.0,604.2 L960.5,607.2 L961.0,606.7 L961.5,607.2 L962.0,608.2 L962.5,608.7 L963.0,609.0 L963.5,612.0 L964.0,609.9 L964.5,611.6 L965.0,610.5 L965.5,613.0 L966.0,613.3 L966.5,611.7 L967.0,614.0 L967.5,612.9 L968.0,614.6 L968.5,615.1 L969.0,614.7 L969.5,616.5 L970.0,612.6 L970.5,614.3 L971.0,615.3 L971.5,613.6 L972.0,615.1 L972.5,616.0 L973.0,617.6 L973.5,618.9 L974.0,617.8 L974.5,617.9 L975.0,618.3 L975.5,617.1 L976.0,616.5 L976.5,620.5 L977.0,619.6 L977.5,619.4 L978.0,620.5 L978.5,621.2 L979.0,619.5 L979.5,623.2 L980.0,621.3 L980.5,620.8 L981.0,623.5 L981.5,623.4 L982.0,622.6 L982.5,622.8 L983.0,623.1 L983.5,624.3 L984.0,624.9 L984.5,622.9 L985.0,627.3 L985.5,625.1 L986.0,625.9 L986.5,625.6 L987.0,626.7 L987.5,625.5 L988.0,625.2 L988.5,625.7 L989.0,626.3 L989.5,627.8 L990.0,627.7 L990.5,629.2 L991.0,628.0 L991.5,629.2 L992.0,627.1 L992.5,627.8 L993.0,628.7 L993.5,629.5 L994.0,631.2 L994.5,627.4 L995.0,629.8 L995.5,630.0 L996.0,630.8 L996.5,629.8 L997.0,631.1 L997.5,630.9 L998.0,631.1 L998.5,631.5 L999.0,632.9 L999.5,632.4 L1000.0,633.2 L1000.5,632.2 L1001.0,633.3 L1001.5,632.9 L1002.0,633.5 L1002.5,633.6 L1003.0,635.2 L1003.5,634.7 L1004.0,634.9 L1004.5,635.1 L1005.0,635.8 L1005.5,636.4 L1006.0,636.2 L1006.5,636.5 L1007.0,636.6 L1007.5,635.7 L1008.0,636.1 L1008.5,637.0 L1009.0,637.2 L1009.5,637.8 L1010.0,638.3 L1010.5,637.7 L1011.0,638.6 L1011.5,638.3 L1012.0,638.6 L1012.5,638.2 L1013.0,639.1 L1013.5,640.1 L1014.0,638.6 L1014.5,639.6 L1015.0,640.0 L1015.5,640.2 L1016.0,641.3 L1016.5,641.0 L1017.0,640.7 L1017.5,641.6 L1018.0,641.0 L1018.5,641.2 L1019.0,642.4 L1019.5,642.8 L1020.0,642.5 L1020.5,641.7 L1021.0,641.7 L1021.5,643.3 L1022.0,643.6 L1022.5,642.8 L1023.0,644.2 L1023.5,643.4 L1024.0,643.0 L1024.5,644.1 L1025.0,644.4 L1025.5,643.8 L1026.0,645.2 L1026.5,644.6 L1027.0,645.5 L1027.5,645.5 L1028.0,644.7 L1028.5,644.9 L1029.0,645.9 L1029.5,645.8 L1030.0,646.8 L1030.5,646.4 L1031.0,646.1 L1031.5,647.8 L1032.0,646.5 L1032.5,646.6 L1033.0,646.6 L1033.5,648.2 L1034.0,648.1 L1034.5,647.6 L1035.0,647.3 L1035.5,648.6 L1036.0,649.2 L1036.5,648.4 L1037.0,648.3 L1037.5,648.9 L1038.0,649.3 L1038.5,649.4 L1039.0,649.7 L1039.5,649.5 L1040.0,649.9 L1040.5,650.8 L1041.0,650.4 L1041.5,651.6 L1042.0,650.4 L1042.5,650.3 L1043.0,650.9 L1043.5,651.5 L1044.0,650.8 L1044.5,651.0 L1045.0,651.7 L1045.5,651.2 L1046.0,651.0 L1046.5,650.6 L1047.0,651.5 L1047.5,650.5 L1048.0,651.0 L1048.5,651.3 L1049.0,651.0 L1049.5,651.5 L1050.0,651.7 L1050.5,651.8 L1051.0,652.0 L1051.5,652.6 L1052.0,651.7 L1052.5,653.1 L1053.0,651.8 L1053.5,651.9 L1054.0,652.0 L1054.5,653.1 L1055.0,652.7 L1055.5,652.7 L1056.0,653.0 L1056.5,653.8 L1057.0,653.9 L1057.5,653.7 L1058.0,653.2 L1058.5,653.1 L1059.0,653.6 L1059.5,654.3 L1060.0,653.1 L1060.5,653.9 L1061.0,654.4 L1061.5,654.2 L1062.0,654.6 L1062.5,654.0 L1063.0,655.6 L1063.5,653.9 L1064.0,654.3 L1064.5,654.9 L1065.0,654.6 L1065.5,654.3 L1066.0,654.9 L1066.5,655.6 L1067.0,654.8 L1067.5,654.7 L1068.0,655.5 L1068.5,656.3 L1069.0,655.0 L1069.5,655.0 L1070.0,655.8 L1070.5,656.8 L1071.0,655.0 L1071.5,655.9 L1072.0,655.2 L1072.5,655.3 L1073.0,656.8 L1073.5,655.4 L1074.0,655.2 L1074.5,656.8 L1075.0,656.5 L1075.5,656.1 L1076.0,656.4 L1076.5,656.5 L1077.0,657.6 L1077.5,656.2 L1078.0,655.9 L1078.5,656.6 L1079.0,656.1 L1079.5,656.4 L1080.0,656.3 L1080.5,656.4 L1081.0,656.9 L1081.5,656.8 L1082.0,657.5 L1082.5,656.1 L1083.0,657.2 L1083.5,656.8 L1084.0,657.4 L1084.5,656.8 L1085.0,656.8 L1085.5,657.6 L1086.0,657.3 L1086.5,657.6 L1087.0,658.0 L1087.5,657.5 L1088.0,657.4 L1088.5,657.8 L1089.0,658.3 L1089.5,657.7 L1090.0,658.2 L1090.5,657.4 L1091.0,658.3 L1091.5,658.5 L1092.0,659.3 L1092.5,659.0 L1093.0,657.8 L1093.5,658.0 L1094.0,659.1 L1094.5,658.7 L1095.0,659.2 L1095.5,657.5 L1096.0,658.6 L1096.5,658.6 L1097.0,658.8 L1097.5,658.5 L1098.0,658.5 L1098.5,658.7 L1099.0,658.6 L1099.5,658.7 L1100.0,658.6 L1100.5,658.6 L1101.0,658.8 L1101.5,659.7 L1102.0,658.8 L1102.5,658.9 L1103.0,659.3 L1103.5,658.7 L1104.0,658.4 L1104.5,659.2 L1105.0,659.6 L1105.5,658.4 L1106.0,659.3 L1106.5,659.3 L1107.0,659.0 L1107.5,659.9 L1108.0,659.2 L1108.5,659.3 L1109.0,660.4 L1109.5,659.3 L1110.0,658.6 L1110.5,660.8 L1111.0,660.3 L1111.5,660.0 L1112.0,659.7 L1112.5,660.1 L1113.0,659.5 L1113.5,660.1 L1114.0,660.3 L1114.5,659.8 L1115.0,659.5 L1115.5,659.5 L1116.0,659.3 L1116.5,659.5 L1117.0,659.4 L1117.5,659.8 L1118.0,659.8 L1118.5,659.6 L1119.0,660.0 L1119.5,661.0 L1120.0,660.0 L1120.5,659.8 L1121.0,660.2 L1121.5,659.0 L1122.0,660.6 L1122.5,660.0 L1123.0,659.8 L1123.5,660.4 L1124.0,660.0 L1124.5,659.5 L1125.0,659.9 L1125.5,659.6 L1126.0,660.1 L1126.5,659.9 L1127.0,660.0 L1127.5,659.4 L1128.0,659.5 L1128.5,660.9 L1129.0,661.3 L1129.5,660.6 L1130.0,660.6 L1130.5,660.9 L1131.0,660.7 L1131.5,660.6 L1132.0,659.3 L1132.5,660.1 L1133.0,659.9 L1133.5,660.4 L1134.0,660.3 L1134.5,660.1 L1135.0,661.5 L1135.5,660.7 L1136.0,659.8 L1136.5,660.1 L1137.0,660.7 L1137.5,660.0 L1138.0,660.8 L1138.5,660.4 L1139.0,660.4 L1139.5,660.2 L1140.0,660.6 L1140.5,659.6 L1141.0,659.8 L1141.5,659.7 L1142.0,661.0 L1142.5,659.9 L1143.0,660.0 L1143.5,660.1 L1144.0,659.9 L1144.5,659.1 L1145.0,660.1 L1145.5,659.6 L1146.0,660.1 L1146.5,659.7 L1147.0,660.7 L1147.5,660.1 L1148.0,660.7 L1148.5,660.0 L1149.0,659.4 L1149.5,660.4 L1150.0,659.7 L1150.5,659.8 L1151.0,661.3 L1151.5,660.5 L1152.0,660.7 L1152.5,660.0 L1153.0,659.5 L1153.5,660.0 L1154.0,661.2 L1154.5,660.2 L1155.0,660.4 L1155.5,661.0 L1156.0,659.1 L1156.5,660.8 L1157.0,660.5 L1157.5,660.2 L1158.0,660.3 L1158.5,660.1 L1159.0,660.9 L1159.5,659.0 L1160.0,659.8 L1160.5,659.9 L1161.0,659.9 L1161.5,660.6 L1162.0,659.7 L1162.5,659.5 L1163.0,661.1 L1163.5,659.7 L1164.0,660.0 L1164.5,660.3 L1165.0,659.2 L1165.5,661.3 L1166.0,660.2 L1166.5,660.3 L1167.0,660.8 L1167.5,660.3 L1168.0,660.2 L1168.5,660.5 L1169.0,659.6 L1169.5,660.4 L1170.0,659.5 L1170.5,659.9 L1171.0,661.0 L1171.5,658.9 L1172.0,660.4 L1172.5,660.3 L1173.0,660.7 L1173.5,660.8 L1174.0,661.5 L1174.5,659.4 L1175.0,660.1 L1175.5,660.8 L1176.0,660.0 L1176.5,658.6 L1177.0,659.8 L1177.5,660.5 L1178.0,660.4 L1178.5,660.6 L1179.0,660.1 L1179.5,660.0 L1180.0,660.6 L1180.5,660.2 L1181.0,660.2 L1181.5,660.0 L1182.0,659.8 L1182.5,660.2 L1183.0,660.0 L1183.5,661.0 L1184.0,660.4 L1184.5,660.2 L1185.0,660.6 L1185.5,660.5 L1186.0,660.9 L1186.5,659.9 L1187.0,659.9 L1187.5,659.8 L1188.0,659.6 L1188.5,659.8 L1189.0,659.8 L1189.5,660.5 L1190.0,659.5 L1190.5,659.8 L1191.0,660.0 L1191.5,660.0 L1192.0,660.6 L1192.5,659.9 L1193.0,660.0 L1193.5,659.9 L1194.0,660.5 L1194.5,660.2 L1195.0,659.9 L1195.5,659.7 L1196.0,660.6 L1196.5,660.4 L1197.0,660.9 L1197.5,660.7 L1198.0,659.5 L1198.5,659.4 L1199.0,660.9 L1199.5,660.3 L1200.0,659.9 L1200.5,659.9 L1201.0,659.3 L1201.5,659.8 L1202.0,660.4 L1202.5,659.5 L1203.0,659.6 L1203.5,660.1 L1204.0,660.9 L1204.5,660.5 L1205.0,659.9 L1205.5,659.5 L1206.0,660.2 L1206.5,660.0 L1207.0,660.0 L1207.5,660.1 L1208.0,660.6 L1208.5,659.9 L1209.0,660.0 L1209.5,660.8 L1210.0,658.6 L1210.5,660.0 L1211.0,658.8 L1211.5,660.0 L1212.0,660.0 L1212.5,660.2 L1213.0,659.5 L1213.5,660.8 L1214.0,659.2 L1214.5,660.0 L1215.0,659.2 L1215.5,660.2 L1216.0,659.9 L1216.5,660.0 L1217.0,659.7 L1217.5,660.2 L1218.0,659.6 L1218.5,660.4 L1219.0,660.6 L1219.5,659.3 L1220.0,659.7 L1220.5,658.8 L1221.0,658.6 L1221.5,659.4 L1222.0,659.8 L1222.5,660.3 L1223.0,659.7 L1223.5,659.6 L1224.0,660.3 L1224.5,660.3 L1225.0,659.8 L1225.5,660.8 L1226.0,660.6 L1226.5,658.8 L1227.0,659.9 L1227.5,660.0 L1228.0,660.4 L1228.5,659.1 L1229.0,659.7 L1229.5,659.4 L1230.0,660.3 L1230.5,659.1 L1231.0,660.7 L1231.5,659.0 L1232.0,659.7 L1232.5,658.9 L1233.0,659.5 L1233.5,659.6 L1234.0,660.1 L1234.5,659.8 L1235.0,659.4 L1235.5,658.9 L1236.0,660.0 L1236.5,658.9 L1237.0,659.8 L1237.5,659.4 L1238.0,660.3 L1238.5,659.4 L1239.0,658.5 L1239.5,659.6 L1240.0,658.2 L1240.5,659.1 L1241.0,662.4 L1241.5,659.9 L1242.0,658.7 L1242.5,660.2 L1243.0,660.5 L1243.5,659.2 L1244.0,660.1 L1244.5,657.9 L1245.0,658.5 L1245.5,659.0 L1246.0,659.3 L1246.5,656.7 L1247.0,660.2 L1247.5,660.3 L1248.0,658.8 L1248.5,659.4 L1249.0,659.4 L1249.5,657.4 L1250.0,657.1 L1250.5,661.0 L1251.0,660.5 L1251.5,659.6 L1252.0,659.3 L1252.5,657.3 L1253.0,657.8 L1253.5,658.3 L1254.0,657.2 L1254.5,658.9 L1255.0,657.5 L1255.5,658.7 L1256.0,657.7 L1256.5,658.7 L1257.0,659.4 L1257.5,658.2 L1258.0,658.5 L1258.5,656.8 L1259.0,657.8 L1259.5,656.4 L1260.0,659.8 L1260.5,658.1 L1261.0,658.3 L1261.5,658.7 L1262.0,658.3 L1262.5,658.3 L1263.0,657.9 L1263.5,658.2 L1264.0,658.3 L1264.5,656.7 L1265.0,659.0 L1265.5,657.7 L1266.0,657.1 L1266.5,658.3 L1267.0,657.9 L1267.5,656.2 L1268.0,659.4 L1268.5,657.2 L1269.0,656.5 L1269.5,657.3 L1270.0,657.6 L1270.5,656.4 L1271.0,656.3 L1271.5,658.1 L1272.0,656.5 L1272.5,656.6 L1273.0,657.4 L1273.5,659.5 L1274.0,660.2 L1274.5,658.0 L1275.0,657.5 L1275.5,657.3 L1276.0,654.7 L1276.5,656.2 L1277.0,657.9 L1277.5,654.8 L1278.0,657.3 L1278.5,656.7 L1279.0,658.2 L1279.5,655.4 L1280.0,657.1 L1280.5,656.4 L1281.0,657.0 L1281.5,655.9 L1282.0,656.6 L1282.5,656.8 L1283.0,656.0 L1283.5,655.6 L1284.0,655.2 L1284.5,657.1 L1285.0,656.4 L1285.5,656.9 L1286.0,656.1 L1286.5,656.3 L1287.0,656.1 L1287.5,656.3 L1288.0,654.4 L1288.5,654.9 L1289.0,655.6 L1289.5,655.2 L1290.0,656.1 L1290.5,654.6 L1291.0,657.0 L1291.5,654.4 L1292.0,654.8 L1292.5,655.0 L1293.0,655.9 L1293.5,655.0 L1294.0,655.5 L1294.5,656.9 L1295.0,655.2 L1295.5,654.7 L1296.0,655.0 L1296.5,655.6 L1297.0,655.3 L1297.5,654.9 L1298.0,656.9 L1298.5,653.4 L1299.0,656.1 L1299.5,656.2 L1300.0,654.6 L1300.5,655.1 L1301.0,656.1 L1301.5,655.8 L1302.0,655.6 L1302.5,655.9 L1303.0,655.4 L1303.5,656.2 L1304.0,657.5 L1304.5,656.0 L1305.0,656.7 L1305.5,655.5 L1306.0,655.6 L1306.5,657.2 L1307.0,655.8 L1307.5,655.3 L1308.0,656.4 L1308.5,656.5 L1309.0,655.1 L1309.5,655.6 L1310.0,654.8 L1310.5,655.7 L1311.0,655.6 L1311.5,656.7 L1312.0,655.4 L1312.5,654.6 L1313.0,656.4 L1313.5,656.0 L1314.0,655.3 L1314.5,656.7 L1315.0,655.6 L1315.5,656.1 L1316.0,656.7 L1316.5,655.1 L1317.0,656.3 L1317.5,657.1 L1318.0,655.6 L1318.5,654.2 L1319.0,656.2 L1319.5,656.5 L1320.0,659.4 L1320.5,654.3 L1321.0,654.2 L1321.5,657.0 L1322.0,656.5 L1322.5,656.5 L1323.0,657.5 L1323.5,655.6 L1324.0,656.8 L1324.5,656.6 L1325.0,657.6 L1325.5,657.3 L1326.0,656.0 L1326.5,657.4 L1327.0,656.2 L1327.5,655.2 L1328.0,657.8 L1328.5,655.7 L1329.0,655.9 L1329.5,656.4 L1330.0,656.3 L1330.5,655.6 L1331.0,656.1 L1331.5,655.2 L1332.0,656.2 L1332.5,657.2 L1333.0,658.3 L1333.5,657.3 L1334.0,655.9 L1334.5,658.0 L1335.0,656.3 L1335.5,657.9 L1336.0,657.2 L1336.5,656.4 L1337.0,658.0 L1337.5,657.4 L1338.0,656.8 L1338.5,657.3 L1339.0,658.3 L1339.5,657.3 L1340.0,657.5 L1340.5,657.9 L1341.0,657.2 L1341.5,657.0 L1342.0,656.5 L1342.5,656.6 L1343.0,658.5 L1343.5,657.5 L1344.0,658.5 L1344.5,657.1 L1345.0,657.3 L1345.5,657.3 L1346.0,658.8 L1346.5,657.7 L1347.0,658.2 L1347.5,656.7 L1348.0,658.4 L1348.5,658.9 L1349.0,658.0 L1349.5,658.3 L1350.0,657.4 L1350.5,658.1 L1351.0,658.0 L1351.5,657.3 L1352.0,659.9 L1352.5,657.8 L1353.0,659.8 L1353.5,656.3 L1354.0,659.3 L1354.5,655.9 L1355.0,657.9 L1355.5,657.9 L1356.0,658.1 L1356.5,657.6 L1357.0,659.1 L1357.5,656.9 L1358.0,660.1 L1358.5,659.1 L1359.0,660.3 L1359.5,660.5 L1360.0,659.5 L1360.5,659.2 L1361.0,658.2 L1361.5,660.3 L1362.0,658.2 L1362.5,658.0 L1363.0,659.0 L1363.5,658.4 L1364.0,657.6 L1364.5,659.0 L1365.0,658.2 L1365.5,658.5 L1366.0,659.3 L1366.5,657.4 L1367.0,658.4 L1367.5,659.6 L1368.0,658.9 L1368.5,658.0 L1369.0,658.5 L1369.5,658.7 L1370.0,659.9 L1370.5,658.3 L1371.0,660.4 L1371.5,657.9 L1372.0,661.0 L1372.5,659.3 L1373.0,659.8 L1373.5,660.2 L1374.0,657.3 L1374.5,661.0 L1375.0,659.6 L1375.5,658.6 L1376.0,660.2 L1376.5,658.5 L1377.0,660.4 L1377.5,660.1 L1378.0,661.9 L1378.5,659.7 L1379.0,659.4 L1379.5,659.5 L1380.0,659.2 L1380.5,660.5 L1381.0,659.6 L1381.5,659.6 L1382.0,659.4 L1382.5,661.4 L1383.0,659.0 L1383.5,660.1 L1384.0,660.6 L1384.5,660.7 L1385.0,660.3 L1385.5,659.3 L1386.0,661.5 L1386.5,659.7 L1387.0,661.4 L1387.5,659.9 L1388.0,659.7 L1388.5,660.4 L1389.0,658.1 L1389.5,661.4 L1390.0,659.8 L1390.5,661.1 L1391.0,660.4 L1391.5,660.2 L1392.0,659.7 L1392.5,659.2 L1393.0,661.1 L1393.5,661.2 L1394.0,662.1 L1394.5,660.5 L1395.0,660.5 L1395.5,661.8 L1396.0,660.9 L1396.5,661.0 L1397.0,660.6 L1397.5,661.4 L1398.0,660.9 L1398.5,660.6 L1399.0,661.1 L1399.5,661.0 L1400.0,661.2 L1400.5,660.9 L1401.0,661.8 L1401.5,660.2 L1402.0,660.1 L1402.5,661.6 L1403.0,661.6 L1403.5,661.5 L1404.0,663.2 L1404.5,660.5 L1405.0,660.4 L1405.5,661.5 L1406.0,661.7 L1406.5,660.3 L1407.0,661.0 L1407.5,660.9 L1408.0,660.7 L1408.5,661.1 L1409.0,660.7 L1409.5,661.3 L1410.0,662.0 L1410.5,660.0 L1411.0,660.8 L1411.5,661.7 L1412.0,661.4 L1412.5,659.5 L1413.0,661.1 L1413.5,663.2 L1414.0,661.8 L1414.5,660.4 L1415.0,662.2 L1415.5,661.9 L1416.0,662.6 L1416.5,662.3 L1417.0,661.2 L1417.5,661.8 L1418.0,661.8 L1418.5,661.7 L1419.0,661.9 L1419.5,662.5 L1420.0,661.7 L1420.5,660.6 L1421.0,662.5 L1421.5,662.3 L1422.0,661.5 L1422.5,661.0 L1423.0,661.7 L1423.5,662.5 L1424.0,663.0 L1424.5,661.9 L1425.0,661.7 L1425.5,662.5 L1426.0,663.2 L1426.5,661.8 L1427.0,661.7 L1427.5,661.3 L1428.0,662.0 L1428.5,662.9 L1429.0,660.6 L1429.5,663.3 L1430.0,662.2 L1430.5,661.8 L1431.0,663.4 L1431.5,662.6 L1432.0,660.8 L1432.5,660.7 L1433.0,662.3 L1433.5,662.2 L1434.0,661.8 L1434.5,661.3 L1435.0,662.6 L1435.5,662.4 L1436.0,661.5 L1436.5,660.6 L1437.0,662.6 L1437.5,662.8 L1438.0,662.1 L1438.5,662.3 L1439.0,661.2 L1439.5,661.9 L1440.0,662.7 L1440.5,662.0 L1441.0,660.5 L1441.5,662.9 L1442.0,662.0 L1442.5,661.5 L1443.0,661.8 L1443.5,663.4 L1444.0,659.2 L1444.5,661.9 L1445.0,662.8 L1445.5,663.0 L1446.0,662.3 L1446.5,662.5 L1447.0,663.4 L1447.5,661.9 L1448.0,661.9 L1448.5,663.4 L1449.0,660.6 L1449.5,663.3 L1450.0,663.0 L1450.5,661.7 L1451.0,661.6 L1451.5,662.1 L1452.0,662.6 L1452.5,662.5 L1453.0,661.4 L1453.5,660.5 L1454.0,662.0 L1454.5,663.4 L1455.0,661.3 L1455.5,662.7 L1456.0,661.9 L1456.5,662.6 L1457.0,661.7 L1457.5,661.4 L1458.0,660.4 L1458.5,661.4 L1459.0,661.1 L1459.5,662.4 L1460.0,662.6 L1460.5,661.9 L1461.0,662.1 L1461.5,661.9 L1462.0,661.4 L1462.5,663.1 L1463.0,660.9 L1463.5,661.1 L1464.0,662.5 L1464.5,663.4 L1465.0,662.2 L1465.5,662.1 L1466.0,661.8 L1466.5,663.0 L1467.0,661.7 L1467.5,663.4 L1468.0,662.1 L1468.5,663.0 L1469.0,662.7 L1469.5,663.1 L1470.0,661.5 L1470.5,663.4 L1471.0,661.9 L1471.5,663.0 L1472.0,662.5 L1472.5,663.0 L1473.0,661.1 L1473.5,662.3 L1474.0,663.4 L1474.5,661.4 L1475.0,663.4 L1475.5,662.0 L1476.0,663.4 L1476.5,661.1 L1477.0,661.6 L1477.5,663.2 L1478.0,662.4 L1478.5,662.5 L1479.0,662.1 L1479.5,659.9 L1480.0,661.4 L1480.5,661.7 L1481.0,661.1 L1481.5,662.7 L1482.0,663.3 L1482.5,662.1 L1483.0,660.9 L1483.5,662.6 L1484.0,662.7 L1484.5,662.9 L1485.0,661.3 L1485.5,659.3 L1486.0,663.4 L1486.5,662.0 L1487.0,662.3 L1487.5,662.7 L1488.0,662.6 L1488.5,662.6 L1489.0,662.0 L1489.5,662.1 L1490.0,662.2 L1490.5,663.3 L1491.0,661.7 L1491.5,660.8 L1492.0,663.2 L1492.5,663.4 L1493.0,663.1 L1493.5,663.4 L1494.0,660.5 L1494.5,663.2 L1495.0,662.8 L1495.5,663.1 L1496.0,662.1 L1496.5,661.7 L1497.0,663.4 L1497.5,660.9 L1498.0,663.4 L1498.5,662.8 L1499.0,662.2 L1499.5,662.8 L1500.0,663.4 L1500.5,662.9 L1501.0,660.5 L1501.5,663.4 L1502.0,662.0 L1502.5,662.2 L1503.0,663.3 L1503.5,662.8 L1504.0,663.4 L1504.5,662.6 L1505.0,662.9 L1505.5,662.3 L1506.0,661.7 L1506.5,661.0 L1507.0,663.0 L1507.5,662.8 L1508.0,661.6 L1508.5,662.4 L1509.0,662.9 L1509.5,661.5 L1510.0,663.2 L1510.5,661.8 L1511.0,663.4 L1511.5,663.3 L1512.0,662.1 L1512.5,662.4 L1513.0,662.1 L1513.5,662.0 L1514.0,662.8 L1514.5,662.3 L1515.0,662.1 L1515.5,661.8 L1516.0,663.4 L1516.5,663.4 L1517.0,663.3 L1517.5,661.2 L1518.0,662.0 L1518.5,661.4 L1519.0,663.4 L1519.5,663.4 L1520.0,663.3 L1520.5,663.1 L1521.0,663.0 L1521.5,661.3 L1522.0,663.4 L1522.5,662.5 L1523.0,661.2 L1523.5,662.8 L1524.0,662.4 L1524.5,661.0 L1525.0,662.9 L1525.5,661.6 L1526.0,662.2 L1526.5,663.2 L1527.0,661.1 L1527.5,662.1 L1528.0,663.0 L1528.5,663.4 L1529.0,661.5 L1529.5,662.1 L1530.0,661.8 L1530.5,663.3 L1531.0,663.1 L1531.5,663.4 L1532.0,661.8 L1532.5,661.7 L1533.0,663.4 L1533.5,662.5 L1534.0,662.2 L1534.5,662.4 L1535.0,663.4 L1535.5,662.8 L1536.0,661.8 L1536.5,662.2 L1537.0,663.4 L1537.5,663.4 L1538.0,663.4 L1538.5,663.3 L1539.0,662.0 L1539.5,662.8 L1540.0,661.9 L1540.5,661.2 L1541.0,662.7 L1541.5,662.8 L1542.0,661.5 L1542.5,662.5 L1543.0,661.7 L1543.5,662.7 L1544.0,663.3 L1544.5,661.7 L1545.0,662.0 L1545.5,662.3 L1546.0,662.8 L1546.5,662.9 L1547.0,661.6 L1547.5,662.9 L1548.0,663.3 L1548.5,660.8 L1549.0,663.4 L1549.5,663.4 L1550.0,661.7 L1550.5,661.8 L1551.0,663.0 L1551.5,663.4 L1552.0,661.3 L1552.5,663.3 L1553.0,663.4 L1553.5,663.4 L1554.0,663.4 L1554.5,662.7 L1555.0,663.1 L1555.5,662.8 L1556.0,662.3 L1556.5,663.3 L1557.0,662.3 L1557.5,663.4 L1558.0,662.6 L1558.5,663.3 L1559.0,662.0 L1559.5,663.4 L1560.0,661.8 L1560.5,661.4 L1561.0,661.7 L1561.5,663.4 L1562.0,663.4 L1562.5,663.2 L1563.0,661.8 L1563.5,660.2 L1564.0,662.5 L1564.5,662.2 L1565.0,663.1 L1565.5,659.5 L1566.0,663.4 L1566.5,663.3 L1567.0,663.4 L1567.5,661.4 L1568.0,662.2 L1568.5,662.9 L1569.0,662.7 L1569.5,662.4 L1570.0,663.3 L1570.5,662.0 L1571.0,662.8 L1571.5,663.4 L1572.0,662.2 L1572.5,662.6 L1573.0,662.0 L1573.5,661.4 L1574.0,663.4 L1574.5,663.4 L1575.0,662.0 L1575.5,660.8 L1576.0,663.4 L1576.5,663.4 L1577.0,663.4 L1577.5,663.3 L1578.0,662.5 L1578.5,662.4 L1579.0,663.4 L1579.5,663.3 L1580.0,663.4 L1580.5,662.4 L1581.0,663.4 L1581.5,663.4 L1582.0,662.3 L1582.5,663.4 L1583.0,662.6 L1583.5,660.7 L1584.0,663.4 L1584.5,662.9 L1585.0,663.3 L1585.5,663.4 L1586.0,661.6 L1586.5,663.1 L1587.0,662.8 L1587.5,662.1" fill="none" stroke="#c80000" stroke-width="1.25" stroke-linejoin="round" shape-rendering="crispEdges"/>
<line x1="579" y1="637.5" x2="601" y2="637.5" stroke="#0000ff" stroke-width="1"/>
<line x1="601" y1="637.5" x2="621" y2="637.5" stroke="#0000ff" stroke-width="1" stroke-dasharray="1 1.5"/>
<line x1="489" y1="644.5" x2="495" y2="644.5" stroke="#0000ff" stroke-width="1"/>
<line x1="549.5" y1="618.5" x2="553" y2="618.5" stroke="#0000ff" stroke-width="1"/>
<line x1="610.5" y1="524.5" x2="613" y2="524.5" stroke="#0000ff" stroke-width="1"/>
<line x1="657.5" y1="487.5" x2="660.5" y2="487.5" stroke="#0000ff" stroke-width="1"/>
<line x1="618.5" y1="430.5" x2="627" y2="430.5" stroke="#0000ff" stroke-width="1"/>
<line x1="667" y1="515.5" x2="677" y2="515.5" stroke="#0000ff" stroke-width="1"/>
<line x1="677" y1="515.5" x2="687" y2="515.5" stroke="#0000ff" stroke-width="1" stroke-dasharray="1 1.5"/>
<line x1="708.5" y1="508.5" x2="715.5" y2="508.5" stroke="#0000ff" stroke-width="1"/>
<line x1="773" y1="575.5" x2="792" y2="575.5" stroke="#0000ff" stroke-width="1"/>
<line x1="825" y1="529.5" x2="831" y2="529.5" stroke="#0000ff" stroke-width="1"/>
<line x1="888" y1="616.5" x2="892" y2="616.5" stroke="#0000ff" stroke-width="1"/>
<line x1="1012" y1="588.5" x2="1016" y2="588.5" stroke="#0000ff" stroke-width="1"/>
<line x1="1034" y1="585.5" x2="1038" y2="585.5" stroke="#0000ff" stroke-width="1"/>
<line x1="1042" y1="611.5" x2="1046" y2="611.5" stroke="#0000ff" stroke-width="1"/>
<line x1="1385" y1="652.5" x2="1530" y2="652.5" stroke="#0000ff" stroke-width="1"/>
<line x1="476" y1="662.5" x2="481" y2="662.5" stroke="#0000ff" stroke-width="1"/>
<line x1="487" y1="661.5" x2="490" y2="661.5" stroke="#0000ff" stroke-width="1"/>
<line x1="492" y1="661.5" x2="496" y2="661.5" stroke="#0000ff" stroke-width="1"/>
<line x1="1532" y1="661.5" x2="1537" y2="661.5" stroke="#0000ff" stroke-width="1"/>
<line x1="1546" y1="661.5" x2="1552" y2="661.5" stroke="#0000ff" stroke-width="1"/>
<g stroke="#000" stroke-width="1" fill="none">
<path d="M290.5,82 V665"/><path d="M1588.5,82 V665"/><path d="M290,82.5 H1589"/><path d="M290,664.5 H1589"/>
<path d="M301.5,83 V87 M301.5,660 V664"/>
<path d="M377.5,83 V87 M377.5,660 V664"/>
<path d="M453.5,83 V87 M453.5,660 V664"/>
<path d="M528.5,83 V87 M528.5,660 V664"/>
<path d="M604.5,83 V87 M604.5,660 V664"/>
<path d="M680.5,83 V87 M680.5,660 V664"/>
<path d="M756.5,83 V87 M756.5,660 V664"/>
<path d="M832.5,83 V87 M832.5,660 V664"/>
<path d="M908.5,83 V87 M908.5,660 V664"/>
<path d="M983.5,83 V87 M983.5,660 V664"/>
<path d="M1059.5,83 V87 M1059.5,660 V664"/>
<path d="M1135.5,83 V87 M1135.5,660 V664"/>
<path d="M1211.5,83 V87 M1211.5,660 V664"/>
<path d="M1287.5,83 V87 M1287.5,660 V664"/>
<path d="M1362.5,83 V87 M1362.5,660 V664"/>
<path d="M1438.5,83 V87 M1438.5,660 V664"/>
<path d="M1514.5,83 V87 M1514.5,660 V664"/>
<path d="M291,662.5 H295 M1584,662.5 H1588"/>
<path d="M291,615.5 H295 M1584,615.5 H1588"/>
<path d="M291,569.5 H295 M1584,569.5 H1588"/>
<path d="M291,523.5 H295 M1584,523.5 H1588"/>
<path d="M291,476.5 H295 M1584,476.5 H1588"/>
<path d="M291,430.5 H295 M1584,430.5 H1588"/>
<path d="M291,383.5 H295 M1584,383.5 H1588"/>
<path d="M291,337.5 H295 M1584,337.5 H1588"/>
<path d="M291,291.5 H295 M1584,291.5 H1588"/>
<path d="M291,244.5 H295 M1584,244.5 H1588"/>
<path d="M291,198.5 H295 M1584,198.5 H1588"/>
<path d="M291,152.5 H295 M1584,152.5 H1588"/>
<path d="M291,105.5 H295 M1584,105.5 H1588"/>
</g>
<g font-family="Liberation Sans, Arial, sans-serif" font-size="12.4px" fill="#000" shape-rendering="auto" text-rendering="geometricPrecision">
<text x="301.8" y="680.3" text-anchor="middle">200</text>
<text x="377.6" y="680.3" text-anchor="middle">250</text>
<text x="453.4" y="680.3" text-anchor="middle">300</text>
<text x="529.2" y="680.3" text-anchor="middle">350</text>
<text x="605.1" y="680.3" text-anchor="middle">400</text>
<text x="680.9" y="680.3" text-anchor="middle">450</text>
<text x="756.7" y="680.3" text-anchor="middle">500</text>
<text x="832.5" y="680.3" text-anchor="middle">550</text>
<text x="908.3" y="680.3" text-anchor="middle">600</text>
<text x="984.1" y="680.3" text-anchor="middle">650</text>
<text x="1060.0" y="680.3" text-anchor="middle">700</text>
<text x="1135.8" y="680.3" text-anchor="middle">750</text>
<text x="1211.6" y="680.3" text-anchor="middle">800</text>
<text x="1287.4" y="680.3" text-anchor="middle">850</text>
<text x="1363.2" y="680.3" text-anchor="middle">900</text>
<text x="1439.0" y="680.3" text-anchor="middle">950</text>
<text x="1514.8" y="680.3" text-anchor="middle">1000</text>
<text x="286.9" y="666.9" text-anchor="end">0</text>
<text x="286.9" y="620.5" text-anchor="end">10</text>
<text x="286.9" y="574.2" text-anchor="end">20</text>
<text x="286.9" y="527.8" text-anchor="end">30</text>
<text x="286.9" y="481.4" text-anchor="end">40</text>
<text x="286.9" y="435.0" text-anchor="end">50</text>
<text x="286.9" y="388.7" text-anchor="end">60</text>
<text x="286.9" y="342.3" text-anchor="end">70</text>
<text x="286.9" y="295.9" text-anchor="end">80</text>
<text x="286.9" y="249.5" text-anchor="end">90</text>
<text x="286.9" y="203.2" text-anchor="end">100</text>
<text x="286.9" y="156.8" text-anchor="end">110</text>
<text x="286.9" y="110.4" text-anchor="end">120</text>
<text x="939" y="695.3" text-anchor="middle">Wavelength [nm]</text>
<text transform="translate(242,373) rotate(-90)" text-anchor="middle">Intensity</text>
</g>
<g font-family="Liberation Sans, Arial, sans-serif" font-size="12.3px" text-anchor="middle" shape-rendering="auto">
<text x="621.6" y="194" fill="#118a11">411,28</text>
<text x="658.2" y="307.5" fill="#118a11">435,42</text>
<text x="618.1" y="363.5" fill="#118a11">409,02</text>
<text x="610.3" y="379.5" fill="#118a11">403,84</text>
<text x="677.6" y="362.5" fill="#118a11">448,24</text>
<text x="709.4" y="346.5" fill="#118a11">469,20</text>
<text x="697.4" y="390.5" fill="#118a11">461,30</text>
<text x="828.0" y="390.5" fill="#118a11">547,45</text>
<text x="874.8" y="430.5" fill="#118a11">578,29</text>
<text x="871.6" y="446.5" fill="#118a11">576,16</text>
<text x="786.8" y="482.5" fill="#118a11">520,27</text>
<text x="753.0" y="515.5" fill="#118a11">497,98</text>
<text x="721.4" y="531.5" fill="#118a11">477,10</text>
<text x="719.6" y="547.5" fill="#118a11">475,93</text>
<text x="718.4" y="563.5" fill="#118a11">475,13</text>
<text x="717.1" y="579.5" fill="#118a11">474,28</text>
<text x="890.0" y="565.5" fill="#118a11">588,31</text>
<text x="862.8" y="591.5" fill="#118a11">570,38</text>
<text x="1035.6" y="494.5" fill="#118a11">684,33</text>
<text x="1014.1" y="510.5" fill="#118a11">670,16</text>
<text x="1043.6" y="573.5" fill="#118a11">689,62</text>
<text x="550.9" y="569.5" fill="#118a11">364,66</text>
<text x="489.3" y="594.5" fill="#118a11">324,07</text>
<text x="487.8" y="610.5" fill="#118a11">323,03</text>
<text x="487.0" y="626.5" fill="#118a11">322,51</text>
<text x="485.4" y="654.5" fill="#118a11">321,47</text>
<text x="600.2" y="606.5" fill="#118a11">397,19</text>
<text x="1544.6" y="606.5" fill="#118a11">1020,00</text>
<text x="1541.9" y="622.5" fill="#118a11">1018,22</text>
<text x="1517.8" y="638.5" fill="#118a11">1002,38</text>
<text x="828.0" y="527.5" fill="#2828ff">4,66</text>
<text x="786.8" y="573.5" fill="#2828ff">12,26</text>
<text x="890.0" y="614.5" fill="#2828ff">1,93</text>
<text x="1014.1" y="587.5" fill="#2828ff">1,18</text>
<text x="1035.6" y="603.5" fill="#2828ff">2,19</text>
<text x="1043.6" y="619.5" fill="#2828ff">3,18</text>
<text x="550.9" y="616.5" fill="#2828ff">1,76</text>
<text x="658.2" y="485.5" fill="#2828ff">1,91</text>
<text x="610.3" y="521.5" fill="#2828ff">1,44</text>
<text x="1517.8" y="654.5" fill="#2828ff">94,77</text>
</g>
</svg>
<div class="hdr" style="left:232px;top:720px;width:1366px;height:21px"><span class="t" style="left:24px;top:4px;font-size:13px;transform:scaleX(0.9172)">Display</span></div>
<div class="hbox" style="left:235px;top:723px;height:15px"><svg width="13" height="13" style="position:absolute;left:0;top:0"><path d="M3,2 h7 l-3.500,4z M3,7 h7 l-3.500,4z" fill="#000"/></svg></div>
<!-- groups -->
<div class="grp" style="left:233px;top:750px;width:195px;height:76px"></div><span class="gl" style="left:241px;top:745px;transform:scaleX(0.9657)">x Axis</span>
<div class="grp" style="left:434px;top:750px;width:151px;height:76px"></div><span class="gl" style="left:442px;top:745px;transform:scaleX(0.9501)">y Axis</span>
<div class="grp" style="left:591px;top:750px;width:114px;height:76px"></div><span class="gl" style="left:600px;top:745px;transform:scaleX(0.9553)">Show</span>
<div class="grp" style="left:711px;top:750px;width:106px;height:76px"></div><span class="gl" style="left:720px;top:745px;transform:scaleX(0.9515)">Mouse Pointer</span>
<div class="grp" style="left:823px;top:750px;width:143px;height:76px"></div><span class="gl" style="left:832px;top:745px;transform:scaleX(0.9499)">Selection</span>
<div class="grp" style="left:972px;top:750px;width:129px;height:76px"></div><span class="gl" style="left:981px;top:745px;transform:scaleX(0.9222)">Smoothing</span>
<!-- x axis -->
<span class="t" style="left:242px;top:763px;transform:scaleX(0.9619)">Zoom:</span>
<div style="position:absolute;left:283px;top:766px;width:93px;height:4px;background:#e7eaea;border:1px solid #d6d6d6"></div>
<svg style="position:absolute;left:281px;top:758px" width="13" height="22"><path d="M1.500,1.500 h9 v13 l-4.500,5.500 l-4.500,-5.500z" fill="#dcdcdc" stroke="#9a9a9a"/></svg>
<span class="t" style="left:390px;top:763px;transform:scaleX(0.9430)">1,0 x</span>
<span class="t" style="left:242px;top:789px;transform:scaleX(1.0122)">Unit:</span>
<div class="rb on" style="left:270px;top:787px"></div><span class="t" style="left:288px;top:789px;transform:scaleX(0.9096)">nm</span>
<div class="rb" style="left:320px;top:787px"></div><span class="t" style="left:339px;top:789px;transform:scaleX(0.9865)">THz</span>
<div class="rb" style="left:367px;top:787px"></div><span class="t" style="left:386px;top:789px;transform:scaleX(1.0066)">1/cm</span>
<div class="rb" style="left:270px;top:805px"></div><span class="t" style="left:288px;top:807px;transform:scaleX(0.9459)">pixel</span>
<div class="rb" style="left:320px;top:805px"></div><span class="t" style="left:339px;top:807px;transform:scaleX(0.9726)">eV</span>
<div class="rb" style="left:367px;top:805px"></div><span class="t" style="left:386px;top:807px;transform:scaleX(0.9417)">Raman</span>
<!-- y axis -->
<div class="rb" style="left:440px;top:762px"></div><span class="t" style="left:459px;top:764px;transform:scaleX(0.9607)">Auto</span>
<div class="rb" style="left:440px;top:781px"></div><span class="t" style="left:459px;top:783px;transform:scaleX(0.9388)">Only up</span>
<div class="rb on" style="left:440px;top:800px"></div><span class="t" style="left:459px;top:802px;transform:scaleX(0.9199)">Fixed</span>
<span class="t" style="left:507px;top:762px;transform:scaleX(0.9383)">Min:</span><div class="inp" style="left:533px;top:757px;width:44px;height:20px;line-height:18px">-0,372</div>
<span class="t" style="left:507px;top:784px;transform:scaleX(0.9269)">Max:</span><div class="inp" style="left:533px;top:779px;width:44px;height:20px;line-height:18px">124,979</div>
<div class="cb" style="left:534px;top:805px"></div><span class="t" style="left:553px;top:807px;transform:scaleX(0.9586)">Log</span>
<!-- show -->
<div class="cb" style="left:597px;top:760px"><svg width="11" height="11" style="position:absolute;left:0;top:0"><path d="M2,5.500 l2.500,3 l4.500,-6.500" stroke="#000" stroke-width="1.800" fill="none"/></svg></div><span class="t" style="left:616px;top:762px;transform:scaleX(0.9451)">Peaks</span>
<div class="cb" style="left:657px;top:760px"></div><span class="t" style="left:675px;top:762px;transform:scaleX(0.9191)">Grid</span>
<div class="cb" style="left:597px;top:776px"><svg width="11" height="11" style="position:absolute;left:0;top:0"><path d="M2,5.500 l2.500,3 l4.500,-6.500" stroke="#000" stroke-width="1.800" fill="none"/></svg></div><span class="t" style="left:616px;top:778px;transform:scaleX(0.9610)">Peak widths</span>
<div class="cb" style="left:597px;top:792px"><svg width="11" height="11" style="position:absolute;left:0;top:0"><path d="M2,5.500 l2.500,3 l4.500,-6.500" stroke="#000" stroke-width="1.800" fill="none"/></svg></div><span class="t" style="left:616px;top:794px;transform:scaleX(0.9436)">Spectrum colors</span>
<!-- mouse pointer -->
<span class="t" style="left:719px;top:764px;transform:scaleX(0.9638)">x: 241,9832 nm</span>
<span class="t" style="left:719px;top:783px;transform:scaleX(1.0005)">y: 84,2722</span>
<div class="cb" style="left:717px;top:800px"></div><span class="t" style="left:735px;top:802px;transform:scaleX(0.9659)">snap to data</span>
<!-- selection -->
<span class="t" style="left:831px;top:764px;transform:scaleX(0.9592)">(none)</span>
<!-- smoothing -->
<div class="inp" style="left:978px;top:766px;width:47px;height:19px;text-align:left;padding-left:12px">1</div>
<svg style="position:absolute;left:1010px;top:767px" width="14" height="17"><rect x=".5" y=".5" width="13" height="8" fill="#ececec" stroke="#acacac"/><rect x=".5" y="8.500" width="13" height="8" fill="#ececec" stroke="#acacac"/><path d="M4,6 l3,-3.500 l3,3.500z M4,11 l3,3.500 l3,-3.500z" fill="#222"/></svg>
<span class="t" style="left:1031px;top:770px;transform:scaleX(0.9244)">pixels</span>
<div style="position:absolute;left:1065px;top:766px;width:27px;height:19px;border:1px solid #cfcfcf;background:#f0f0f0;color:#8c8c8c;text-align:center;line-height:17px">Off</div>
<div class="cb dis" style="left:979px;top:795px"></div><span class="t" style="left:998px;top:796px;color:#8c8c8c;transform:scaleX(0.9362)">Also show original</span>

<div style="position:absolute;left:0;top:838px;width:1600px;height:1px;background:#d4d4d4"></div>
<span class="t" style="left:4px;top:844px;font-size:12.500px;color:#111;transform:scaleX(0.9732)">No spectrometer found</span>
<div id="taskbar"></div>
<div class="tb" style="left:79px"></div>
<div class="tb" style="left:141px"></div>
<div class="tb" style="left:203px;background:linear-gradient(#f6cf5a,#eea848);border-color:#f8de90"></div>
<div class="tb" style="left:265px"></div>
<div class="tb" style="left:327px;background:linear-gradient(90deg,#aa4444,#c44a4a 40%,#e05252);border-color:#e07878"></div>
<div class="tb" style="left:389px;background:linear-gradient(#a48e82,#b0a096);border-color:#e8e0da"></div>
<svg id="tbi" style="position:absolute;left:0;top:860px" width="1600" height="40">
 <!-- IE -->
 <text x="29.500" y="34.300" font-family="Liberation Sans,Arial,sans-serif" font-weight="bold" font-size="55" fill="#38a8e8">e</text>
 <path d="M58,6 q-8,-6 -20,6 q-8,9 -5,21" fill="none" stroke="#f6c31c" stroke-width="3" stroke-linecap="round"/>
 <path d="M33,33 q2,5 8,-1" fill="none" stroke="#f6c31c" stroke-width="2.200" stroke-linecap="round"/>
 <path d="M37,15 q8,-7 18,-2" fill="none" stroke="#9adcf8" stroke-width="2"/>
 <!-- chrome -->
 <circle cx="108" cy="20.200" r="14.500" fill="#dd4b3e"/>
 <path d="M108,20.200 L95.440,12.950 A14.500,14.500 0 0 0 108,34.700 L114.500,24z" fill="#1da462"/>
 <path d="M108,20.200 L108,34.700 A14.500,14.500 0 0 0 120.560,12.950 L108,12.950z" fill="#ffce44"/>
 <path d="M101.700,23.800 L108,34.700 A14.500,14.500 0 0 0 114.300,23.800z" fill="#ffce44"/>
 <path d="M108,34.700 L101.700,23.800 L95.440,12.950 A14.500,14.500 0 0 0 108,34.700z" fill="#1da462"/>
 <circle cx="108" cy="20.200" r="7.200" fill="#fff"/><circle cx="108" cy="20.200" r="5.600" fill="#4a8af4"/>
 <!-- explorer -->
 <path d="M155,9 h8 l2,2.500 h19 v22 h-29z" fill="#e8cc70"/><path d="M157,11.500 h26 v3 h-26z" fill="#fbf4cc"/><path d="M154.500,14.500 h31 v19.500 h-31z" fill="#f8e49a"/><path d="M154.500,14.500 h31 v6 h-31z" fill="#fbeeb4"/>
 <path d="M159,23 h22 v12 h-5 v-7 h-12 v7 h-5z" fill="#6cb8ec"/><path d="M159,23 h22 v3 h-22z" fill="#a8dcf8"/>
 <rect x="159" y="8" width="6" height="2.500" fill="#30a848"/><rect x="166.500" y="9.500" width="4" height="2" fill="#d84040"/><rect x="175" y="11" width="5" height="2.500" fill="#4090e0"/>
 <!-- app -->
 <defs><linearGradient id="apg" x1="0" x2="0" y1="0" y2="1"><stop offset="0" stop-color="#f8fcff"/><stop offset=".5" stop-color="#b8dcf4"/><stop offset="1" stop-color="#e8f4fc"/></linearGradient></defs>
 <rect x="216.700" y="5.300" width="30" height="29.500" rx="3.500" fill="url(#apg)" stroke="#1c4e80" stroke-width="1.600"/>
 <path d="M221,30 q9,-8 13,-20 q6,10 10,20" fill="none" stroke="#e89030" stroke-width="1.600"/>
 <path d="M222,27 q8,-6 12,-16 q5,9 9,17" fill="none" stroke="#70b848" stroke-width="1.400"/>
 <path d="M221,28.500 q8,-7 12.500,-19.500 q3,-1 4,2 q4,9 7,15 q-5,-6 -9,-10 q-5,8 -14.500,12.500z" fill="#1c5c9c"/>
 <!-- winrar -->
 <g stroke="#302028" stroke-width=".5" stroke-linejoin="round">
  <path d="M278,12 L302,9 L310,13 L286,17z" fill="#c868c0"/><path d="M286,17 L310,13 L310,19 L286,23z" fill="#a02890"/><path d="M278,12 L286,17 L286,23 L278,18z" fill="#ececf4"/>
  <path d="M286,23 L310,19 L310,25.500 L286,29z" fill="#1838e0"/><path d="M278,18 L286,23 L286,29 L278,24z" fill="#e2e2ee"/>
  <path d="M286,29 L310,25.500 L310,31 L286,34.500z" fill="#18b030"/><path d="M278,24 L286,29 L286,34.500 L278,29.500z" fill="#e2e2ee"/>
 </g>
 <path d="M291,10.400 L295,9.900 L301,14.200 L301,33 L297,33.600 L297,15z" fill="#b87830" stroke="#60380c" stroke-width=".4"/><rect x="296" y="20.500" width="6" height="5" fill="#d8d8d8" stroke="#404040" stroke-width=".6"/><rect x="298.300" y="21.500" width="1.400" height="3" fill="#404040"/>
 <path d="M288,18.500 v3 M288,24.500 v3 M288,30 v3" stroke="#e8c850" stroke-width="1.200"/>
 <!-- red app -->
 <defs><radialGradient id="fb" cx=".4" cy=".35" r=".7"><stop offset="0" stop-color="#ffffff"/><stop offset=".6" stop-color="#dcecfc"/><stop offset="1" stop-color="#9cb8e8"/></radialGradient></defs>
 <circle cx="355" cy="18.500" r="13.500" fill="url(#fb)" stroke="#7c88d0" stroke-width="1.200"/>
 <ellipse cx="355" cy="10" rx="9" ry="3" fill="none" stroke="#8c98d8" stroke-width="1.200"/>
 <path d="M346,27 q9,6 18,0 q-2,5 -9,5.500 q-7,-0.500 -9,-5.500z" fill="#58b0e8"/>
 <path d="M350,24 q3,-4 6,0" stroke="#e8a030" stroke-width="1.500" fill="none"/>
 <circle cx="364.300" cy="26.300" r="8" fill="#2a7ac8"/>
 <path d="M358.500,26.300 h11.500 M361,22 v8.600 M367.500,22 v8.600 l-6.500,-4.300z" stroke="#fff" stroke-width="1" fill="none"/>
 <!-- spectrum app -->
 <defs><linearGradient id="ti" x1="0" x2="1" y1="0" y2="0"><stop offset="0" stop-color="#08000c"/><stop offset=".16" stop-color="#8010c0"/><stop offset=".26" stop-color="#3010c0"/><stop offset=".38" stop-color="#1030f0"/><stop offset=".46" stop-color="#008860"/><stop offset=".55" stop-color="#30d000"/><stop offset=".68" stop-color="#f0e000"/><stop offset=".78" stop-color="#ff6000"/><stop offset=".86" stop-color="#e01010"/><stop offset=".95" stop-color="#500000"/><stop offset="1" stop-color="#100000"/></linearGradient><linearGradient id="tiv" x1="0" x2="0" y1="0" y2="1"><stop offset="0" stop-color="#000" stop-opacity=".75"/><stop offset=".25" stop-color="#000" stop-opacity="0"/><stop offset=".75" stop-color="#000" stop-opacity="0"/><stop offset="1" stop-color="#000" stop-opacity=".75"/></linearGradient></defs>
 <rect x="402" y="4" width="32" height="32" fill="#000"/><rect x="404" y="4" width="28" height="32" fill="url(#ti)"/><rect x="402" y="4" width="32" height="32" fill="url(#tiv)"/>
 <!-- tray -->
 <path d="M1369,24 l4.500,-5 l4.500,5z" fill="#fff"/>
 <text x="1390" y="24" font-family="Liberation Sans,Arial,sans-serif" font-weight="bold" font-size="13" fill="#fff">S</text><rect x="1396" y="20" width="9" height="6" fill="#38a0e0"/><rect x="1394" y="26.500" width="12" height="1.500" fill="#e8e8e8"/>
 <path d="M1415,14 v14" stroke="#fff" stroke-width="1.600"/><path d="M1417,15 q4,-1.500 6,0 v7 q-3,-1.500 -6,0z" fill="#fff"/><path d="M1424,17 q3,1 5,0 q-1,5 -5,5z" fill="#fff"/>
 <rect x="1445" y="16" width="8" height="11.500" rx="1" fill="none" stroke="#fff" stroke-width="1.400"/><rect x="1447.500" y="14" width="3" height="2" fill="#fff"/><rect x="1447" y="20" width="4" height="6" fill="#fff"/>
 <g fill="#fff"><rect x="1463" y="24" width="2" height="2"/><rect x="1466" y="22" width="2" height="4"/><rect x="1469" y="20" width="2" height="6"/><rect x="1472" y="18" width="2" height="8"/><rect x="1475" y="15.500" width="2" height="10.500"/></g>
 <path d="M1486,18 h3 l4,-4 v14 l-4,-4 h-3z" fill="#fff"/><path d="M1495,18 q2,3 0,6 M1497.500,16 q3.500,5 0,10 M1500,14 q5,7 0,14" stroke="#fff" stroke-width="1.100" fill="none"/>
 <g font-family="Liberation Sans,Arial,sans-serif" font-size="12" fill="#fff" text-anchor="middle"><text x="1547.500" y="17" textLength="26" lengthAdjust="spacingAndGlyphs">17:53</text><text x="1547" y="34" textLength="54" lengthAdjust="spacingAndGlyphs">04.08.2017</text></g>
</svg>

</body></html>
